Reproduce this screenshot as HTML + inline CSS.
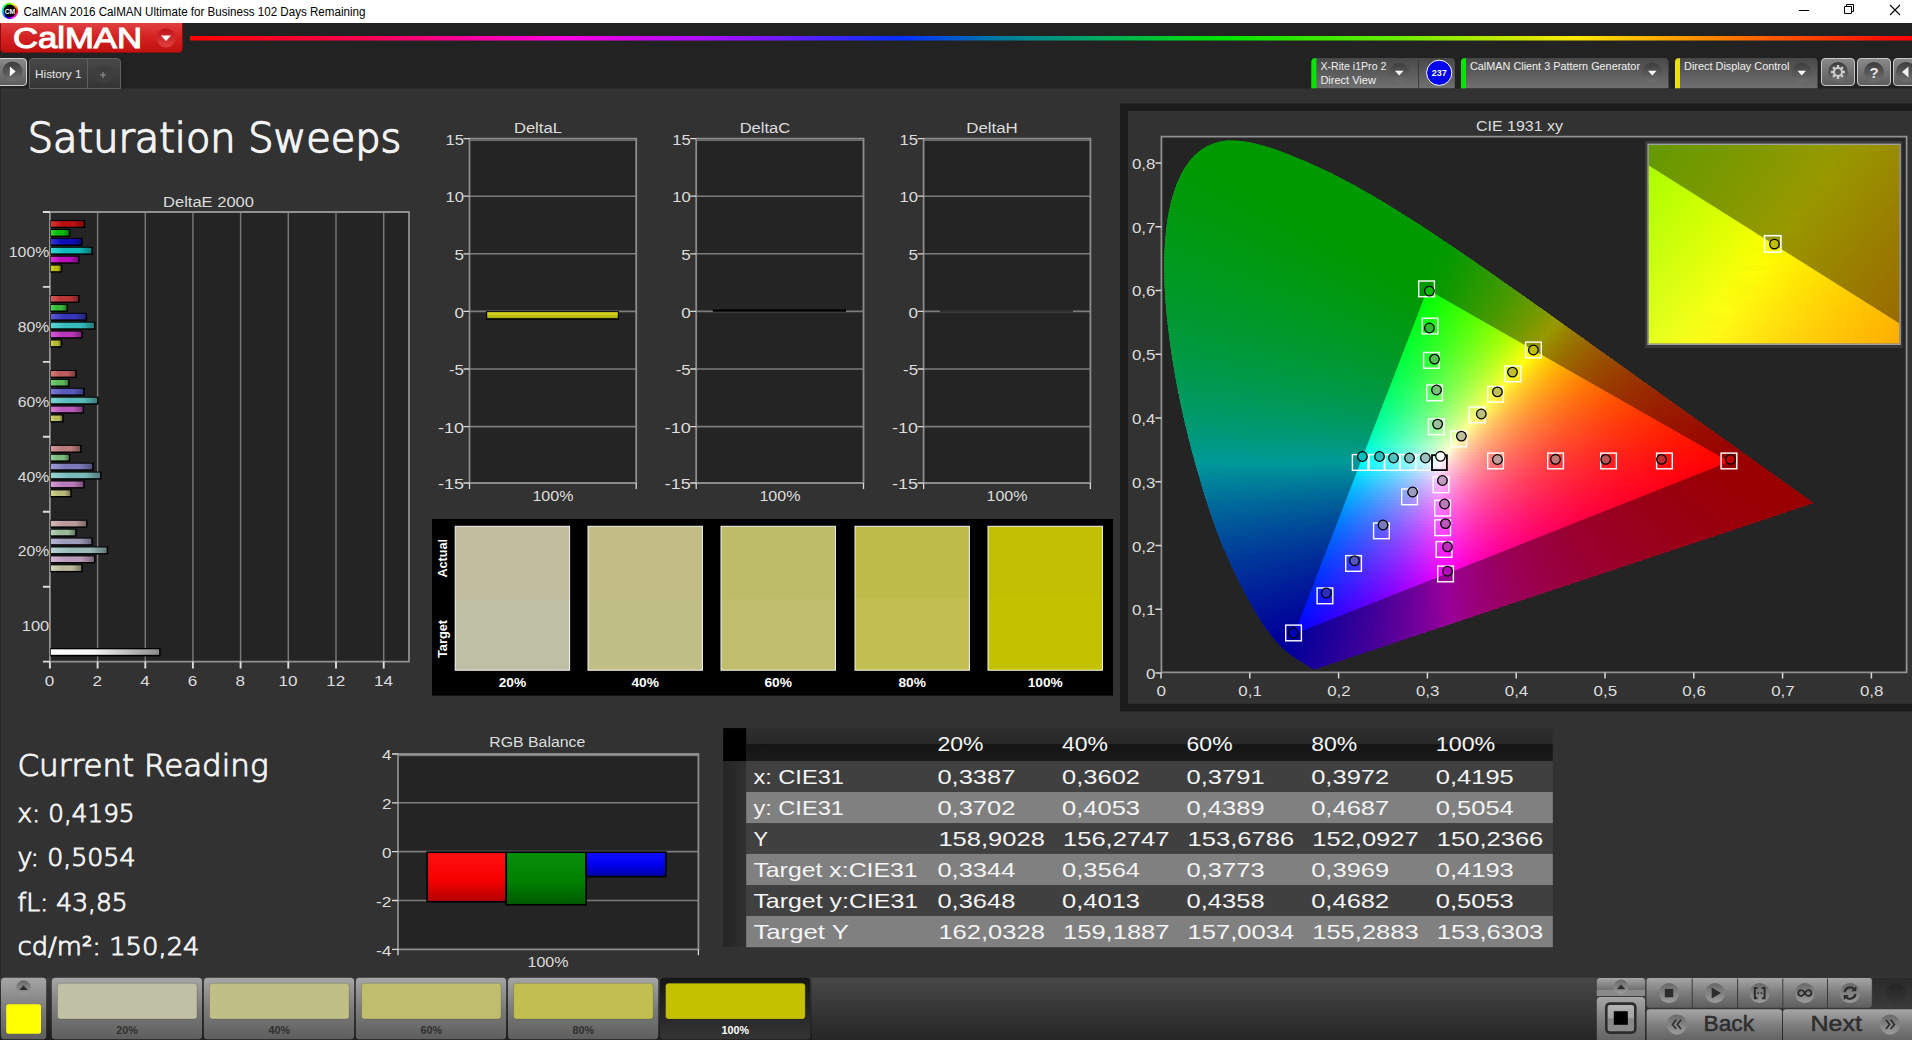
<!DOCTYPE html>
<html lang="en"><head><meta charset="utf-8"><title>CalMAN 2016 - Saturation Sweeps</title>
<style>
html,body{margin:0;padding:0;background:#323232;overflow:hidden}
body{width:1912px;height:1040px;position:relative;font-family:'Liberation Sans','DejaVu Sans',sans-serif}
svg{position:absolute;left:0;top:0;display:block}
svg text{font-family:'Liberation Sans','DejaVu Sans',sans-serif}
svg text.lt{font-family:'DejaVu Sans Light','DejaVu Sans',sans-serif;font-weight:200}
</style></head><body>
<svg width="1912" height="1040" viewBox="0 0 1912 1040">
<defs>
<linearGradient id="redbtn" x1="0" y1="0" x2="0" y2="1"><stop offset="0" stop-color="#e04040"/><stop offset=".5" stop-color="#d42020"/><stop offset="1" stop-color="#c01010"/></linearGradient>
<linearGradient id="redcirc" x1="0" y1="0" x2="0" y2="1"><stop offset="0" stop-color="#c01018"/><stop offset="1" stop-color="#e04040"/></linearGradient>
<linearGradient id="rainbow" gradientUnits="userSpaceOnUse" x1="190" x2="1912"><stop offset="0" stop-color="#ff0000"/><stop offset=".1" stop-color="#ff0050"/><stop offset=".215" stop-color="#ff00e0"/><stop offset=".31" stop-color="#a010ff"/><stop offset=".415" stop-color="#0030ff"/><stop offset=".47" stop-color="#007ca0"/><stop offset=".515" stop-color="#00a070"/><stop offset=".6" stop-color="#00e400"/><stop offset=".7" stop-color="#68ee00"/><stop offset=".805" stop-color="#ffe800"/><stop offset=".9" stop-color="#ff7000"/><stop offset="1" stop-color="#ff0000"/></linearGradient>
<linearGradient id="btngray" x1="0" y1="0" x2="0" y2="1"><stop offset="0" stop-color="#8a8a8a"/><stop offset="1" stop-color="#5c5c5c"/></linearGradient>
<linearGradient id="tabdark" x1="0" y1="0" x2="0" y2="1"><stop offset="0" stop-color="#484848"/><stop offset="1" stop-color="#343434"/></linearGradient>
<linearGradient id="circdark" x1="0" y1="0" x2="0" y2="1"><stop offset="0" stop-color="#3c3c3c"/><stop offset="1" stop-color="#707070"/></linearGradient>
<linearGradient id="tabgray" x1="0" y1="0" x2="0" y2="1"><stop offset="0" stop-color="#484848"/><stop offset="1" stop-color="#707070"/></linearGradient>
<linearGradient id="bg0" x1="0" x2="1"><stop offset="0" stop-color="#d43737"/><stop offset=".35" stop-color="#ba0f0f"/><stop offset=".7" stop-color="#ba0f0f"/><stop offset="1" stop-color="#7b0a0a"/></linearGradient>
<linearGradient id="bg1" x1="0" x2="1"><stop offset="0" stop-color="#37d437"/><stop offset=".35" stop-color="#0fba0f"/><stop offset=".7" stop-color="#0fba0f"/><stop offset="1" stop-color="#0a7b0a"/></linearGradient>
<linearGradient id="bg2" x1="0" x2="1"><stop offset="0" stop-color="#3737d4"/><stop offset=".35" stop-color="#0f0fba"/><stop offset=".7" stop-color="#0f0fba"/><stop offset="1" stop-color="#0a0a7b"/></linearGradient>
<linearGradient id="bg3" x1="0" x2="1"><stop offset="0" stop-color="#37d4d4"/><stop offset=".35" stop-color="#0fbaba"/><stop offset=".7" stop-color="#0fbaba"/><stop offset="1" stop-color="#0a7b7b"/></linearGradient>
<linearGradient id="bg4" x1="0" x2="1"><stop offset="0" stop-color="#d437d4"/><stop offset=".35" stop-color="#ba0fba"/><stop offset=".7" stop-color="#ba0fba"/><stop offset="1" stop-color="#7b0a7b"/></linearGradient>
<linearGradient id="bg5" x1="0" x2="1"><stop offset="0" stop-color="#d4d437"/><stop offset=".35" stop-color="#baba0f"/><stop offset=".7" stop-color="#baba0f"/><stop offset="1" stop-color="#7b7b0a"/></linearGradient>
<linearGradient id="bg6" x1="0" x2="1"><stop offset="0" stop-color="#d45c5c"/><stop offset=".35" stop-color="#ba3737"/><stop offset=".7" stop-color="#ba3737"/><stop offset="1" stop-color="#7b2424"/></linearGradient>
<linearGradient id="bg7" x1="0" x2="1"><stop offset="0" stop-color="#5cd45c"/><stop offset=".35" stop-color="#37ba37"/><stop offset=".7" stop-color="#37ba37"/><stop offset="1" stop-color="#247b24"/></linearGradient>
<linearGradient id="bg8" x1="0" x2="1"><stop offset="0" stop-color="#5c5cd4"/><stop offset=".35" stop-color="#3737ba"/><stop offset=".7" stop-color="#3737ba"/><stop offset="1" stop-color="#24247b"/></linearGradient>
<linearGradient id="bg9" x1="0" x2="1"><stop offset="0" stop-color="#5cd4d4"/><stop offset=".35" stop-color="#37baba"/><stop offset=".7" stop-color="#37baba"/><stop offset="1" stop-color="#247b7b"/></linearGradient>
<linearGradient id="bg10" x1="0" x2="1"><stop offset="0" stop-color="#d45cd4"/><stop offset=".35" stop-color="#ba37ba"/><stop offset=".7" stop-color="#ba37ba"/><stop offset="1" stop-color="#7b247b"/></linearGradient>
<linearGradient id="bg11" x1="0" x2="1"><stop offset="0" stop-color="#d4d45c"/><stop offset=".35" stop-color="#baba37"/><stop offset=".7" stop-color="#baba37"/><stop offset="1" stop-color="#7b7b24"/></linearGradient>
<linearGradient id="bg12" x1="0" x2="1"><stop offset="0" stop-color="#d47c7c"/><stop offset=".35" stop-color="#ba5a5a"/><stop offset=".7" stop-color="#ba5a5a"/><stop offset="1" stop-color="#7b3b3b"/></linearGradient>
<linearGradient id="bg13" x1="0" x2="1"><stop offset="0" stop-color="#7cd47c"/><stop offset=".35" stop-color="#5aba5a"/><stop offset=".7" stop-color="#5aba5a"/><stop offset="1" stop-color="#3b7b3b"/></linearGradient>
<linearGradient id="bg14" x1="0" x2="1"><stop offset="0" stop-color="#7c7cd4"/><stop offset=".35" stop-color="#5a5aba"/><stop offset=".7" stop-color="#5a5aba"/><stop offset="1" stop-color="#3b3b7b"/></linearGradient>
<linearGradient id="bg15" x1="0" x2="1"><stop offset="0" stop-color="#7cd4d4"/><stop offset=".35" stop-color="#5ababa"/><stop offset=".7" stop-color="#5ababa"/><stop offset="1" stop-color="#3b7b7b"/></linearGradient>
<linearGradient id="bg16" x1="0" x2="1"><stop offset="0" stop-color="#d47cd4"/><stop offset=".35" stop-color="#ba5aba"/><stop offset=".7" stop-color="#ba5aba"/><stop offset="1" stop-color="#7b3b7b"/></linearGradient>
<linearGradient id="bg17" x1="0" x2="1"><stop offset="0" stop-color="#d4d47c"/><stop offset=".35" stop-color="#baba5a"/><stop offset=".7" stop-color="#baba5a"/><stop offset="1" stop-color="#7b7b3b"/></linearGradient>
<linearGradient id="bg18" x1="0" x2="1"><stop offset="0" stop-color="#d49a9a"/><stop offset=".35" stop-color="#ba7b7b"/><stop offset=".7" stop-color="#ba7b7b"/><stop offset="1" stop-color="#7b5151"/></linearGradient>
<linearGradient id="bg19" x1="0" x2="1"><stop offset="0" stop-color="#9ad49a"/><stop offset=".35" stop-color="#7bba7b"/><stop offset=".7" stop-color="#7bba7b"/><stop offset="1" stop-color="#517b51"/></linearGradient>
<linearGradient id="bg20" x1="0" x2="1"><stop offset="0" stop-color="#9a9ad4"/><stop offset=".35" stop-color="#7b7bba"/><stop offset=".7" stop-color="#7b7bba"/><stop offset="1" stop-color="#51517b"/></linearGradient>
<linearGradient id="bg21" x1="0" x2="1"><stop offset="0" stop-color="#9ad4d4"/><stop offset=".35" stop-color="#7bbaba"/><stop offset=".7" stop-color="#7bbaba"/><stop offset="1" stop-color="#517b7b"/></linearGradient>
<linearGradient id="bg22" x1="0" x2="1"><stop offset="0" stop-color="#d49ad4"/><stop offset=".35" stop-color="#ba7bba"/><stop offset=".7" stop-color="#ba7bba"/><stop offset="1" stop-color="#7b517b"/></linearGradient>
<linearGradient id="bg23" x1="0" x2="1"><stop offset="0" stop-color="#d4d49a"/><stop offset=".35" stop-color="#baba7b"/><stop offset=".7" stop-color="#baba7b"/><stop offset="1" stop-color="#7b7b51"/></linearGradient>
<linearGradient id="bg24" x1="0" x2="1"><stop offset="0" stop-color="#d4b7b7"/><stop offset=".35" stop-color="#ba9b9b"/><stop offset=".7" stop-color="#ba9b9b"/><stop offset="1" stop-color="#7b6666"/></linearGradient>
<linearGradient id="bg25" x1="0" x2="1"><stop offset="0" stop-color="#b7d4b7"/><stop offset=".35" stop-color="#9bba9b"/><stop offset=".7" stop-color="#9bba9b"/><stop offset="1" stop-color="#667b66"/></linearGradient>
<linearGradient id="bg26" x1="0" x2="1"><stop offset="0" stop-color="#b7b7d4"/><stop offset=".35" stop-color="#9b9bba"/><stop offset=".7" stop-color="#9b9bba"/><stop offset="1" stop-color="#66667b"/></linearGradient>
<linearGradient id="bg27" x1="0" x2="1"><stop offset="0" stop-color="#b7d4d4"/><stop offset=".35" stop-color="#9bbaba"/><stop offset=".7" stop-color="#9bbaba"/><stop offset="1" stop-color="#667b7b"/></linearGradient>
<linearGradient id="bg28" x1="0" x2="1"><stop offset="0" stop-color="#d4b7d4"/><stop offset=".35" stop-color="#ba9bba"/><stop offset=".7" stop-color="#ba9bba"/><stop offset="1" stop-color="#7b667b"/></linearGradient>
<linearGradient id="bg29" x1="0" x2="1"><stop offset="0" stop-color="#d4d4b7"/><stop offset=".35" stop-color="#baba9b"/><stop offset=".7" stop-color="#baba9b"/><stop offset="1" stop-color="#7b7b66"/></linearGradient>
<linearGradient id="bgw" x1="0" x2="1"><stop offset="0" stop-color="#fff"/><stop offset=".4" stop-color="#f4f4f4"/><stop offset="1" stop-color="#8c8c8c"/></linearGradient>
<linearGradient id="ybar" x1="0" y1="0" x2="0" y2="1"><stop offset="0" stop-color="#e6e628"/><stop offset=".5" stop-color="#c4c410"/><stop offset="1" stop-color="#a8a808"/></linearGradient>
<clipPath id="locclip"><path d="M1315.6 669L1314.1 669.1L1312.6 668.7L1311.3 668L1309.6 667L1307.9 665.9L1306.5 664.9L1304.7 663.8L1303.4 663L1301.8 662L1300.1 660.9L1298.2 659.7L1296.2 658.4L1293.9 656.9L1291.5 655.2L1290.2 654.3L1288.8 653.3L1287.5 652.2L1286 651L1284.5 649.8L1283 648.4L1281.3 646.8L1279.6 645L1277.7 642.9L1275.6 640.7L1273.5 638.1L1271.2 635.3L1268.9 632.3L1266.4 629L1263.8 625.3L1261.1 621.3L1258.3 616.8L1255.4 612L1252.3 606.6L1249 600.8L1245.6 594.4L1242.1 587.6L1238.3 580.2L1234.4 572.2L1230.4 563.5L1226.2 554.2L1222 544.2L1217.8 533.5L1213.7 522.2L1209.5 510.2L1205.4 497.5L1201.3 484.1L1197.2 470.1L1193.1 455.5L1189.2 440.4L1185.4 424.9L1181.8 409.1L1178.5 393.1L1175.4 377L1172.7 360.9L1170.3 344.9L1168.3 328.9L1166.6 313.2L1165.3 297.9L1164.5 283L1164.2 268.6L1164.4 254.7L1165.1 241.2L1166.3 228.4L1168.1 216.1L1170.4 204.6L1173.3 193.9L1176.8 184L1180.8 175.1L1185.2 167.2L1190.1 160.3L1195.5 154.5L1201.3 149.8L1207.3 146.1L1213.7 143.4L1220.2 141.5L1227 140.6L1233.9 140.4L1240.9 140.9L1248 142L1255.1 143.5L1262.4 145.4L1269.6 147.6L1276.9 150.1L1284.2 152.7L1291.3 155.5L1298.4 158.4L1305.3 161.3L1312.2 164.3L1318.9 167.4L1325.6 170.6L1332.3 173.8L1338.9 177.2L1345.4 180.6L1351.9 184.1L1358.4 187.6L1364.9 191.2L1371.4 194.9L1377.8 198.7L1384.2 202.5L1390.6 206.4L1397 210.4L1403.4 214.4L1409.8 218.4L1416.1 222.5L1422.5 226.6L1428.8 230.8L1435.2 235L1441.5 239.2L1447.9 243.5L1454.2 247.8L1460.6 252.1L1466.9 256.5L1473.3 260.8L1479.6 265.2L1486 269.6L1492.3 274.1L1498.7 278.5L1505 282.9L1511.3 287.4L1517.6 291.8L1524 296.3L1530.3 300.7L1536.6 305.2L1542.8 309.6L1549.1 314.1L1555.3 318.5L1561.5 322.9L1567.7 327.4L1573.9 331.8L1580 336.2L1586.2 340.5L1592.2 344.9L1598.3 349.2L1604.2 353.5L1610.2 357.7L1616.1 361.9L1621.9 366.1L1627.7 370.3L1633.5 374.4L1639.2 378.4L1644.8 382.5L1650.3 386.4L1655.8 390.3L1661.2 394.2L1666.5 398L1671.7 401.7L1676.9 405.4L1681.9 409L1686.9 412.6L1691.7 416L1696.4 419.4L1700.9 422.6L1705.3 425.8L1709.6 428.8L1713.7 431.8L1717.8 434.7L1721.8 437.5L1725.7 440.3L1729.5 443L1733.1 445.6L1736.6 448.2L1740 450.6L1743.2 452.9L1746.3 455.1L1749.3 457.2L1752.2 459.2L1755 461.2L1757.6 463.1L1760.2 464.9L1762.6 466.7L1764.9 468.3L1767.1 469.9L1769.3 471.4L1771.3 472.9L1773.2 474.3L1775.1 475.6L1776.8 476.9L1778.5 478.1L1780.1 479.2L1781.7 480.3L1783.1 481.4L1784.5 482.4L1785.9 483.3L1787.2 484.3L1788.4 485.1L1790.8 486.8L1793 488.4L1795.1 489.9L1796.9 491.2L1798.7 492.5L1800.3 493.6L1801.7 494.7L1803.1 495.6L1804.7 496.8L1806.1 497.8L1807.7 498.9L1809 499.8L1810.2 500.7L1811.5 501.7L1812.8 502.6L1813.4 503Z"/></clipPath>
<linearGradient id="c0" gradientUnits="userSpaceOnUse" x1="1214" x2="1253.7"><stop offset="0" stop-color="#0f0"/><stop offset=".5" stop-color="#0f0"/><stop offset="1" stop-color="#0f0"/></linearGradient>
<linearGradient id="c1" gradientUnits="userSpaceOnUse" x1="1206.5" x2="1265.3"><stop offset="0" stop-color="#0f0"/><stop offset=".333" stop-color="#0f0"/><stop offset=".667" stop-color="#0f0"/><stop offset="1" stop-color="#0f0"/></linearGradient>
<linearGradient id="c2" gradientUnits="userSpaceOnUse" x1="1201.5" x2="1274.8"><stop offset="0" stop-color="#0f0"/><stop offset=".333" stop-color="#0f0"/><stop offset=".667" stop-color="#0f0"/><stop offset="1" stop-color="#0f0"/></linearGradient>
<linearGradient id="c3" gradientUnits="userSpaceOnUse" x1="1197.5" x2="1283.3"><stop offset="0" stop-color="#0f0"/><stop offset=".25" stop-color="#0f0"/><stop offset=".5" stop-color="#0f0"/><stop offset=".75" stop-color="#0f0"/><stop offset="1" stop-color="#0f0"/></linearGradient>
<linearGradient id="c4" gradientUnits="userSpaceOnUse" x1="1194" x2="1291.1"><stop offset="0" stop-color="#0f0"/><stop offset=".25" stop-color="#0f0"/><stop offset=".5" stop-color="#0f0"/><stop offset=".75" stop-color="#0f0"/><stop offset="1" stop-color="#0f0"/></linearGradient>
<linearGradient id="c5" gradientUnits="userSpaceOnUse" x1="1191.2" x2="1298.5"><stop offset="0" stop-color="#00ff01"/><stop offset=".2" stop-color="#0f0"/><stop offset=".4" stop-color="#0f0"/><stop offset=".6" stop-color="#0f0"/><stop offset=".8" stop-color="#0f0"/><stop offset="1" stop-color="#0f0"/></linearGradient>
<linearGradient id="c6" gradientUnits="userSpaceOnUse" x1="1188.6" x2="1305.6"><stop offset="0" stop-color="#00ff02"/><stop offset=".2" stop-color="#0f0"/><stop offset=".4" stop-color="#0f0"/><stop offset=".6" stop-color="#0f0"/><stop offset=".8" stop-color="#0f0"/><stop offset="1" stop-color="#0f0"/></linearGradient>
<linearGradient id="c7" gradientUnits="userSpaceOnUse" x1="1186.5" x2="1312.4"><stop offset="0" stop-color="#00ff03"/><stop offset=".2" stop-color="#0f0"/><stop offset=".4" stop-color="#0f0"/><stop offset=".6" stop-color="#0f0"/><stop offset=".8" stop-color="#0f0"/><stop offset="1" stop-color="#0f0"/></linearGradient>
<linearGradient id="c8" gradientUnits="userSpaceOnUse" x1="1184.3" x2="1319"><stop offset="0" stop-color="#00ff05"/><stop offset=".167" stop-color="#00ff01"/><stop offset=".333" stop-color="#0f0"/><stop offset=".5" stop-color="#0f0"/><stop offset=".667" stop-color="#0f0"/><stop offset=".833" stop-color="#0f0"/><stop offset="1" stop-color="#0f0"/></linearGradient>
<linearGradient id="c9" gradientUnits="userSpaceOnUse" x1="1182.6" x2="1325.4"><stop offset="0" stop-color="#00ff06"/><stop offset=".167" stop-color="#00ff02"/><stop offset=".333" stop-color="#0f0"/><stop offset=".5" stop-color="#0f0"/><stop offset=".667" stop-color="#0f0"/><stop offset=".833" stop-color="#0f0"/><stop offset="1" stop-color="#0f0"/></linearGradient>
<linearGradient id="c10" gradientUnits="userSpaceOnUse" x1="1180.9" x2="1331.6"><stop offset="0" stop-color="#00ff08"/><stop offset=".167" stop-color="#00ff03"/><stop offset=".333" stop-color="#0f0"/><stop offset=".5" stop-color="#0f0"/><stop offset=".667" stop-color="#0f0"/><stop offset=".833" stop-color="#0f0"/><stop offset="1" stop-color="#0f0"/></linearGradient>
<linearGradient id="c11" gradientUnits="userSpaceOnUse" x1="1179.4" x2="1337.6"><stop offset="0" stop-color="#00ff09"/><stop offset=".143" stop-color="#00ff05"/><stop offset=".286" stop-color="#0f0"/><stop offset=".429" stop-color="#0f0"/><stop offset=".571" stop-color="#0f0"/><stop offset=".714" stop-color="#0f0"/><stop offset=".857" stop-color="#0f0"/><stop offset="1" stop-color="#0f0"/></linearGradient>
<linearGradient id="c12" gradientUnits="userSpaceOnUse" x1="1178" x2="1343.4"><stop offset="0" stop-color="#00ff0a"/><stop offset=".143" stop-color="#00ff06"/><stop offset=".286" stop-color="#00ff01"/><stop offset=".429" stop-color="#0f0"/><stop offset=".571" stop-color="#0f0"/><stop offset=".714" stop-color="#0f0"/><stop offset=".857" stop-color="#0f0"/><stop offset="1" stop-color="#0f0"/></linearGradient>
<linearGradient id="c13" gradientUnits="userSpaceOnUse" x1="1176.7" x2="1349.1"><stop offset="0" stop-color="#00ff0c"/><stop offset=".143" stop-color="#00ff07"/><stop offset=".286" stop-color="#00ff02"/><stop offset=".429" stop-color="#0f0"/><stop offset=".571" stop-color="#0f0"/><stop offset=".714" stop-color="#0f0"/><stop offset=".857" stop-color="#0f0"/><stop offset="1" stop-color="#0f0"/></linearGradient>
<linearGradient id="c14" gradientUnits="userSpaceOnUse" x1="1175.4" x2="1354.7"><stop offset="0" stop-color="#00ff0d"/><stop offset=".143" stop-color="#00ff08"/><stop offset=".286" stop-color="#00ff03"/><stop offset=".429" stop-color="#0f0"/><stop offset=".571" stop-color="#0f0"/><stop offset=".714" stop-color="#0f0"/><stop offset=".857" stop-color="#0f0"/><stop offset="1" stop-color="#0f0"/></linearGradient>
<linearGradient id="c15" gradientUnits="userSpaceOnUse" x1="1174.4" x2="1360.1"><stop offset="0" stop-color="#00ff0f"/><stop offset=".125" stop-color="#00ff0a"/><stop offset=".25" stop-color="#00ff05"/><stop offset=".375" stop-color="#00ff01"/><stop offset=".5" stop-color="#0f0"/><stop offset=".625" stop-color="#0f0"/><stop offset=".75" stop-color="#0f0"/><stop offset=".875" stop-color="#0f0"/><stop offset="1" stop-color="#0f0"/></linearGradient>
<linearGradient id="c16" gradientUnits="userSpaceOnUse" x1="1173.3" x2="1365.5"><stop offset="0" stop-color="#00ff10"/><stop offset=".125" stop-color="#00ff0b"/><stop offset=".25" stop-color="#00ff06"/><stop offset=".375" stop-color="#00ff01"/><stop offset=".5" stop-color="#0f0"/><stop offset=".625" stop-color="#0f0"/><stop offset=".75" stop-color="#0f0"/><stop offset=".875" stop-color="#0f0"/><stop offset="1" stop-color="#0f0"/></linearGradient>
<linearGradient id="c17" gradientUnits="userSpaceOnUse" x1="1172.3" x2="1370.7"><stop offset="0" stop-color="#0f1"/><stop offset=".125" stop-color="#00ff0c"/><stop offset=".25" stop-color="#00ff07"/><stop offset=".375" stop-color="#00ff02"/><stop offset=".5" stop-color="#0f0"/><stop offset=".625" stop-color="#0f0"/><stop offset=".75" stop-color="#0f0"/><stop offset=".875" stop-color="#0f0"/><stop offset="1" stop-color="#0f0"/></linearGradient>
<linearGradient id="c18" gradientUnits="userSpaceOnUse" x1="1171.5" x2="1375.9"><stop offset="0" stop-color="#00ff13"/><stop offset=".125" stop-color="#00ff0e"/><stop offset=".25" stop-color="#00ff09"/><stop offset=".375" stop-color="#00ff03"/><stop offset=".5" stop-color="#0f0"/><stop offset=".625" stop-color="#0f0"/><stop offset=".75" stop-color="#0f0"/><stop offset=".875" stop-color="#0f0"/><stop offset="1" stop-color="#0f0"/></linearGradient>
<linearGradient id="c19" gradientUnits="userSpaceOnUse" x1="1170.7" x2="1381"><stop offset="0" stop-color="#00ff14"/><stop offset=".111" stop-color="#00ff0f"/><stop offset=".222" stop-color="#00ff0b"/><stop offset=".333" stop-color="#00ff06"/><stop offset=".444" stop-color="#00ff01"/><stop offset=".556" stop-color="#0f0"/><stop offset=".667" stop-color="#0f0"/><stop offset=".778" stop-color="#0f0"/><stop offset=".889" stop-color="#0f0"/><stop offset="1" stop-color="#0f0"/></linearGradient>
<linearGradient id="c20" gradientUnits="userSpaceOnUse" x1="1169.8" x2="1386"><stop offset="0" stop-color="#00ff15"/><stop offset=".111" stop-color="#0f1"/><stop offset=".222" stop-color="#00ff0c"/><stop offset=".333" stop-color="#00ff07"/><stop offset=".444" stop-color="#00ff02"/><stop offset=".556" stop-color="#0f0"/><stop offset=".667" stop-color="#0f0"/><stop offset=".778" stop-color="#0f0"/><stop offset=".889" stop-color="#0f0"/><stop offset="1" stop-color="#0f0"/></linearGradient>
<linearGradient id="c21" gradientUnits="userSpaceOnUse" x1="1169.1" x2="1390.9"><stop offset="0" stop-color="#00ff17"/><stop offset=".111" stop-color="#00ff12"/><stop offset=".222" stop-color="#00ff0d"/><stop offset=".333" stop-color="#00ff08"/><stop offset=".444" stop-color="#00ff02"/><stop offset=".556" stop-color="#0f0"/><stop offset=".667" stop-color="#0f0"/><stop offset=".778" stop-color="#0f0"/><stop offset=".889" stop-color="#0f0"/><stop offset="1" stop-color="#0f0"/></linearGradient>
<linearGradient id="c22" gradientUnits="userSpaceOnUse" x1="1168.5" x2="1395.8"><stop offset="0" stop-color="#00ff18"/><stop offset=".111" stop-color="#00ff13"/><stop offset=".222" stop-color="#00ff0e"/><stop offset=".333" stop-color="#00ff09"/><stop offset=".444" stop-color="#00ff03"/><stop offset=".556" stop-color="#0f0"/><stop offset=".667" stop-color="#0f0"/><stop offset=".778" stop-color="#0f0"/><stop offset=".889" stop-color="#0f0"/><stop offset="1" stop-color="#0f0"/></linearGradient>
<linearGradient id="c23" gradientUnits="userSpaceOnUse" x1="1167.9" x2="1400.6"><stop offset="0" stop-color="#00ff19"/><stop offset=".111" stop-color="#00ff14"/><stop offset=".222" stop-color="#00ff0f"/><stop offset=".333" stop-color="#00ff0a"/><stop offset=".444" stop-color="#00ff04"/><stop offset=".556" stop-color="#0f0"/><stop offset=".667" stop-color="#0f0"/><stop offset=".778" stop-color="#0f0"/><stop offset=".889" stop-color="#0f0"/><stop offset="1" stop-color="#0f0"/></linearGradient>
<linearGradient id="c24" gradientUnits="userSpaceOnUse" x1="1167.3" x2="1405.4"><stop offset="0" stop-color="#00ff1b"/><stop offset=".1" stop-color="#00ff16"/><stop offset=".2" stop-color="#0f1"/><stop offset=".3" stop-color="#00ff0c"/><stop offset=".4" stop-color="#00ff07"/><stop offset=".5" stop-color="#00ff02"/><stop offset=".6" stop-color="#0f0"/><stop offset=".7" stop-color="#0f0"/><stop offset=".8" stop-color="#0f0"/><stop offset=".9" stop-color="#0f0"/><stop offset="1" stop-color="#0f0"/></linearGradient>
<linearGradient id="c25" gradientUnits="userSpaceOnUse" x1="1166.8" x2="1410.1"><stop offset="0" stop-color="#00ff1c"/><stop offset=".1" stop-color="#00ff18"/><stop offset=".2" stop-color="#00ff13"/><stop offset=".3" stop-color="#00ff0e"/><stop offset=".4" stop-color="#00ff08"/><stop offset=".5" stop-color="#00ff03"/><stop offset=".6" stop-color="#0f0"/><stop offset=".7" stop-color="#0f0"/><stop offset=".8" stop-color="#0f0"/><stop offset=".9" stop-color="#0f0"/><stop offset="1" stop-color="#0f0"/></linearGradient>
<linearGradient id="c26" gradientUnits="userSpaceOnUse" x1="1166.4" x2="1414.8"><stop offset="0" stop-color="#00ff1e"/><stop offset=".1" stop-color="#00ff19"/><stop offset=".2" stop-color="#00ff14"/><stop offset=".3" stop-color="#00ff0f"/><stop offset=".4" stop-color="#00ff09"/><stop offset=".5" stop-color="#00ff03"/><stop offset=".6" stop-color="#0f0"/><stop offset=".7" stop-color="#0f0"/><stop offset=".8" stop-color="#0f0"/><stop offset=".9" stop-color="#0f0"/><stop offset="1" stop-color="#0f0"/></linearGradient>
<linearGradient id="c27" gradientUnits="userSpaceOnUse" x1="1166" x2="1419.4"><stop offset="0" stop-color="#00ff1f"/><stop offset=".1" stop-color="#00ff1a"/><stop offset=".2" stop-color="#00ff15"/><stop offset=".3" stop-color="#00ff10"/><stop offset=".4" stop-color="#00ff0a"/><stop offset=".5" stop-color="#00ff04"/><stop offset=".6" stop-color="#0f0"/><stop offset=".7" stop-color="#0f0"/><stop offset=".8" stop-color="#0f0"/><stop offset=".9" stop-color="#0f0"/><stop offset="1" stop-color="#0f0"/></linearGradient>
<linearGradient id="c28" gradientUnits="userSpaceOnUse" x1="1165.5" x2="1424.1"><stop offset="0" stop-color="#00ff21"/><stop offset=".1" stop-color="#00ff1b"/><stop offset=".2" stop-color="#00ff16"/><stop offset=".3" stop-color="#0f1"/><stop offset=".4" stop-color="#00ff0b"/><stop offset=".5" stop-color="#00ff05"/><stop offset=".6" stop-color="#0f0"/><stop offset=".7" stop-color="#0f0"/><stop offset=".8" stop-color="#0f0"/><stop offset=".9" stop-color="#0f0"/><stop offset="1" stop-color="#0f0"/></linearGradient>
<linearGradient id="c29" gradientUnits="userSpaceOnUse" x1="1165.2" x2="1428.6"><stop offset="0" stop-color="#0f2"/><stop offset=".098" stop-color="#00ff1d"/><stop offset=".196" stop-color="#00ff18"/><stop offset=".294" stop-color="#00ff12"/><stop offset=".392" stop-color="#00ff0c"/><stop offset=".49" stop-color="#00ff06"/><stop offset=".588" stop-color="#0f0"/><stop offset=".686" stop-color="#0f0"/><stop offset=".784" stop-color="#0f0"/><stop offset=".882" stop-color="#0f0"/><stop offset=".98" stop-color="#0f0"/><stop offset="1" stop-color="#0f0"/></linearGradient>
<linearGradient id="c30" gradientUnits="userSpaceOnUse" x1="1164.9" x2="1433.2"><stop offset="0" stop-color="#00ff23"/><stop offset=".096" stop-color="#00ff1e"/><stop offset=".193" stop-color="#00ff19"/><stop offset=".289" stop-color="#00ff14"/><stop offset=".386" stop-color="#00ff0e"/><stop offset=".482" stop-color="#00ff08"/><stop offset=".579" stop-color="#00ff01"/><stop offset=".675" stop-color="#0f0"/><stop offset=".771" stop-color="#0f0"/><stop offset=".868" stop-color="#0f0"/><stop offset=".964" stop-color="#0f0"/><stop offset="1" stop-color="#0f0"/></linearGradient>
<linearGradient id="c31" gradientUnits="userSpaceOnUse" x1="1164.6" x2="1437.7"><stop offset="0" stop-color="#00ff25"/><stop offset=".095" stop-color="#00ff20"/><stop offset=".19" stop-color="#00ff1b"/><stop offset=".285" stop-color="#00ff15"/><stop offset=".38" stop-color="#00ff0f"/><stop offset=".475" stop-color="#00ff09"/><stop offset=".569" stop-color="#00ff03"/><stop offset=".664" stop-color="#0f0"/><stop offset=".759" stop-color="#0f0"/><stop offset=".854" stop-color="#0f0"/><stop offset=".949" stop-color="#0f0"/><stop offset="1" stop-color="#0f0"/></linearGradient>
<linearGradient id="c32" gradientUnits="userSpaceOnUse" x1="1164.3" x2="1442.2"><stop offset="0" stop-color="#00ff26"/><stop offset=".093" stop-color="#00ff21"/><stop offset=".187" stop-color="#00ff1c"/><stop offset=".28" stop-color="#00ff16"/><stop offset=".374" stop-color="#0f1"/><stop offset=".467" stop-color="#00ff0b"/><stop offset=".561" stop-color="#00ff04"/><stop offset=".654" stop-color="#0f0"/><stop offset=".748" stop-color="#0f0"/><stop offset=".841" stop-color="#0f0"/><stop offset=".935" stop-color="#0f0"/><stop offset="1" stop-color="#0f0"/></linearGradient>
<linearGradient id="c33" gradientUnits="userSpaceOnUse" x1="1164.1" x2="1446.7"><stop offset="0" stop-color="#00ff28"/><stop offset=".084" stop-color="#00ff23"/><stop offset=".167" stop-color="#00ff1e"/><stop offset=".251" stop-color="#00ff19"/><stop offset=".335" stop-color="#00ff14"/><stop offset=".418" stop-color="#00ff0f"/><stop offset=".502" stop-color="#00ff09"/><stop offset=".586" stop-color="#00ff03"/><stop offset=".669" stop-color="#0f0"/><stop offset=".753" stop-color="#0f0"/><stop offset=".837" stop-color="#0f0"/><stop offset=".92" stop-color="#0f0"/><stop offset="1" stop-color="#0f0"/></linearGradient>
<linearGradient id="c34" gradientUnits="userSpaceOnUse" x1="1163.9" x2="1451.1"><stop offset="0" stop-color="#00ff29"/><stop offset=".082" stop-color="#00ff25"/><stop offset=".165" stop-color="#00ff20"/><stop offset=".247" stop-color="#00ff1b"/><stop offset=".33" stop-color="#00ff16"/><stop offset=".412" stop-color="#00ff10"/><stop offset=".495" stop-color="#00ff0a"/><stop offset=".577" stop-color="#00ff04"/><stop offset=".66" stop-color="#0f0"/><stop offset=".742" stop-color="#0f0"/><stop offset=".825" stop-color="#0f0"/><stop offset=".907" stop-color="#0f0"/><stop offset=".953" stop-color="#0f0"/><stop offset="1" stop-color="#07ff00"/></linearGradient>
<linearGradient id="c35" gradientUnits="userSpaceOnUse" x1="1163.8" x2="1455.5"><stop offset="0" stop-color="#00ff2b"/><stop offset=".081" stop-color="#00ff26"/><stop offset=".163" stop-color="#00ff21"/><stop offset=".244" stop-color="#00ff1c"/><stop offset=".325" stop-color="#00ff17"/><stop offset=".406" stop-color="#00ff12"/><stop offset=".488" stop-color="#00ff0c"/><stop offset=".569" stop-color="#00ff06"/><stop offset=".65" stop-color="#0f0"/><stop offset=".731" stop-color="#0f0"/><stop offset=".813" stop-color="#0f0"/><stop offset=".894" stop-color="#0f0"/><stop offset=".947" stop-color="#0f0"/><stop offset="1" stop-color="#0dff00"/></linearGradient>
<linearGradient id="c36" gradientUnits="userSpaceOnUse" x1="1163.6" x2="1459.9"><stop offset="0" stop-color="#00ff2c"/><stop offset=".08" stop-color="#00ff28"/><stop offset=".16" stop-color="#00ff23"/><stop offset=".24" stop-color="#00ff1e"/><stop offset=".32" stop-color="#00ff19"/><stop offset=".401" stop-color="#00ff13"/><stop offset=".481" stop-color="#00ff0d"/><stop offset=".561" stop-color="#00ff07"/><stop offset=".641" stop-color="#00ff01"/><stop offset=".721" stop-color="#0f0"/><stop offset=".801" stop-color="#0f0"/><stop offset=".881" stop-color="#0f0"/><stop offset=".941" stop-color="#0f0"/><stop offset="1" stop-color="#14ff00"/></linearGradient>
<linearGradient id="c37" gradientUnits="userSpaceOnUse" x1="1163.5" x2="1464.3"><stop offset="0" stop-color="#00ff2e"/><stop offset=".079" stop-color="#00ff29"/><stop offset=".158" stop-color="#00ff24"/><stop offset=".237" stop-color="#00ff1f"/><stop offset=".316" stop-color="#00ff1a"/><stop offset=".395" stop-color="#00ff15"/><stop offset=".474" stop-color="#00ff0f"/><stop offset=".553" stop-color="#00ff09"/><stop offset=".632" stop-color="#00ff02"/><stop offset=".711" stop-color="#0f0"/><stop offset=".79" stop-color="#0f0"/><stop offset=".869" stop-color="#0f0"/><stop offset=".935" stop-color="#03ff00"/><stop offset="1" stop-color="#1bff00"/></linearGradient>
<linearGradient id="c38" gradientUnits="userSpaceOnUse" x1="1163.4" x2="1468.7"><stop offset="0" stop-color="#00ff2f"/><stop offset=".078" stop-color="#00ff2b"/><stop offset=".156" stop-color="#00ff26"/><stop offset=".234" stop-color="#00ff21"/><stop offset=".312" stop-color="#00ff1c"/><stop offset=".39" stop-color="#00ff16"/><stop offset=".468" stop-color="#00ff10"/><stop offset=".546" stop-color="#00ff0a"/><stop offset=".624" stop-color="#00ff04"/><stop offset=".702" stop-color="#0f0"/><stop offset=".779" stop-color="#0f0"/><stop offset=".857" stop-color="#0f0"/><stop offset=".929" stop-color="#07ff00"/><stop offset="1" stop-color="#2f0"/></linearGradient>
<linearGradient id="c39" gradientUnits="userSpaceOnUse" x1="1163.4" x2="1473.1"><stop offset="0" stop-color="#00ff31"/><stop offset=".077" stop-color="#00ff2c"/><stop offset=".154" stop-color="#00ff28"/><stop offset=".231" stop-color="#00ff23"/><stop offset=".308" stop-color="#00ff1d"/><stop offset=".385" stop-color="#00ff18"/><stop offset=".461" stop-color="#00ff12"/><stop offset=".538" stop-color="#00ff0c"/><stop offset=".615" stop-color="#00ff05"/><stop offset=".692" stop-color="#0f0"/><stop offset=".769" stop-color="#0f0"/><stop offset=".846" stop-color="#0f0"/><stop offset=".923" stop-color="#0cff00"/><stop offset="1" stop-color="#29ff00"/></linearGradient>
<linearGradient id="c40" gradientUnits="userSpaceOnUse" x1="1163.3" x2="1477.4"><stop offset="0" stop-color="#0f3"/><stop offset=".076" stop-color="#00ff2e"/><stop offset=".152" stop-color="#00ff29"/><stop offset=".228" stop-color="#00ff24"/><stop offset=".304" stop-color="#00ff1f"/><stop offset=".38" stop-color="#00ff19"/><stop offset=".455" stop-color="#00ff13"/><stop offset=".531" stop-color="#00ff0d"/><stop offset=".607" stop-color="#00ff07"/><stop offset=".683" stop-color="#0f0"/><stop offset=".759" stop-color="#0f0"/><stop offset=".835" stop-color="#0f0"/><stop offset=".917" stop-color="#10ff00"/><stop offset="1" stop-color="#31ff00"/></linearGradient>
<linearGradient id="c41" gradientUnits="userSpaceOnUse" x1="1163.3" x2="1481.7"><stop offset="0" stop-color="#00ff34"/><stop offset=".075" stop-color="#00ff30"/><stop offset=".15" stop-color="#00ff2b"/><stop offset=".225" stop-color="#00ff26"/><stop offset=".3" stop-color="#00ff20"/><stop offset=".375" stop-color="#00ff1b"/><stop offset=".45" stop-color="#00ff15"/><stop offset=".524" stop-color="#00ff0f"/><stop offset=".599" stop-color="#00ff08"/><stop offset=".674" stop-color="#00ff02"/><stop offset=".749" stop-color="#0f0"/><stop offset=".824" stop-color="#0f0"/><stop offset=".883" stop-color="#09ff00"/><stop offset=".941" stop-color="#20ff00"/><stop offset="1" stop-color="#38ff00"/></linearGradient>
<linearGradient id="c42" gradientUnits="userSpaceOnUse" x1="1163.2" x2="1486.1"><stop offset="0" stop-color="#00ff36"/><stop offset=".074" stop-color="#00ff31"/><stop offset=".148" stop-color="#00ff2c"/><stop offset=".222" stop-color="#00ff27"/><stop offset=".296" stop-color="#0f2"/><stop offset=".37" stop-color="#00ff1d"/><stop offset=".444" stop-color="#00ff17"/><stop offset=".518" stop-color="#0f1"/><stop offset=".592" stop-color="#00ff0a"/><stop offset=".666" stop-color="#00ff03"/><stop offset=".74" stop-color="#0f0"/><stop offset=".814" stop-color="#0f0"/><stop offset=".876" stop-color="#0cff00"/><stop offset=".938" stop-color="#26ff00"/><stop offset="1" stop-color="#40ff00"/></linearGradient>
<linearGradient id="c43" gradientUnits="userSpaceOnUse" x1="1163.2" x2="1490.4"><stop offset="0" stop-color="#00ff38"/><stop offset=".073" stop-color="#0f3"/><stop offset=".146" stop-color="#00ff2e"/><stop offset=".219" stop-color="#00ff29"/><stop offset=".292" stop-color="#00ff24"/><stop offset=".365" stop-color="#00ff1e"/><stop offset=".438" stop-color="#00ff18"/><stop offset=".511" stop-color="#00ff12"/><stop offset=".584" stop-color="#00ff0c"/><stop offset=".658" stop-color="#00ff05"/><stop offset=".731" stop-color="#0f0"/><stop offset=".804" stop-color="#0f0"/><stop offset=".869" stop-color="#10ff00"/><stop offset=".935" stop-color="#2bff00"/><stop offset="1" stop-color="#49ff00"/></linearGradient>
<linearGradient id="c44" gradientUnits="userSpaceOnUse" x1="1163.3" x2="1494.7"><stop offset="0" stop-color="#00ff39"/><stop offset=".072" stop-color="#00ff35"/><stop offset=".144" stop-color="#00ff30"/><stop offset=".216" stop-color="#00ff2b"/><stop offset=".289" stop-color="#00ff25"/><stop offset=".361" stop-color="#00ff20"/><stop offset=".433" stop-color="#00ff1a"/><stop offset=".505" stop-color="#00ff14"/><stop offset=".577" stop-color="#00ff0d"/><stop offset=".649" stop-color="#00ff06"/><stop offset=".722" stop-color="#0f0"/><stop offset=".794" stop-color="#0f0"/><stop offset=".863" stop-color="#13ff00"/><stop offset=".931" stop-color="#31ff00"/><stop offset="1" stop-color="#51ff00"/></linearGradient>
<linearGradient id="c45" gradientUnits="userSpaceOnUse" x1="1163.4" x2="1499"><stop offset="0" stop-color="#00ff3b"/><stop offset=".071" stop-color="#00ff36"/><stop offset=".143" stop-color="#00ff31"/><stop offset=".214" stop-color="#00ff2c"/><stop offset=".285" stop-color="#00ff27"/><stop offset=".356" stop-color="#0f2"/><stop offset=".428" stop-color="#00ff1c"/><stop offset=".499" stop-color="#00ff15"/><stop offset=".57" stop-color="#00ff0f"/><stop offset=".642" stop-color="#00ff08"/><stop offset=".713" stop-color="#00ff01"/><stop offset=".784" stop-color="#0f0"/><stop offset=".856" stop-color="#17ff00"/><stop offset=".928" stop-color="#37ff00"/><stop offset="1" stop-color="#5aff00"/></linearGradient>
<linearGradient id="c46" gradientUnits="userSpaceOnUse" x1="1163.4" x2="1503.3"><stop offset="0" stop-color="#00ff3d"/><stop offset=".07" stop-color="#00ff38"/><stop offset=".141" stop-color="#0f3"/><stop offset=".211" stop-color="#00ff2e"/><stop offset=".282" stop-color="#00ff29"/><stop offset=".352" stop-color="#00ff23"/><stop offset=".423" stop-color="#00ff1d"/><stop offset=".493" stop-color="#00ff17"/><stop offset=".564" stop-color="#0f1"/><stop offset=".634" stop-color="#00ff0a"/><stop offset=".704" stop-color="#00ff02"/><stop offset=".775" stop-color="#0f0"/><stop offset=".85" stop-color="#1bff00"/><stop offset=".925" stop-color="#3dff00"/><stop offset="1" stop-color="#63ff00"/></linearGradient>
<linearGradient id="c47" gradientUnits="userSpaceOnUse" x1="1163.5" x2="1507.5"><stop offset="0" stop-color="#00ff3e"/><stop offset=".07" stop-color="#00ff3a"/><stop offset=".139" stop-color="#00ff35"/><stop offset=".209" stop-color="#00ff30"/><stop offset=".278" stop-color="#00ff2b"/><stop offset=".348" stop-color="#00ff25"/><stop offset=".418" stop-color="#00ff1f"/><stop offset=".487" stop-color="#00ff19"/><stop offset=".557" stop-color="#00ff12"/><stop offset=".627" stop-color="#00ff0b"/><stop offset=".696" stop-color="#00ff04"/><stop offset=".766" stop-color="#0f0"/><stop offset=".824" stop-color="#16ff00"/><stop offset=".883" stop-color="#31ff00"/><stop offset=".941" stop-color="#4eff00"/><stop offset="1" stop-color="#6cff00"/></linearGradient>
<linearGradient id="c48" gradientUnits="userSpaceOnUse" x1="1163.6" x2="1511.8"><stop offset="0" stop-color="#00ff40"/><stop offset=".069" stop-color="#00ff3c"/><stop offset=".138" stop-color="#00ff37"/><stop offset=".206" stop-color="#00ff32"/><stop offset=".275" stop-color="#00ff2c"/><stop offset=".344" stop-color="#00ff27"/><stop offset=".413" stop-color="#00ff21"/><stop offset=".482" stop-color="#00ff1b"/><stop offset=".55" stop-color="#00ff14"/><stop offset=".619" stop-color="#00ff0d"/><stop offset=".688" stop-color="#00ff06"/><stop offset=".757" stop-color="#0f0"/><stop offset=".818" stop-color="#19ff00"/><stop offset=".878" stop-color="#36ff00"/><stop offset=".939" stop-color="#5f0"/><stop offset="1" stop-color="#76ff00"/></linearGradient>
<linearGradient id="c49" gradientUnits="userSpaceOnUse" x1="1163.8" x2="1516.1"><stop offset="0" stop-color="#00ff42"/><stop offset=".068" stop-color="#00ff3d"/><stop offset=".136" stop-color="#00ff39"/><stop offset=".204" stop-color="#0f3"/><stop offset=".272" stop-color="#00ff2e"/><stop offset=".34" stop-color="#00ff29"/><stop offset=".408" stop-color="#00ff23"/><stop offset=".476" stop-color="#00ff1c"/><stop offset=".544" stop-color="#00ff16"/><stop offset=".612" stop-color="#00ff0f"/><stop offset=".68" stop-color="#00ff07"/><stop offset=".748" stop-color="#0f0"/><stop offset=".811" stop-color="#1cff00"/><stop offset=".874" stop-color="#3bff00"/><stop offset=".937" stop-color="#5cff00"/><stop offset="1" stop-color="#80ff00"/></linearGradient>
<linearGradient id="c50" gradientUnits="userSpaceOnUse" x1="1163.9" x2="1520.3"><stop offset="0" stop-color="#0f4"/><stop offset=".067" stop-color="#00ff3f"/><stop offset=".134" stop-color="#00ff3a"/><stop offset=".201" stop-color="#00ff35"/><stop offset=".268" stop-color="#00ff30"/><stop offset=".335" stop-color="#00ff2a"/><stop offset=".402" stop-color="#00ff25"/><stop offset=".469" stop-color="#00ff1e"/><stop offset=".536" stop-color="#00ff18"/><stop offset=".603" stop-color="#0f1"/><stop offset=".67" stop-color="#00ff09"/><stop offset=".737" stop-color="#00ff01"/><stop offset=".748" stop-color="#05ff00"/><stop offset=".811" stop-color="#23ff00"/><stop offset=".874" stop-color="#43ff00"/><stop offset=".937" stop-color="#6f0"/><stop offset="1" stop-color="#8aff00"/></linearGradient>
<linearGradient id="c51" gradientUnits="userSpaceOnUse" x1="1164.1" x2="1524.6"><stop offset="0" stop-color="#00ff46"/><stop offset=".066" stop-color="#00ff41"/><stop offset=".132" stop-color="#00ff3c"/><stop offset=".198" stop-color="#00ff37"/><stop offset=".264" stop-color="#00ff32"/><stop offset=".33" stop-color="#00ff2c"/><stop offset=".396" stop-color="#00ff27"/><stop offset=".462" stop-color="#00ff20"/><stop offset=".527" stop-color="#00ff1a"/><stop offset=".593" stop-color="#00ff13"/><stop offset=".659" stop-color="#00ff0c"/><stop offset=".725" stop-color="#00ff04"/><stop offset=".731" stop-color="#03ff03"/><stop offset=".754" stop-color="#0eff00"/><stop offset=".816" stop-color="#2cff00"/><stop offset=".877" stop-color="#4dff00"/><stop offset=".939" stop-color="#70ff00"/><stop offset="1" stop-color="#95ff00"/></linearGradient>
<linearGradient id="c52" gradientUnits="userSpaceOnUse" x1="1164.2" x2="1528.8"><stop offset="0" stop-color="#00ff47"/><stop offset=".065" stop-color="#00ff43"/><stop offset=".13" stop-color="#00ff3e"/><stop offset=".195" stop-color="#00ff39"/><stop offset=".259" stop-color="#00ff34"/><stop offset=".324" stop-color="#00ff2f"/><stop offset=".389" stop-color="#00ff29"/><stop offset=".454" stop-color="#00ff23"/><stop offset=".519" stop-color="#00ff1c"/><stop offset=".584" stop-color="#00ff15"/><stop offset=".649" stop-color="#00ff0e"/><stop offset=".713" stop-color="#00ff06"/><stop offset=".723" stop-color="#05ff05"/><stop offset=".741" stop-color="#0eff02"/><stop offset=".76" stop-color="#17ff00"/><stop offset=".82" stop-color="#36ff00"/><stop offset=".88" stop-color="#57ff00"/><stop offset=".94" stop-color="#7aff00"/><stop offset="1" stop-color="#a0ff00"/></linearGradient>
<linearGradient id="c53" gradientUnits="userSpaceOnUse" x1="1164.4" x2="1533.1"><stop offset="0" stop-color="#00ff49"/><stop offset=".07" stop-color="#0f4"/><stop offset=".14" stop-color="#00ff3f"/><stop offset=".211" stop-color="#00ff3a"/><stop offset=".281" stop-color="#00ff34"/><stop offset=".351" stop-color="#00ff2e"/><stop offset=".421" stop-color="#00ff27"/><stop offset=".491" stop-color="#00ff20"/><stop offset=".562" stop-color="#00ff19"/><stop offset=".632" stop-color="#0f1"/><stop offset=".702" stop-color="#00ff08"/><stop offset=".715" stop-color="#07ff07"/><stop offset=".74" stop-color="#13ff03"/><stop offset=".765" stop-color="#20ff00"/><stop offset=".824" stop-color="#3fff00"/><stop offset=".883" stop-color="#61ff00"/><stop offset=".941" stop-color="#85ff00"/><stop offset="1" stop-color="#acff00"/></linearGradient>
<linearGradient id="c54" gradientUnits="userSpaceOnUse" x1="1164.7" x2="1537.3"><stop offset="0" stop-color="#00ff4b"/><stop offset=".069" stop-color="#00ff46"/><stop offset=".138" stop-color="#00ff41"/><stop offset=".207" stop-color="#00ff3c"/><stop offset=".276" stop-color="#00ff36"/><stop offset=".345" stop-color="#00ff30"/><stop offset=".414" stop-color="#00ff29"/><stop offset=".483" stop-color="#0f2"/><stop offset=".553" stop-color="#00ff1b"/><stop offset=".622" stop-color="#00ff13"/><stop offset=".691" stop-color="#00ff0b"/><stop offset=".707" stop-color="#08ff08"/><stop offset=".728" stop-color="#13ff06"/><stop offset=".749" stop-color="#1eff03"/><stop offset=".77" stop-color="#29ff00"/><stop offset=".828" stop-color="#49ff00"/><stop offset=".885" stop-color="#6cff00"/><stop offset=".943" stop-color="#90ff00"/><stop offset="1" stop-color="#b8ff00"/></linearGradient>
<linearGradient id="c55" gradientUnits="userSpaceOnUse" x1="1164.9" x2="1541.5"><stop offset="0" stop-color="#00ff4d"/><stop offset=".068" stop-color="#00ff48"/><stop offset=".136" stop-color="#00ff43"/><stop offset=".204" stop-color="#00ff3e"/><stop offset=".272" stop-color="#00ff38"/><stop offset=".34" stop-color="#00ff32"/><stop offset=".408" stop-color="#00ff2c"/><stop offset=".476" stop-color="#00ff25"/><stop offset=".544" stop-color="#00ff1d"/><stop offset=".612" stop-color="#00ff15"/><stop offset=".68" stop-color="#00ff0d"/><stop offset=".7" stop-color="#0aff0a"/><stop offset=".725" stop-color="#18ff07"/><stop offset=".75" stop-color="#25ff04"/><stop offset=".775" stop-color="#3f0"/><stop offset=".832" stop-color="#54ff00"/><stop offset=".888" stop-color="#7f0"/><stop offset=".944" stop-color="#9cff00"/><stop offset="1" stop-color="#c4ff00"/></linearGradient>
<linearGradient id="c56" gradientUnits="userSpaceOnUse" x1="1165.2" x2="1545.8"><stop offset="0" stop-color="#00ff4f"/><stop offset=".067" stop-color="#00ff4a"/><stop offset=".134" stop-color="#00ff45"/><stop offset=".201" stop-color="#00ff40"/><stop offset=".268" stop-color="#00ff3a"/><stop offset=".334" stop-color="#00ff34"/><stop offset=".401" stop-color="#00ff2e"/><stop offset=".468" stop-color="#00ff27"/><stop offset=".535" stop-color="#00ff20"/><stop offset=".602" stop-color="#00ff18"/><stop offset=".669" stop-color="#00ff0f"/><stop offset=".692" stop-color="#0cff0c"/><stop offset=".714" stop-color="#18ff09"/><stop offset=".736" stop-color="#24ff06"/><stop offset=".759" stop-color="#31ff03"/><stop offset=".781" stop-color="#3eff00"/><stop offset=".835" stop-color="#5fff00"/><stop offset=".89" stop-color="#82ff00"/><stop offset=".945" stop-color="#a8ff00"/><stop offset="1" stop-color="#d1ff00"/></linearGradient>
<linearGradient id="c57" gradientUnits="userSpaceOnUse" x1="1165.4" x2="1550"><stop offset="0" stop-color="#00ff51"/><stop offset=".066" stop-color="#00ff4c"/><stop offset=".132" stop-color="#00ff47"/><stop offset=".197" stop-color="#00ff42"/><stop offset=".263" stop-color="#00ff3c"/><stop offset=".329" stop-color="#00ff36"/><stop offset=".395" stop-color="#00ff30"/><stop offset=".461" stop-color="#00ff29"/><stop offset=".527" stop-color="#0f2"/><stop offset=".592" stop-color="#00ff1a"/><stop offset=".658" stop-color="#00ff12"/><stop offset=".685" stop-color="#0eff0e"/><stop offset=".71" stop-color="#1cff0b"/><stop offset=".735" stop-color="#2aff07"/><stop offset=".76" stop-color="#39ff04"/><stop offset=".786" stop-color="#48ff00"/><stop offset=".839" stop-color="#6aff00"/><stop offset=".893" stop-color="#8eff00"/><stop offset=".946" stop-color="#b5ff00"/><stop offset="1" stop-color="#dfff00"/></linearGradient>
<linearGradient id="c58" gradientUnits="userSpaceOnUse" x1="1165.7" x2="1554.2"><stop offset="0" stop-color="#00ff53"/><stop offset=".065" stop-color="#00ff4e"/><stop offset=".13" stop-color="#00ff49"/><stop offset=".194" stop-color="#0f4"/><stop offset=".259" stop-color="#00ff3f"/><stop offset=".324" stop-color="#00ff39"/><stop offset=".389" stop-color="#00ff32"/><stop offset=".454" stop-color="#00ff2c"/><stop offset=".518" stop-color="#00ff24"/><stop offset=".583" stop-color="#00ff1d"/><stop offset=".648" stop-color="#00ff15"/><stop offset=".663" stop-color="#08ff13"/><stop offset=".678" stop-color="#10ff10"/><stop offset=".706" stop-color="#20ff0d"/><stop offset=".734" stop-color="#31ff09"/><stop offset=".762" stop-color="#42ff04"/><stop offset=".79" stop-color="#53ff00"/><stop offset=".843" stop-color="#76ff00"/><stop offset=".895" stop-color="#9bff00"/><stop offset=".948" stop-color="#c2ff00"/><stop offset="1" stop-color="#edff00"/></linearGradient>
<linearGradient id="c59" gradientUnits="userSpaceOnUse" x1="1166" x2="1558.4"><stop offset="0" stop-color="#0f5"/><stop offset=".064" stop-color="#00ff51"/><stop offset=".128" stop-color="#00ff4c"/><stop offset=".191" stop-color="#00ff46"/><stop offset=".255" stop-color="#00ff41"/><stop offset=".319" stop-color="#00ff3b"/><stop offset=".383" stop-color="#00ff35"/><stop offset=".446" stop-color="#00ff2e"/><stop offset=".51" stop-color="#00ff27"/><stop offset=".574" stop-color="#00ff1f"/><stop offset=".638" stop-color="#00ff17"/><stop offset=".654" stop-color="#09ff15"/><stop offset=".671" stop-color="#13ff13"/><stop offset=".696" stop-color="#21ff0f"/><stop offset=".721" stop-color="#30ff0b"/><stop offset=".745" stop-color="#3fff08"/><stop offset=".77" stop-color="#4fff04"/><stop offset=".795" stop-color="#5fff00"/><stop offset=".846" stop-color="#82ff00"/><stop offset=".898" stop-color="#a8ff00"/><stop offset=".949" stop-color="#d0ff00"/><stop offset="1" stop-color="#fcff00"/></linearGradient>
<linearGradient id="c60" gradientUnits="userSpaceOnUse" x1="1166.3" x2="1562.6"><stop offset="0" stop-color="#00ff57"/><stop offset=".063" stop-color="#00ff53"/><stop offset=".126" stop-color="#00ff4e"/><stop offset=".188" stop-color="#00ff49"/><stop offset=".251" stop-color="#00ff43"/><stop offset=".314" stop-color="#00ff3d"/><stop offset=".377" stop-color="#00ff37"/><stop offset=".439" stop-color="#00ff31"/><stop offset=".502" stop-color="#00ff29"/><stop offset=".565" stop-color="#0f2"/><stop offset=".628" stop-color="#00ff1a"/><stop offset=".646" stop-color="#0aff17"/><stop offset=".664" stop-color="#15ff15"/><stop offset=".691" stop-color="#25ff11"/><stop offset=".718" stop-color="#36ff0d"/><stop offset=".745" stop-color="#47ff09"/><stop offset=".773" stop-color="#59ff04"/><stop offset=".8" stop-color="#6bff00"/><stop offset=".862" stop-color="#98ff00"/><stop offset=".924" stop-color="#c9ff00"/><stop offset=".987" stop-color="#ff0"/><stop offset="1" stop-color="#fff400"/></linearGradient>
<linearGradient id="c61" gradientUnits="userSpaceOnUse" x1="1166.6" x2="1566.8"><stop offset="0" stop-color="#00ff59"/><stop offset=".062" stop-color="#0f5"/><stop offset=".124" stop-color="#00ff50"/><stop offset=".185" stop-color="#00ff4b"/><stop offset=".247" stop-color="#00ff45"/><stop offset=".309" stop-color="#00ff40"/><stop offset=".371" stop-color="#00ff3a"/><stop offset=".433" stop-color="#0f3"/><stop offset=".494" stop-color="#00ff2c"/><stop offset=".556" stop-color="#00ff25"/><stop offset=".618" stop-color="#00ff1c"/><stop offset=".638" stop-color="#0bff1a"/><stop offset=".657" stop-color="#17ff17"/><stop offset=".682" stop-color="#26ff13"/><stop offset=".706" stop-color="#35ff10"/><stop offset=".731" stop-color="#45ff0c"/><stop offset=".755" stop-color="#55ff08"/><stop offset=".78" stop-color="#66ff04"/><stop offset=".804" stop-color="#78ff00"/><stop offset=".86" stop-color="#a1ff00"/><stop offset=".915" stop-color="#ceff00"/><stop offset=".97" stop-color="#ff0"/><stop offset="1" stop-color="#ffe600"/></linearGradient>
<linearGradient id="c62" gradientUnits="userSpaceOnUse" x1="1166.9" x2="1571"><stop offset="0" stop-color="#00ff5c"/><stop offset=".061" stop-color="#00ff57"/><stop offset=".122" stop-color="#00ff52"/><stop offset=".182" stop-color="#00ff4d"/><stop offset=".243" stop-color="#00ff48"/><stop offset=".304" stop-color="#00ff42"/><stop offset=".365" stop-color="#00ff3c"/><stop offset=".426" stop-color="#00ff36"/><stop offset=".487" stop-color="#00ff2f"/><stop offset=".547" stop-color="#00ff27"/><stop offset=".608" stop-color="#00ff1f"/><stop offset=".629" stop-color="#0cff1c"/><stop offset=".651" stop-color="#19ff19"/><stop offset=".677" stop-color="#2aff15"/><stop offset=".703" stop-color="#3bff11"/><stop offset=".73" stop-color="#4cff0d"/><stop offset=".756" stop-color="#5fff09"/><stop offset=".783" stop-color="#71ff05"/><stop offset=".809" stop-color="#85ff00"/><stop offset=".857" stop-color="#abff00"/><stop offset=".905" stop-color="#d3ff00"/><stop offset=".954" stop-color="#ff0"/><stop offset="1" stop-color="#ffd900"/></linearGradient>
<linearGradient id="c63" gradientUnits="userSpaceOnUse" x1="1167.3" x2="1575.2"><stop offset="0" stop-color="#00ff5e"/><stop offset=".06" stop-color="#00ff59"/><stop offset=".12" stop-color="#0f5"/><stop offset=".18" stop-color="#00ff50"/><stop offset=".24" stop-color="#00ff4a"/><stop offset=".299" stop-color="#00ff45"/><stop offset=".359" stop-color="#00ff3f"/><stop offset=".419" stop-color="#00ff38"/><stop offset=".479" stop-color="#00ff31"/><stop offset=".539" stop-color="#00ff2a"/><stop offset=".599" stop-color="#0f2"/><stop offset=".622" stop-color="#0eff1f"/><stop offset=".644" stop-color="#1cff1c"/><stop offset=".668" stop-color="#2bff18"/><stop offset=".692" stop-color="#3bff14"/><stop offset=".717" stop-color="#4bff11"/><stop offset=".741" stop-color="#5cff0d"/><stop offset=".765" stop-color="#6eff09"/><stop offset=".789" stop-color="#80ff04"/><stop offset=".813" stop-color="#93ff00"/><stop offset=".876" stop-color="#c6ff00"/><stop offset=".938" stop-color="#ff0"/><stop offset="1" stop-color="#ffcd00"/></linearGradient>
<linearGradient id="c64" gradientUnits="userSpaceOnUse" x1="1167.7" x2="1579.4"><stop offset="0" stop-color="#00ff60"/><stop offset=".059" stop-color="#00ff5c"/><stop offset=".118" stop-color="#00ff57"/><stop offset=".177" stop-color="#00ff52"/><stop offset=".236" stop-color="#00ff4d"/><stop offset=".295" stop-color="#00ff47"/><stop offset=".354" stop-color="#00ff41"/><stop offset=".413" stop-color="#00ff3b"/><stop offset=".472" stop-color="#00ff34"/><stop offset=".531" stop-color="#00ff2d"/><stop offset=".59" stop-color="#00ff25"/><stop offset=".614" stop-color="#0fff22"/><stop offset=".638" stop-color="#1eff1e"/><stop offset=".663" stop-color="#2fff1a"/><stop offset=".689" stop-color="#40ff16"/><stop offset=".715" stop-color="#52ff12"/><stop offset=".741" stop-color="#65ff0e"/><stop offset=".766" stop-color="#78ff09"/><stop offset=".792" stop-color="#8cff05"/><stop offset=".818" stop-color="#a1ff00"/><stop offset=".87" stop-color="#ceff00"/><stop offset=".922" stop-color="#ff0"/><stop offset=".961" stop-color="#fd0"/><stop offset="1" stop-color="#ffc100"/></linearGradient>
<linearGradient id="c65" gradientUnits="userSpaceOnUse" x1="1168" x2="1583.6"><stop offset="0" stop-color="#00ff62"/><stop offset=".058" stop-color="#00ff5e"/><stop offset=".116" stop-color="#00ff59"/><stop offset=".174" stop-color="#00ff54"/><stop offset=".232" stop-color="#00ff4f"/><stop offset=".29" stop-color="#00ff4a"/><stop offset=".348" stop-color="#0f4"/><stop offset=".406" stop-color="#00ff3e"/><stop offset=".464" stop-color="#00ff37"/><stop offset=".522" stop-color="#00ff30"/><stop offset=".58" stop-color="#00ff28"/><stop offset=".606" stop-color="#10ff24"/><stop offset=".631" stop-color="#20ff20"/><stop offset=".655" stop-color="#30ff1d"/><stop offset=".679" stop-color="#41ff19"/><stop offset=".703" stop-color="#52ff15"/><stop offset=".727" stop-color="#63ff11"/><stop offset=".75" stop-color="#76ff0d"/><stop offset=".774" stop-color="#89ff09"/><stop offset=".798" stop-color="#9cff05"/><stop offset=".822" stop-color="#b0ff00"/><stop offset=".864" stop-color="#d6ff00"/><stop offset=".907" stop-color="#ff0"/><stop offset=".953" stop-color="#ffd600"/><stop offset="1" stop-color="#ffb700"/></linearGradient>
<linearGradient id="c66" gradientUnits="userSpaceOnUse" x1="1168.4" x2="1587.8"><stop offset="0" stop-color="#00ff65"/><stop offset=".057" stop-color="#00ff60"/><stop offset=".114" stop-color="#00ff5c"/><stop offset=".171" stop-color="#00ff57"/><stop offset=".229" stop-color="#00ff52"/><stop offset=".286" stop-color="#00ff4c"/><stop offset=".343" stop-color="#00ff46"/><stop offset=".4" stop-color="#00ff40"/><stop offset=".457" stop-color="#00ff3a"/><stop offset=".514" stop-color="#00ff32"/><stop offset=".572" stop-color="#00ff2b"/><stop offset=".589" stop-color="#0bff28"/><stop offset=".607" stop-color="#17ff26"/><stop offset=".625" stop-color="#23ff23"/><stop offset=".65" stop-color="#34ff1f"/><stop offset=".675" stop-color="#46ff1b"/><stop offset=".701" stop-color="#59ff17"/><stop offset=".726" stop-color="#6cff13"/><stop offset=".751" stop-color="#80ff0e"/><stop offset=".776" stop-color="#94ff0a"/><stop offset=".801" stop-color="#aaff05"/><stop offset=".826" stop-color="#c0ff00"/><stop offset=".859" stop-color="#dfff00"/><stop offset=".891" stop-color="#ff0"/><stop offset=".946" stop-color="#ffd000"/><stop offset="1" stop-color="#ffad00"/></linearGradient>
<linearGradient id="c67" gradientUnits="userSpaceOnUse" x1="1168.8" x2="1592"><stop offset="0" stop-color="#00ff67"/><stop offset=".056" stop-color="#00ff63"/><stop offset=".113" stop-color="#00ff5e"/><stop offset=".169" stop-color="#00ff59"/><stop offset=".225" stop-color="#00ff54"/><stop offset=".281" stop-color="#00ff4f"/><stop offset=".338" stop-color="#00ff49"/><stop offset=".394" stop-color="#00ff43"/><stop offset=".45" stop-color="#00ff3c"/><stop offset=".506" stop-color="#00ff35"/><stop offset=".563" stop-color="#00ff2e"/><stop offset=".582" stop-color="#0cff2b"/><stop offset=".6" stop-color="#19ff28"/><stop offset=".619" stop-color="#26ff26"/><stop offset=".643" stop-color="#36ff22"/><stop offset=".666" stop-color="#47ff1e"/><stop offset=".689" stop-color="#59ff1a"/><stop offset=".713" stop-color="#6bff16"/><stop offset=".736" stop-color="#7eff12"/><stop offset=".76" stop-color="#92ff0e"/><stop offset=".783" stop-color="#a6ff09"/><stop offset=".807" stop-color="#bbff05"/><stop offset=".83" stop-color="#d1ff00"/><stop offset=".876" stop-color="#ff0"/><stop offset=".918" stop-color="#ffd900"/><stop offset=".959" stop-color="#ffbc00"/><stop offset="1" stop-color="#ffa300"/></linearGradient>
<linearGradient id="c68" gradientUnits="userSpaceOnUse" x1="1169.2" x2="1596.2"><stop offset="0" stop-color="#00ff69"/><stop offset=".055" stop-color="#00ff65"/><stop offset=".111" stop-color="#00ff61"/><stop offset=".166" stop-color="#00ff5c"/><stop offset=".222" stop-color="#00ff57"/><stop offset=".277" stop-color="#00ff52"/><stop offset=".332" stop-color="#00ff4c"/><stop offset=".388" stop-color="#00ff46"/><stop offset=".443" stop-color="#00ff3f"/><stop offset=".499" stop-color="#00ff38"/><stop offset=".554" stop-color="#00ff31"/><stop offset=".574" stop-color="#0dff2e"/><stop offset=".594" stop-color="#1aff2b"/><stop offset=".613" stop-color="#28ff28"/><stop offset=".638" stop-color="#3aff24"/><stop offset=".662" stop-color="#4cff20"/><stop offset=".687" stop-color="#5fff1c"/><stop offset=".711" stop-color="#73ff18"/><stop offset=".736" stop-color="#88ff14"/><stop offset=".76" stop-color="#9dff0f"/><stop offset=".785" stop-color="#b3ff0a"/><stop offset=".81" stop-color="#caff05"/><stop offset=".834" stop-color="#e3ff00"/><stop offset=".862" stop-color="#ff0"/><stop offset=".908" stop-color="#ffd500"/><stop offset=".954" stop-color="#ffb400"/><stop offset="1" stop-color="#ff9b00"/></linearGradient>
<linearGradient id="c69" gradientUnits="userSpaceOnUse" x1="1169.6" x2="1600.4"><stop offset="0" stop-color="#00ff6c"/><stop offset=".055" stop-color="#00ff68"/><stop offset=".109" stop-color="#00ff63"/><stop offset=".164" stop-color="#00ff5f"/><stop offset=".218" stop-color="#00ff5a"/><stop offset=".273" stop-color="#00ff54"/><stop offset=".327" stop-color="#00ff4f"/><stop offset=".382" stop-color="#00ff49"/><stop offset=".436" stop-color="#00ff42"/><stop offset=".491" stop-color="#00ff3c"/><stop offset=".546" stop-color="#00ff34"/><stop offset=".566" stop-color="#0eff31"/><stop offset=".587" stop-color="#1cff2e"/><stop offset=".607" stop-color="#2bff2b"/><stop offset=".63" stop-color="#3cff27"/><stop offset=".653" stop-color="#4eff24"/><stop offset=".677" stop-color="#60ff20"/><stop offset=".7" stop-color="#73ff1c"/><stop offset=".723" stop-color="#87ff17"/><stop offset=".746" stop-color="#9bff13"/><stop offset=".769" stop-color="#b0ff0f"/><stop offset=".792" stop-color="#c6ff0a"/><stop offset=".815" stop-color="#ddff05"/><stop offset=".838" stop-color="#f5ff00"/><stop offset=".847" stop-color="#ff0"/><stop offset=".898" stop-color="#ffd000"/><stop offset=".949" stop-color="#ffad00"/><stop offset="1" stop-color="#ff9200"/></linearGradient>
<linearGradient id="c70" gradientUnits="userSpaceOnUse" x1="1170.1" x2="1604.6"><stop offset="0" stop-color="#00ff6e"/><stop offset=".06" stop-color="#00ff6a"/><stop offset=".119" stop-color="#00ff65"/><stop offset=".179" stop-color="#00ff60"/><stop offset=".239" stop-color="#00ff5a"/><stop offset=".298" stop-color="#00ff54"/><stop offset=".358" stop-color="#00ff4e"/><stop offset=".418" stop-color="#00ff47"/><stop offset=".477" stop-color="#00ff3f"/><stop offset=".537" stop-color="#00ff37"/><stop offset=".559" stop-color="#0fff34"/><stop offset=".58" stop-color="#1eff31"/><stop offset=".602" stop-color="#2eff2e"/><stop offset=".625" stop-color="#3fff2a"/><stop offset=".648" stop-color="#52ff26"/><stop offset=".671" stop-color="#64ff22"/><stop offset=".694" stop-color="#78ff1e"/><stop offset=".717" stop-color="#8cff1a"/><stop offset=".741" stop-color="#a2ff16"/><stop offset=".764" stop-color="#b7ff11"/><stop offset=".787" stop-color="#ceff0c"/><stop offset=".81" stop-color="#e6ff07"/><stop offset=".833" stop-color="#ffff02"/><stop offset=".842" stop-color="#fff600"/><stop offset=".895" stop-color="#ffc700"/><stop offset=".947" stop-color="#ffa500"/><stop offset="1" stop-color="#ff8a00"/></linearGradient>
<linearGradient id="c71" gradientUnits="userSpaceOnUse" x1="1170.5" x2="1608.8"><stop offset="0" stop-color="#00ff71"/><stop offset=".059" stop-color="#00ff6c"/><stop offset=".118" stop-color="#00ff68"/><stop offset=".176" stop-color="#00ff62"/><stop offset=".235" stop-color="#00ff5d"/><stop offset=".294" stop-color="#00ff57"/><stop offset=".353" stop-color="#00ff51"/><stop offset=".411" stop-color="#00ff4a"/><stop offset=".47" stop-color="#00ff43"/><stop offset=".529" stop-color="#00ff3b"/><stop offset=".551" stop-color="#10ff37"/><stop offset=".574" stop-color="#20ff34"/><stop offset=".596" stop-color="#31ff31"/><stop offset=".621" stop-color="#44ff2d"/><stop offset=".645" stop-color="#58ff29"/><stop offset=".67" stop-color="#6dff24"/><stop offset=".695" stop-color="#83ff20"/><stop offset=".72" stop-color="#9aff1b"/><stop offset=".745" stop-color="#b1ff16"/><stop offset=".77" stop-color="#caff11"/><stop offset=".795" stop-color="#e4ff0c"/><stop offset=".819" stop-color="#ffff06"/><stop offset=".833" stop-color="#fff103"/><stop offset=".846" stop-color="#ffe400"/><stop offset=".897" stop-color="#fb0"/><stop offset=".949" stop-color="#ff9b00"/><stop offset="1" stop-color="#ff8300"/></linearGradient>
<linearGradient id="c72" gradientUnits="userSpaceOnUse" x1="1171" x2="1613"><stop offset="0" stop-color="#00ff73"/><stop offset=".058" stop-color="#00ff6f"/><stop offset=".116" stop-color="#00ff6a"/><stop offset=".174" stop-color="#00ff65"/><stop offset=".231" stop-color="#00ff60"/><stop offset=".289" stop-color="#00ff5a"/><stop offset=".347" stop-color="#00ff54"/><stop offset=".405" stop-color="#00ff4d"/><stop offset=".463" stop-color="#00ff46"/><stop offset=".521" stop-color="#00ff3e"/><stop offset=".544" stop-color="#11ff3b"/><stop offset=".567" stop-color="#22ff37"/><stop offset=".59" stop-color="#34ff34"/><stop offset=".614" stop-color="#47ff30"/><stop offset=".638" stop-color="#5bff2c"/><stop offset=".662" stop-color="#6fff28"/><stop offset=".686" stop-color="#85ff23"/><stop offset=".71" stop-color="#9bff1f"/><stop offset=".734" stop-color="#b3ff1a"/><stop offset=".758" stop-color="#cbff15"/><stop offset=".782" stop-color="#e4ff10"/><stop offset=".806" stop-color="#ffff0a"/><stop offset=".828" stop-color="#ffe805"/><stop offset=".849" stop-color="#ffd400"/><stop offset=".9" stop-color="#ffaf00"/><stop offset=".95" stop-color="#ff9200"/><stop offset="1" stop-color="#ff7c00"/></linearGradient>
<linearGradient id="c73" gradientUnits="userSpaceOnUse" x1="1171.4" x2="1617.2"><stop offset="0" stop-color="#00ff76"/><stop offset=".057" stop-color="#00ff72"/><stop offset=".114" stop-color="#00ff6d"/><stop offset=".171" stop-color="#00ff68"/><stop offset=".228" stop-color="#00ff63"/><stop offset=".285" stop-color="#00ff5d"/><stop offset=".342" stop-color="#00ff57"/><stop offset=".399" stop-color="#00ff50"/><stop offset=".456" stop-color="#00ff49"/><stop offset=".513" stop-color="#00ff41"/><stop offset=".537" stop-color="#12ff3e"/><stop offset=".561" stop-color="#24ff3a"/><stop offset=".585" stop-color="#37ff37"/><stop offset=".608" stop-color="#4aff33"/><stop offset=".631" stop-color="#5dff2f"/><stop offset=".654" stop-color="#72ff2b"/><stop offset=".677" stop-color="#87ff27"/><stop offset=".7" stop-color="#9dff22"/><stop offset=".723" stop-color="#b4ff1e"/><stop offset=".746" stop-color="#ccff19"/><stop offset=".769" stop-color="#e5ff14"/><stop offset=".792" stop-color="#ffff0f"/><stop offset=".813" stop-color="#ffe909"/><stop offset=".833" stop-color="#ffd604"/><stop offset=".853" stop-color="#ffc500"/><stop offset=".902" stop-color="#ffa400"/><stop offset=".951" stop-color="#ff8a00"/><stop offset="1" stop-color="#ff7500"/></linearGradient>
<linearGradient id="c74" gradientUnits="userSpaceOnUse" x1="1171.9" x2="1621.4"><stop offset="0" stop-color="#00ff79"/><stop offset=".056" stop-color="#00ff74"/><stop offset=".112" stop-color="#00ff70"/><stop offset=".168" stop-color="#00ff6b"/><stop offset=".224" stop-color="#0f6"/><stop offset=".281" stop-color="#00ff60"/><stop offset=".337" stop-color="#00ff5a"/><stop offset=".393" stop-color="#00ff54"/><stop offset=".449" stop-color="#00ff4d"/><stop offset=".505" stop-color="#00ff45"/><stop offset=".523" stop-color="#0eff42"/><stop offset=".542" stop-color="#1cff40"/><stop offset=".561" stop-color="#2bff3d"/><stop offset=".579" stop-color="#3aff3a"/><stop offset=".601" stop-color="#4cff36"/><stop offset=".624" stop-color="#60ff32"/><stop offset=".646" stop-color="#74ff2e"/><stop offset=".668" stop-color="#89ff2a"/><stop offset=".69" stop-color="#9fff26"/><stop offset=".712" stop-color="#b5ff22"/><stop offset=".735" stop-color="#cdff1d"/><stop offset=".757" stop-color="#e5ff18"/><stop offset=".779" stop-color="#ffff13"/><stop offset=".798" stop-color="#ffea0e"/><stop offset=".818" stop-color="#ffd708"/><stop offset=".837" stop-color="#ffc604"/><stop offset=".857" stop-color="#ffb700"/><stop offset=".904" stop-color="#f90"/><stop offset=".952" stop-color="#ff8200"/><stop offset="1" stop-color="#ff6e00"/></linearGradient>
<linearGradient id="c75" gradientUnits="userSpaceOnUse" x1="1172.4" x2="1625.5"><stop offset="0" stop-color="#00ff7b"/><stop offset=".055" stop-color="#0f7"/><stop offset=".11" stop-color="#00ff73"/><stop offset=".166" stop-color="#00ff6e"/><stop offset=".221" stop-color="#00ff69"/><stop offset=".276" stop-color="#00ff63"/><stop offset=".331" stop-color="#00ff5d"/><stop offset=".387" stop-color="#00ff57"/><stop offset=".442" stop-color="#00ff50"/><stop offset=".497" stop-color="#00ff49"/><stop offset=".516" stop-color="#0fff46"/><stop offset=".535" stop-color="#1eff43"/><stop offset=".555" stop-color="#2dff40"/><stop offset=".574" stop-color="#3dff3d"/><stop offset=".598" stop-color="#52ff39"/><stop offset=".622" stop-color="#67ff35"/><stop offset=".646" stop-color="#7eff31"/><stop offset=".67" stop-color="#95ff2c"/><stop offset=".694" stop-color="#aeff27"/><stop offset=".718" stop-color="#c8ff22"/><stop offset=".742" stop-color="#e3ff1d"/><stop offset=".766" stop-color="#ffff18"/><stop offset=".79" stop-color="#ffe511"/><stop offset=".813" stop-color="#ffcf0a"/><stop offset=".837" stop-color="#ffbc05"/><stop offset=".86" stop-color="#ffab00"/><stop offset=".907" stop-color="#ff9000"/><stop offset=".953" stop-color="#ff7a00"/><stop offset="1" stop-color="#ff6800"/></linearGradient>
<linearGradient id="c76" gradientUnits="userSpaceOnUse" x1="1172.9" x2="1629.7"><stop offset="0" stop-color="#00ff7e"/><stop offset=".054" stop-color="#00ff7a"/><stop offset=".109" stop-color="#00ff76"/><stop offset=".163" stop-color="#00ff71"/><stop offset=".218" stop-color="#00ff6c"/><stop offset=".272" stop-color="#00ff67"/><stop offset=".326" stop-color="#00ff61"/><stop offset=".381" stop-color="#00ff5b"/><stop offset=".435" stop-color="#00ff54"/><stop offset=".489" stop-color="#00ff4c"/><stop offset=".509" stop-color="#0fff49"/><stop offset=".529" stop-color="#1fff46"/><stop offset=".549" stop-color="#2fff43"/><stop offset=".569" stop-color="#40ff40"/><stop offset=".592" stop-color="#55ff3c"/><stop offset=".615" stop-color="#6aff38"/><stop offset=".638" stop-color="#80ff34"/><stop offset=".661" stop-color="#97ff30"/><stop offset=".684" stop-color="#b0ff2b"/><stop offset=".707" stop-color="#c9ff27"/><stop offset=".73" stop-color="#e3ff22"/><stop offset=".753" stop-color="#ffff1d"/><stop offset=".775" stop-color="#ffe615"/><stop offset=".797" stop-color="#ffd00f"/><stop offset=".819" stop-color="#ffbe09"/><stop offset=".842" stop-color="#ffae04"/><stop offset=".864" stop-color="#ff9f00"/><stop offset=".909" stop-color="#ff8700"/><stop offset=".955" stop-color="#ff7300"/><stop offset="1" stop-color="#ff6200"/></linearGradient>
<linearGradient id="c77" gradientUnits="userSpaceOnUse" x1="1173.4" x2="1633.9"><stop offset="0" stop-color="#00ff81"/><stop offset=".054" stop-color="#00ff7d"/><stop offset=".107" stop-color="#00ff79"/><stop offset=".161" stop-color="#00ff74"/><stop offset=".214" stop-color="#00ff6f"/><stop offset=".268" stop-color="#00ff6a"/><stop offset=".321" stop-color="#00ff64"/><stop offset=".375" stop-color="#00ff5e"/><stop offset=".428" stop-color="#00ff57"/><stop offset=".482" stop-color="#00ff50"/><stop offset=".502" stop-color="#10ff4d"/><stop offset=".523" stop-color="#21ff4a"/><stop offset=".543" stop-color="#32ff47"/><stop offset=".563" stop-color="#4f4"/><stop offset=".585" stop-color="#58ff40"/><stop offset=".608" stop-color="#6dff3c"/><stop offset=".63" stop-color="#83ff38"/><stop offset=".652" stop-color="#99ff34"/><stop offset=".674" stop-color="#b1ff30"/><stop offset=".696" stop-color="#caff2b"/><stop offset=".718" stop-color="#e4ff26"/><stop offset=".741" stop-color="#ffff21"/><stop offset=".762" stop-color="#ffe71a"/><stop offset=".783" stop-color="#ffd213"/><stop offset=".804" stop-color="#ffbf0d"/><stop offset=".825" stop-color="#ffaf08"/><stop offset=".846" stop-color="#ffa104"/><stop offset=".867" stop-color="#ff9500"/><stop offset=".911" stop-color="#ff7e00"/><stop offset=".956" stop-color="#ff6c00"/><stop offset="1" stop-color="#ff5d00"/></linearGradient>
<linearGradient id="c78" gradientUnits="userSpaceOnUse" x1="1173.9" x2="1638.1"><stop offset="0" stop-color="#00ff84"/><stop offset=".053" stop-color="#00ff80"/><stop offset=".105" stop-color="#00ff7c"/><stop offset=".158" stop-color="#0f7"/><stop offset=".211" stop-color="#00ff73"/><stop offset=".264" stop-color="#00ff6d"/><stop offset=".316" stop-color="#00ff68"/><stop offset=".369" stop-color="#00ff62"/><stop offset=".422" stop-color="#00ff5b"/><stop offset=".474" stop-color="#00ff54"/><stop offset=".495" stop-color="#11ff51"/><stop offset=".516" stop-color="#22ff4e"/><stop offset=".537" stop-color="#34ff4b"/><stop offset=".558" stop-color="#47ff47"/><stop offset=".579" stop-color="#5bff44"/><stop offset=".601" stop-color="#70ff40"/><stop offset=".622" stop-color="#85ff3c"/><stop offset=".643" stop-color="#9bff38"/><stop offset=".664" stop-color="#b3ff34"/><stop offset=".686" stop-color="#cbff30"/><stop offset=".707" stop-color="#e4ff2b"/><stop offset=".728" stop-color="#ffff26"/><stop offset=".748" stop-color="#ffe71e"/><stop offset=".769" stop-color="#ffd218"/><stop offset=".789" stop-color="#ffc012"/><stop offset=".809" stop-color="#ffb00c"/><stop offset=".83" stop-color="#ffa208"/><stop offset=".85" stop-color="#ff9604"/><stop offset=".87" stop-color="#ff8b00"/><stop offset=".914" stop-color="#ff7600"/><stop offset=".957" stop-color="#ff6500"/><stop offset="1" stop-color="#ff5700"/></linearGradient>
<linearGradient id="c79" gradientUnits="userSpaceOnUse" x1="1174.4" x2="1642.3"><stop offset="0" stop-color="#00ff87"/><stop offset=".052" stop-color="#00ff83"/><stop offset=".104" stop-color="#00ff7f"/><stop offset=".156" stop-color="#00ff7b"/><stop offset=".208" stop-color="#00ff76"/><stop offset=".26" stop-color="#00ff71"/><stop offset=".311" stop-color="#00ff6b"/><stop offset=".363" stop-color="#00ff65"/><stop offset=".415" stop-color="#00ff5f"/><stop offset=".467" stop-color="#00ff58"/><stop offset=".489" stop-color="#12ff55"/><stop offset=".51" stop-color="#24ff52"/><stop offset=".532" stop-color="#37ff4e"/><stop offset=".553" stop-color="#4bff4b"/><stop offset=".576" stop-color="#61ff47"/><stop offset=".6" stop-color="#79ff43"/><stop offset=".623" stop-color="#91ff3f"/><stop offset=".646" stop-color="#abff3a"/><stop offset=".669" stop-color="#c5ff35"/><stop offset=".693" stop-color="#e1ff31"/><stop offset=".716" stop-color="#ffff2b"/><stop offset=".738" stop-color="#ffe422"/><stop offset=".761" stop-color="#ffcd1a"/><stop offset=".784" stop-color="#ffba13"/><stop offset=".806" stop-color="#ffa90e"/><stop offset=".829" stop-color="#ff9a09"/><stop offset=".851" stop-color="#ff8d04"/><stop offset=".874" stop-color="#ff8100"/><stop offset=".916" stop-color="#ff6f00"/><stop offset=".958" stop-color="#ff5f00"/><stop offset="1" stop-color="#ff5200"/></linearGradient>
<linearGradient id="c80" gradientUnits="userSpaceOnUse" x1="1175" x2="1646.5"><stop offset="0" stop-color="#00ff8a"/><stop offset=".051" stop-color="#00ff86"/><stop offset=".102" stop-color="#00ff82"/><stop offset=".153" stop-color="#00ff7e"/><stop offset=".204" stop-color="#00ff79"/><stop offset=".255" stop-color="#00ff74"/><stop offset=".307" stop-color="#00ff6f"/><stop offset=".358" stop-color="#00ff69"/><stop offset=".409" stop-color="#00ff63"/><stop offset=".46" stop-color="#00ff5c"/><stop offset=".482" stop-color="#12ff59"/><stop offset=".504" stop-color="#26ff56"/><stop offset=".526" stop-color="#3aff52"/><stop offset=".548" stop-color="#4fff4f"/><stop offset=".57" stop-color="#65ff4b"/><stop offset=".593" stop-color="#7bff47"/><stop offset=".615" stop-color="#93ff43"/><stop offset=".637" stop-color="#acff3f"/><stop offset=".659" stop-color="#c7ff3a"/><stop offset=".682" stop-color="#e2ff35"/><stop offset=".704" stop-color="#ffff30"/><stop offset=".725" stop-color="#ffe527"/><stop offset=".747" stop-color="#ffce1f"/><stop offset=".769" stop-color="#ffbb18"/><stop offset=".79" stop-color="#ffaa12"/><stop offset=".812" stop-color="#ff9b0d"/><stop offset=".834" stop-color="#ff8e08"/><stop offset=".855" stop-color="#ff8304"/><stop offset=".877" stop-color="#ff7900"/><stop offset=".918" stop-color="#ff6800"/><stop offset=".959" stop-color="#ff5900"/><stop offset="1" stop-color="#ff4d00"/></linearGradient>
<linearGradient id="c81" gradientUnits="userSpaceOnUse" x1="1175.6" x2="1650.7"><stop offset="0" stop-color="#00ff8d"/><stop offset=".05" stop-color="#00ff89"/><stop offset=".101" stop-color="#00ff85"/><stop offset=".151" stop-color="#00ff81"/><stop offset=".201" stop-color="#00ff7d"/><stop offset=".252" stop-color="#00ff78"/><stop offset=".302" stop-color="#00ff73"/><stop offset=".352" stop-color="#00ff6d"/><stop offset=".402" stop-color="#00ff67"/><stop offset=".453" stop-color="#00ff60"/><stop offset=".475" stop-color="#13ff5d"/><stop offset=".498" stop-color="#27ff5a"/><stop offset=".52" stop-color="#3cff56"/><stop offset=".543" stop-color="#52ff52"/><stop offset=".564" stop-color="#68ff4f"/><stop offset=".586" stop-color="#7eff4b"/><stop offset=".607" stop-color="#96ff47"/><stop offset=".628" stop-color="#aeff43"/><stop offset=".649" stop-color="#c8ff3f"/><stop offset=".671" stop-color="#e3ff3a"/><stop offset=".692" stop-color="#ffff36"/><stop offset=".713" stop-color="#ffe52c"/><stop offset=".734" stop-color="#ffcf24"/><stop offset=".755" stop-color="#ffbc1c"/><stop offset=".776" stop-color="#ffab16"/><stop offset=".796" stop-color="#ff9c11"/><stop offset=".817" stop-color="#ff900c"/><stop offset=".838" stop-color="#ff8407"/><stop offset=".859" stop-color="#ff7a04"/><stop offset=".88" stop-color="#ff7000"/><stop offset=".92" stop-color="#ff6100"/><stop offset=".96" stop-color="#ff5400"/><stop offset="1" stop-color="#ff4900"/></linearGradient>
<linearGradient id="c82" gradientUnits="userSpaceOnUse" x1="1176.2" x2="1654.9"><stop offset="0" stop-color="#00ff90"/><stop offset=".05" stop-color="#00ff8d"/><stop offset=".099" stop-color="#00ff89"/><stop offset=".149" stop-color="#00ff85"/><stop offset=".198" stop-color="#00ff80"/><stop offset=".248" stop-color="#00ff7c"/><stop offset=".297" stop-color="#00ff76"/><stop offset=".347" stop-color="#00ff71"/><stop offset=".396" stop-color="#00ff6b"/><stop offset=".446" stop-color="#00ff64"/><stop offset=".464" stop-color="#10ff62"/><stop offset=".483" stop-color="#21ff5f"/><stop offset=".501" stop-color="#32ff5c"/><stop offset=".52" stop-color="#44ff59"/><stop offset=".538" stop-color="#56ff56"/><stop offset=".558" stop-color="#6cff53"/><stop offset=".579" stop-color="#82ff4f"/><stop offset=".599" stop-color="#98ff4c"/><stop offset=".619" stop-color="#b0ff48"/><stop offset=".64" stop-color="#c9ff44"/><stop offset=".66" stop-color="#e4ff40"/><stop offset=".68" stop-color="#ffff3b"/><stop offset=".703" stop-color="#ffe330"/><stop offset=".725" stop-color="#ffcb27"/><stop offset=".748" stop-color="#ffb61f"/><stop offset=".77" stop-color="#ffa518"/><stop offset=".793" stop-color="#ff9612"/><stop offset=".816" stop-color="#ff880d"/><stop offset=".838" stop-color="#ff7d08"/><stop offset=".861" stop-color="#ff7204"/><stop offset=".883" stop-color="#ff6900"/><stop offset=".922" stop-color="#ff5a00"/><stop offset=".961" stop-color="#ff4e00"/><stop offset="1" stop-color="#f40"/></linearGradient>
<linearGradient id="c83" gradientUnits="userSpaceOnUse" x1="1176.7" x2="1659.1"><stop offset="0" stop-color="#00ff93"/><stop offset=".049" stop-color="#00ff90"/><stop offset=".097" stop-color="#00ff8c"/><stop offset=".146" stop-color="#0f8"/><stop offset=".195" stop-color="#00ff84"/><stop offset=".244" stop-color="#00ff7f"/><stop offset=".292" stop-color="#00ff7a"/><stop offset=".341" stop-color="#00ff75"/><stop offset=".39" stop-color="#00ff6f"/><stop offset=".439" stop-color="#00ff69"/><stop offset=".458" stop-color="#1f6"/><stop offset=".477" stop-color="#22ff63"/><stop offset=".495" stop-color="#34ff60"/><stop offset=".514" stop-color="#47ff5e"/><stop offset=".533" stop-color="#5aff5a"/><stop offset=".556" stop-color="#73ff57"/><stop offset=".578" stop-color="#8cff53"/><stop offset=".601" stop-color="#a7ff4f"/><stop offset=".624" stop-color="#c3ff4a"/><stop offset=".646" stop-color="#e0ff46"/><stop offset=".669" stop-color="#ffff41"/><stop offset=".69" stop-color="#ffe335"/><stop offset=".712" stop-color="#ffcb2c"/><stop offset=".734" stop-color="#ffb723"/><stop offset=".756" stop-color="#ffa61c"/><stop offset=".777" stop-color="#ff9716"/><stop offset=".799" stop-color="#ff8a10"/><stop offset=".821" stop-color="#ff7e0c"/><stop offset=".843" stop-color="#ff7307"/><stop offset=".865" stop-color="#ff6a03"/><stop offset=".886" stop-color="#ff6100"/><stop offset=".924" stop-color="#ff5400"/><stop offset=".962" stop-color="#ff4900"/><stop offset="1" stop-color="#ff4000"/></linearGradient>
<linearGradient id="c84" gradientUnits="userSpaceOnUse" x1="1177.3" x2="1663.3"><stop offset="0" stop-color="#00ff97"/><stop offset=".048" stop-color="#00ff93"/><stop offset=".096" stop-color="#00ff90"/><stop offset=".144" stop-color="#00ff8c"/><stop offset=".192" stop-color="#0f8"/><stop offset=".24" stop-color="#00ff83"/><stop offset=".288" stop-color="#00ff7e"/><stop offset=".336" stop-color="#00ff79"/><stop offset=".384" stop-color="#00ff73"/><stop offset=".432" stop-color="#00ff6d"/><stop offset=".451" stop-color="#12ff6a"/><stop offset=".471" stop-color="#24ff68"/><stop offset=".49" stop-color="#37ff65"/><stop offset=".509" stop-color="#4aff62"/><stop offset=".529" stop-color="#5fff5f"/><stop offset=".55" stop-color="#76ff5b"/><stop offset=".571" stop-color="#8fff57"/><stop offset=".593" stop-color="#a9ff53"/><stop offset=".614" stop-color="#c4ff4f"/><stop offset=".636" stop-color="#e1ff4b"/><stop offset=".657" stop-color="#ffff46"/><stop offset=".678" stop-color="#ffe33a"/><stop offset=".699" stop-color="#ffcc30"/><stop offset=".721" stop-color="#ffb828"/><stop offset=".742" stop-color="#ffa721"/><stop offset=".763" stop-color="#ff981a"/><stop offset=".784" stop-color="#ff8a14"/><stop offset=".805" stop-color="#ff7f0f"/><stop offset=".826" stop-color="#ff740b"/><stop offset=".847" stop-color="#ff6b07"/><stop offset=".868" stop-color="#ff6203"/><stop offset=".889" stop-color="#ff5b00"/><stop offset=".926" stop-color="#ff4f00"/><stop offset=".963" stop-color="#f40"/><stop offset="1" stop-color="#ff3c00"/></linearGradient>
<linearGradient id="c85" gradientUnits="userSpaceOnUse" x1="1177.9" x2="1667.5"><stop offset="0" stop-color="#00ff9a"/><stop offset=".047" stop-color="#00ff97"/><stop offset=".094" stop-color="#00ff93"/><stop offset=".142" stop-color="#00ff90"/><stop offset=".189" stop-color="#00ff8b"/><stop offset=".236" stop-color="#00ff87"/><stop offset=".283" stop-color="#00ff82"/><stop offset=".331" stop-color="#00ff7d"/><stop offset=".378" stop-color="#00ff78"/><stop offset=".425" stop-color="#00ff72"/><stop offset=".445" stop-color="#12ff6f"/><stop offset=".465" stop-color="#25ff6c"/><stop offset=".484" stop-color="#39ff69"/><stop offset=".504" stop-color="#4eff66"/><stop offset=".524" stop-color="#63ff63"/><stop offset=".544" stop-color="#7aff60"/><stop offset=".565" stop-color="#92ff5c"/><stop offset=".585" stop-color="#acff58"/><stop offset=".605" stop-color="#c6ff55"/><stop offset=".626" stop-color="#e2ff50"/><stop offset=".646" stop-color="#ffff4c"/><stop offset=".668" stop-color="#ffe13f"/><stop offset=".691" stop-color="#ffc834"/><stop offset=".713" stop-color="#ffb32a"/><stop offset=".736" stop-color="#ffa222"/><stop offset=".758" stop-color="#ff921c"/><stop offset=".78" stop-color="#ff8516"/><stop offset=".803" stop-color="#ff7910"/><stop offset=".825" stop-color="#ff6e0b"/><stop offset=".848" stop-color="#ff6407"/><stop offset=".87" stop-color="#ff5c03"/><stop offset=".892" stop-color="#ff5400"/><stop offset=".928" stop-color="#ff4900"/><stop offset=".964" stop-color="#ff4000"/><stop offset="1" stop-color="#ff3800"/></linearGradient>
<linearGradient id="c86" gradientUnits="userSpaceOnUse" x1="1178.5" x2="1671.7"><stop offset="0" stop-color="#00ff9e"/><stop offset=".052" stop-color="#00ff9a"/><stop offset=".105" stop-color="#00ff96"/><stop offset=".157" stop-color="#00ff92"/><stop offset=".209" stop-color="#00ff8d"/><stop offset=".262" stop-color="#0f8"/><stop offset=".314" stop-color="#00ff83"/><stop offset=".366" stop-color="#00ff7d"/><stop offset=".418" stop-color="#00ff76"/><stop offset=".439" stop-color="#13ff74"/><stop offset=".459" stop-color="#27ff71"/><stop offset=".479" stop-color="#3cff6e"/><stop offset=".499" stop-color="#51ff6b"/><stop offset=".519" stop-color="#68ff68"/><stop offset=".538" stop-color="#7eff64"/><stop offset=".558" stop-color="#96ff61"/><stop offset=".577" stop-color="#aeff5e"/><stop offset=".596" stop-color="#c8ff5a"/><stop offset=".616" stop-color="#e3ff56"/><stop offset=".635" stop-color="#ffff52"/><stop offset=".657" stop-color="#ffe244"/><stop offset=".678" stop-color="#ffc939"/><stop offset=".7" stop-color="#ffb42f"/><stop offset=".722" stop-color="#ffa227"/><stop offset=".743" stop-color="#ff9320"/><stop offset=".765" stop-color="#ff851a"/><stop offset=".787" stop-color="#ff7914"/><stop offset=".808" stop-color="#ff6f0f"/><stop offset=".83" stop-color="#ff650b"/><stop offset=".852" stop-color="#ff5d07"/><stop offset=".874" stop-color="#ff5503"/><stop offset=".895" stop-color="#ff4e00"/><stop offset=".948" stop-color="#ff4000"/><stop offset="1" stop-color="#ff3400"/></linearGradient>
<linearGradient id="c87" gradientUnits="userSpaceOnUse" x1="1179.1" x2="1675.9"><stop offset="0" stop-color="#00ffa1"/><stop offset=".051" stop-color="#00ff9e"/><stop offset=".103" stop-color="#00ff9a"/><stop offset=".154" stop-color="#00ff96"/><stop offset=".206" stop-color="#00ff91"/><stop offset=".257" stop-color="#00ff8d"/><stop offset=".309" stop-color="#00ff87"/><stop offset=".36" stop-color="#00ff82"/><stop offset=".412" stop-color="#00ff7b"/><stop offset=".432" stop-color="#14ff78"/><stop offset=".453" stop-color="#29ff76"/><stop offset=".473" stop-color="#3eff73"/><stop offset=".494" stop-color="#55ff70"/><stop offset=".515" stop-color="#6cff6c"/><stop offset=".536" stop-color="#87ff69"/><stop offset=".558" stop-color="#a2ff65"/><stop offset=".58" stop-color="#c0ff61"/><stop offset=".602" stop-color="#deff5d"/><stop offset=".624" stop-color="#ffff58"/><stop offset=".645" stop-color="#ffe24a"/><stop offset=".666" stop-color="#ffc93e"/><stop offset=".687" stop-color="#ffb534"/><stop offset=".708" stop-color="#ffa32c"/><stop offset=".729" stop-color="#ff9324"/><stop offset=".751" stop-color="#ff861e"/><stop offset=".772" stop-color="#ff7a18"/><stop offset=".793" stop-color="#ff7013"/><stop offset=".814" stop-color="#ff660e"/><stop offset=".835" stop-color="#ff5e0a"/><stop offset=".856" stop-color="#ff5606"/><stop offset=".877" stop-color="#ff4f03"/><stop offset=".898" stop-color="#ff4800"/><stop offset=".949" stop-color="#ff3b00"/><stop offset="1" stop-color="#ff3000"/></linearGradient>
<linearGradient id="c88" gradientUnits="userSpaceOnUse" x1="1179.8" x2="1680.1"><stop offset="0" stop-color="#00ffa5"/><stop offset=".051" stop-color="#00ffa1"/><stop offset=".101" stop-color="#00ff9e"/><stop offset=".152" stop-color="#00ff9a"/><stop offset=".203" stop-color="#00ff96"/><stop offset=".253" stop-color="#00ff91"/><stop offset=".304" stop-color="#00ff8c"/><stop offset=".355" stop-color="#00ff86"/><stop offset=".405" stop-color="#00ff80"/><stop offset=".426" stop-color="#15ff7d"/><stop offset=".447" stop-color="#2aff7b"/><stop offset=".468" stop-color="#41ff78"/><stop offset=".489" stop-color="#58ff74"/><stop offset=".51" stop-color="#71ff71"/><stop offset=".531" stop-color="#8bff6e"/><stop offset=".551" stop-color="#a6ff6a"/><stop offset=".572" stop-color="#c2ff67"/><stop offset=".593" stop-color="#e0ff63"/><stop offset=".613" stop-color="#ffff5e"/><stop offset=".634" stop-color="#ffe250"/><stop offset=".654" stop-color="#ffca44"/><stop offset=".675" stop-color="#ffb539"/><stop offset=".696" stop-color="#ffa330"/><stop offset=".716" stop-color="#ff9429"/><stop offset=".737" stop-color="#ff8622"/><stop offset=".757" stop-color="#ff7b1c"/><stop offset=".778" stop-color="#ff7017"/><stop offset=".798" stop-color="#ff6712"/><stop offset=".819" stop-color="#ff5e0e"/><stop offset=".839" stop-color="#ff560a"/><stop offset=".86" stop-color="#ff4f06"/><stop offset=".88" stop-color="#ff4903"/><stop offset=".901" stop-color="#ff4300"/><stop offset=".951" stop-color="#ff3700"/><stop offset="1" stop-color="#ff2c00"/></linearGradient>
<linearGradient id="c89" gradientUnits="userSpaceOnUse" x1="1180.4" x2="1684.3"><stop offset="0" stop-color="#00ffa8"/><stop offset=".05" stop-color="#00ffa5"/><stop offset=".1" stop-color="#00ffa2"/><stop offset=".15" stop-color="#00ff9e"/><stop offset=".199" stop-color="#00ff9a"/><stop offset=".249" stop-color="#00ff95"/><stop offset=".299" stop-color="#00ff90"/><stop offset=".349" stop-color="#00ff8b"/><stop offset=".399" stop-color="#00ff85"/><stop offset=".42" stop-color="#15ff82"/><stop offset=".442" stop-color="#2cff80"/><stop offset=".463" stop-color="#44ff7d"/><stop offset=".484" stop-color="#5cff7a"/><stop offset=".506" stop-color="#76ff76"/><stop offset=".525" stop-color="#8fff73"/><stop offset=".544" stop-color="#a9ff70"/><stop offset=".564" stop-color="#c4ff6c"/><stop offset=".583" stop-color="#e1ff69"/><stop offset=".603" stop-color="#ffff65"/><stop offset=".624" stop-color="#ffe055"/><stop offset=".646" stop-color="#ffc747"/><stop offset=".667" stop-color="#ffb13c"/><stop offset=".689" stop-color="#ff9f33"/><stop offset=".71" stop-color="#ff8f2a"/><stop offset=".732" stop-color="#ff8123"/><stop offset=".753" stop-color="#ff751d"/><stop offset=".775" stop-color="#ff6b17"/><stop offset=".796" stop-color="#ff6112"/><stop offset=".818" stop-color="#ff590e"/><stop offset=".839" stop-color="#ff510a"/><stop offset=".861" stop-color="#ff4a06"/><stop offset=".882" stop-color="#ff4403"/><stop offset=".904" stop-color="#ff3e00"/><stop offset=".952" stop-color="#ff3200"/><stop offset="1" stop-color="#ff2900"/></linearGradient>
<linearGradient id="c90" gradientUnits="userSpaceOnUse" x1="1181" x2="1688.5"><stop offset="0" stop-color="#00ffac"/><stop offset=".049" stop-color="#00ffa9"/><stop offset=".098" stop-color="#00ffa6"/><stop offset=".147" stop-color="#00ffa2"/><stop offset=".196" stop-color="#00ff9e"/><stop offset=".245" stop-color="#00ff9a"/><stop offset=".294" stop-color="#00ff95"/><stop offset=".344" stop-color="#00ff90"/><stop offset=".393" stop-color="#00ff8a"/><stop offset=".411" stop-color="#13ff88"/><stop offset=".429" stop-color="#26ff86"/><stop offset=".447" stop-color="#3aff83"/><stop offset=".465" stop-color="#4fff81"/><stop offset=".483" stop-color="#65ff7e"/><stop offset=".501" stop-color="#7bff7b"/><stop offset=".519" stop-color="#93ff79"/><stop offset=".538" stop-color="#acff76"/><stop offset=".556" stop-color="#c7ff72"/><stop offset=".574" stop-color="#e2ff6f"/><stop offset=".592" stop-color="#ffff6c"/><stop offset=".613" stop-color="#ffe05b"/><stop offset=".634" stop-color="#ffc74d"/><stop offset=".655" stop-color="#ffb141"/><stop offset=".676" stop-color="#ff9f38"/><stop offset=".697" stop-color="#ff902f"/><stop offset=".718" stop-color="#ff8228"/><stop offset=".739" stop-color="#ff7621"/><stop offset=".76" stop-color="#ff6b1b"/><stop offset=".781" stop-color="#ff6216"/><stop offset=".802" stop-color="#ff5911"/><stop offset=".823" stop-color="#ff510d"/><stop offset=".844" stop-color="#ff4a0a"/><stop offset=".865" stop-color="#ff4406"/><stop offset=".886" stop-color="#ff3e03"/><stop offset=".907" stop-color="#ff3900"/><stop offset=".953" stop-color="#ff2e00"/><stop offset="1" stop-color="#ff2600"/></linearGradient>
<linearGradient id="c91" gradientUnits="userSpaceOnUse" x1="1181.7" x2="1692.7"><stop offset="0" stop-color="#00ffb0"/><stop offset=".048" stop-color="#00ffad"/><stop offset=".097" stop-color="#0fa"/><stop offset=".145" stop-color="#00ffa6"/><stop offset=".193" stop-color="#00ffa3"/><stop offset=".241" stop-color="#00ff9f"/><stop offset=".29" stop-color="#00ff9a"/><stop offset=".338" stop-color="#00ff95"/><stop offset=".386" stop-color="#00ff90"/><stop offset=".405" stop-color="#13ff8e"/><stop offset=".423" stop-color="#27ff8b"/><stop offset=".442" stop-color="#3cff89"/><stop offset=".46" stop-color="#52ff86"/><stop offset=".478" stop-color="#69ff84"/><stop offset=".497" stop-color="#81ff81"/><stop offset=".518" stop-color="#9eff7e"/><stop offset=".539" stop-color="#bcff7a"/><stop offset=".561" stop-color="#ddff76"/><stop offset=".582" stop-color="#ffff72"/><stop offset=".602" stop-color="#ffe061"/><stop offset=".623" stop-color="#ffc753"/><stop offset=".643" stop-color="#ffb247"/><stop offset=".664" stop-color="#ff9f3c"/><stop offset=".684" stop-color="#ff9034"/><stop offset=".705" stop-color="#ff822c"/><stop offset=".725" stop-color="#ff7625"/><stop offset=".746" stop-color="#ff6b1f"/><stop offset=".766" stop-color="#ff621a"/><stop offset=".787" stop-color="#ff5915"/><stop offset=".807" stop-color="#ff5211"/><stop offset=".828" stop-color="#ff4b0d"/><stop offset=".848" stop-color="#ff4409"/><stop offset=".868" stop-color="#ff3f06"/><stop offset=".889" stop-color="#ff3903"/><stop offset=".909" stop-color="#ff3400"/><stop offset=".955" stop-color="#ff2b00"/><stop offset="1" stop-color="#f20"/></linearGradient>
<linearGradient id="c92" gradientUnits="userSpaceOnUse" x1="1182.4" x2="1696.9"><stop offset="0" stop-color="#00ffb4"/><stop offset=".048" stop-color="#00ffb1"/><stop offset=".095" stop-color="#00ffae"/><stop offset=".143" stop-color="#00ffab"/><stop offset=".19" stop-color="#00ffa7"/><stop offset=".238" stop-color="#00ffa3"/><stop offset=".285" stop-color="#00ff9f"/><stop offset=".333" stop-color="#00ff9a"/><stop offset=".38" stop-color="#00ff95"/><stop offset=".399" stop-color="#14ff93"/><stop offset=".418" stop-color="#29ff91"/><stop offset=".436" stop-color="#3fff8e"/><stop offset=".455" stop-color="#56ff8c"/><stop offset=".474" stop-color="#6dff89"/><stop offset=".492" stop-color="#87ff87"/><stop offset=".512" stop-color="#a2ff83"/><stop offset=".532" stop-color="#c0ff80"/><stop offset=".552" stop-color="#deff7d"/><stop offset=".572" stop-color="#ffff79"/><stop offset=".593" stop-color="#ffdf66"/><stop offset=".614" stop-color="#ffc457"/><stop offset=".636" stop-color="#ffae4a"/><stop offset=".657" stop-color="#ff9b3f"/><stop offset=".678" stop-color="#ff8b36"/><stop offset=".699" stop-color="#ff7e2e"/><stop offset=".721" stop-color="#ff7126"/><stop offset=".742" stop-color="#ff6720"/><stop offset=".763" stop-color="#ff5d1b"/><stop offset=".784" stop-color="#ff5516"/><stop offset=".806" stop-color="#ff4d11"/><stop offset=".827" stop-color="#ff460d"/><stop offset=".848" stop-color="#ff4009"/><stop offset=".87" stop-color="#ff3a06"/><stop offset=".891" stop-color="#ff3503"/><stop offset=".912" stop-color="#ff3000"/><stop offset=".956" stop-color="#ff2700"/><stop offset="1" stop-color="#ff1f00"/></linearGradient>
<linearGradient id="c93" gradientUnits="userSpaceOnUse" x1="1183.1" x2="1701"><stop offset="0" stop-color="#00ffb8"/><stop offset=".047" stop-color="#00ffb5"/><stop offset=".093" stop-color="#00ffb2"/><stop offset=".14" stop-color="#00ffaf"/><stop offset=".187" stop-color="#00ffac"/><stop offset=".234" stop-color="#00ffa8"/><stop offset=".28" stop-color="#00ffa4"/><stop offset=".327" stop-color="#00ffa0"/><stop offset=".374" stop-color="#00ff9b"/><stop offset=".393" stop-color="#15ff99"/><stop offset=".412" stop-color="#2bff96"/><stop offset=".431" stop-color="#41ff94"/><stop offset=".45" stop-color="#59ff92"/><stop offset=".469" stop-color="#72ff8f"/><stop offset=".488" stop-color="#8cff8c"/><stop offset=".507" stop-color="#a7ff8a"/><stop offset=".525" stop-color="#c3ff87"/><stop offset=".543" stop-color="#e0ff84"/><stop offset=".562" stop-color="#ffff80"/><stop offset=".582" stop-color="#ffdf6d"/><stop offset=".603" stop-color="#ffc45d"/><stop offset=".624" stop-color="#ffae4f"/><stop offset=".645" stop-color="#ff9c44"/><stop offset=".666" stop-color="#ff8c3a"/><stop offset=".686" stop-color="#ff7e32"/><stop offset=".707" stop-color="#ff722b"/><stop offset=".728" stop-color="#ff6724"/><stop offset=".749" stop-color="#ff5d1e"/><stop offset=".769" stop-color="#ff5519"/><stop offset=".79" stop-color="#ff4d14"/><stop offset=".811" stop-color="#ff4610"/><stop offset=".832" stop-color="#ff400c"/><stop offset=".852" stop-color="#ff3a09"/><stop offset=".873" stop-color="#ff3506"/><stop offset=".894" stop-color="#ff3003"/><stop offset=".915" stop-color="#ff2c00"/><stop offset=".957" stop-color="#ff2300"/><stop offset="1" stop-color="#ff1c00"/></linearGradient>
<linearGradient id="c94" gradientUnits="userSpaceOnUse" x1="1183.8" x2="1705.2"><stop offset="0" stop-color="#00ffbc"/><stop offset=".046" stop-color="#00ffba"/><stop offset=".092" stop-color="#00ffb7"/><stop offset=".138" stop-color="#00ffb4"/><stop offset=".184" stop-color="#00ffb1"/><stop offset=".23" stop-color="#00ffad"/><stop offset=".276" stop-color="#0fa"/><stop offset=".322" stop-color="#00ffa5"/><stop offset=".368" stop-color="#00ffa1"/><stop offset=".387" stop-color="#16ff9f"/><stop offset=".407" stop-color="#2cff9c"/><stop offset=".426" stop-color="#44ff9a"/><stop offset=".445" stop-color="#5dff98"/><stop offset=".465" stop-color="#77ff95"/><stop offset=".484" stop-color="#92ff92"/><stop offset=".501" stop-color="#acff90"/><stop offset=".518" stop-color="#c6ff8d"/><stop offset=".535" stop-color="#e2ff8b"/><stop offset=".552" stop-color="#ff8"/><stop offset=".572" stop-color="#ffdf74"/><stop offset=".592" stop-color="#ffc463"/><stop offset=".613" stop-color="#ffae55"/><stop offset=".633" stop-color="#ff9c49"/><stop offset=".653" stop-color="#ff8c3f"/><stop offset=".674" stop-color="#ff7e36"/><stop offset=".694" stop-color="#ff722f"/><stop offset=".714" stop-color="#ff6728"/><stop offset=".735" stop-color="#ff5d22"/><stop offset=".755" stop-color="#ff551d"/><stop offset=".775" stop-color="#ff4d18"/><stop offset=".796" stop-color="#ff4613"/><stop offset=".816" stop-color="#ff400f"/><stop offset=".836" stop-color="#ff3a0c"/><stop offset=".856" stop-color="#ff3509"/><stop offset=".877" stop-color="#ff3005"/><stop offset=".897" stop-color="#ff2c03"/><stop offset=".917" stop-color="#ff2700"/><stop offset=".959" stop-color="#ff2000"/><stop offset="1" stop-color="#ff1900"/></linearGradient>
<linearGradient id="c95" gradientUnits="userSpaceOnUse" x1="1184.4" x2="1709.4"><stop offset="0" stop-color="#00ffc0"/><stop offset=".045" stop-color="#00ffbe"/><stop offset=".09" stop-color="#00ffbc"/><stop offset=".136" stop-color="#00ffb9"/><stop offset=".181" stop-color="#00ffb6"/><stop offset=".226" stop-color="#00ffb3"/><stop offset=".271" stop-color="#00ffaf"/><stop offset=".317" stop-color="#00ffab"/><stop offset=".362" stop-color="#00ffa7"/><stop offset=".382" stop-color="#16ffa5"/><stop offset=".401" stop-color="#2effa3"/><stop offset=".421" stop-color="#47ffa0"/><stop offset=".441" stop-color="#61ff9e"/><stop offset=".46" stop-color="#7cff9b"/><stop offset=".48" stop-color="#9f9"/><stop offset=".501" stop-color="#b9ff96"/><stop offset=".521" stop-color="#dbff93"/><stop offset=".542" stop-color="#ffff8f"/><stop offset=".562" stop-color="#ffdf7a"/><stop offset=".582" stop-color="#ffc469"/><stop offset=".602" stop-color="#ffae5b"/><stop offset=".622" stop-color="#ff9c4f"/><stop offset=".641" stop-color="#ff8c44"/><stop offset=".661" stop-color="#ff7e3b"/><stop offset=".681" stop-color="#ff7233"/><stop offset=".701" stop-color="#ff672c"/><stop offset=".721" stop-color="#ff5d26"/><stop offset=".741" stop-color="#ff5520"/><stop offset=".761" stop-color="#ff4d1b"/><stop offset=".781" stop-color="#ff4617"/><stop offset=".801" stop-color="#ff4013"/><stop offset=".82" stop-color="#ff3a0f"/><stop offset=".84" stop-color="#ff350b"/><stop offset=".86" stop-color="#ff3008"/><stop offset=".88" stop-color="#ff2c05"/><stop offset=".9" stop-color="#ff2703"/><stop offset=".92" stop-color="#ff2400"/><stop offset=".96" stop-color="#ff1d00"/><stop offset="1" stop-color="#ff1600"/></linearGradient>
<linearGradient id="c96" gradientUnits="userSpaceOnUse" x1="1185.2" x2="1713.6"><stop offset="0" stop-color="#00ffc5"/><stop offset=".044" stop-color="#00ffc3"/><stop offset=".089" stop-color="#00ffc0"/><stop offset=".133" stop-color="#00ffbe"/><stop offset=".178" stop-color="#0fb"/><stop offset=".222" stop-color="#00ffb8"/><stop offset=".267" stop-color="#00ffb5"/><stop offset=".311" stop-color="#00ffb1"/><stop offset=".356" stop-color="#00ffad"/><stop offset=".376" stop-color="#17ffab"/><stop offset=".396" stop-color="#30ffa9"/><stop offset=".416" stop-color="#49ffa7"/><stop offset=".436" stop-color="#65ffa4"/><stop offset=".456" stop-color="#81ffa2"/><stop offset=".476" stop-color="#9fff9f"/><stop offset=".495" stop-color="#beff9d"/><stop offset=".513" stop-color="#ddff9a"/><stop offset=".532" stop-color="#ffff97"/><stop offset=".553" stop-color="#ffdd80"/><stop offset=".573" stop-color="#ffc26e"/><stop offset=".594" stop-color="#ffab5e"/><stop offset=".614" stop-color="#ff9851"/><stop offset=".635" stop-color="#ff8846"/><stop offset=".655" stop-color="#ff7a3d"/><stop offset=".676" stop-color="#ff6d35"/><stop offset=".697" stop-color="#ff632d"/><stop offset=".717" stop-color="#ff5927"/><stop offset=".738" stop-color="#ff5121"/><stop offset=".758" stop-color="#ff491c"/><stop offset=".779" stop-color="#ff4217"/><stop offset=".799" stop-color="#ff3c13"/><stop offset=".82" stop-color="#ff360f"/><stop offset=".84" stop-color="#ff310c"/><stop offset=".861" stop-color="#ff2c08"/><stop offset=".881" stop-color="#ff2805"/><stop offset=".902" stop-color="#ff2403"/><stop offset=".923" stop-color="#ff2000"/><stop offset=".961" stop-color="#ff1900"/><stop offset="1" stop-color="#ff1400"/></linearGradient>
<linearGradient id="c97" gradientUnits="userSpaceOnUse" x1="1185.9" x2="1717.8"><stop offset="0" stop-color="#00ffc9"/><stop offset=".044" stop-color="#00ffc7"/><stop offset=".088" stop-color="#00ffc5"/><stop offset=".131" stop-color="#00ffc3"/><stop offset=".175" stop-color="#00ffc0"/><stop offset=".219" stop-color="#00ffbd"/><stop offset=".263" stop-color="#00ffba"/><stop offset=".306" stop-color="#00ffb7"/><stop offset=".35" stop-color="#00ffb3"/><stop offset=".37" stop-color="#18ffb1"/><stop offset=".391" stop-color="#32ffaf"/><stop offset=".411" stop-color="#4cffad"/><stop offset=".431" stop-color="#69ffab"/><stop offset=".451" stop-color="#87ffa9"/><stop offset=".472" stop-color="#a6ffa6"/><stop offset=".489" stop-color="#c2ffa4"/><stop offset=".506" stop-color="#e0ffa2"/><stop offset=".523" stop-color="#ffff9f"/><stop offset=".543" stop-color="#fd8"/><stop offset=".563" stop-color="#ffc274"/><stop offset=".583" stop-color="#ffab64"/><stop offset=".603" stop-color="#ff9857"/><stop offset=".623" stop-color="#ff884b"/><stop offset=".643" stop-color="#ff7a42"/><stop offset=".663" stop-color="#ff6d39"/><stop offset=".684" stop-color="#ff6331"/><stop offset=".704" stop-color="#ff592b"/><stop offset=".724" stop-color="#ff5125"/><stop offset=".744" stop-color="#ff491f"/><stop offset=".764" stop-color="#ff421b"/><stop offset=".784" stop-color="#ff3c16"/><stop offset=".804" stop-color="#ff3612"/><stop offset=".824" stop-color="#ff310e"/><stop offset=".845" stop-color="#ff2c0b"/><stop offset=".865" stop-color="#ff2808"/><stop offset=".885" stop-color="#ff2405"/><stop offset=".905" stop-color="#ff2002"/><stop offset=".925" stop-color="#ff1c00"/><stop offset=".963" stop-color="#ff1600"/><stop offset="1" stop-color="#f10"/></linearGradient>
<linearGradient id="c98" gradientUnits="userSpaceOnUse" x1="1186.6" x2="1722"><stop offset="0" stop-color="#00ffce"/><stop offset=".043" stop-color="#0fc"/><stop offset=".086" stop-color="#00ffca"/><stop offset=".129" stop-color="#00ffc8"/><stop offset=".172" stop-color="#00ffc6"/><stop offset=".215" stop-color="#00ffc3"/><stop offset=".258" stop-color="#00ffc0"/><stop offset=".301" stop-color="#00ffbd"/><stop offset=".344" stop-color="#00ffba"/><stop offset=".365" stop-color="#19ffb8"/><stop offset=".385" stop-color="#33ffb6"/><stop offset=".406" stop-color="#4fffb4"/><stop offset=".426" stop-color="#6dffb2"/><stop offset=".447" stop-color="#8cffb0"/><stop offset=".468" stop-color="#adffad"/><stop offset=".483" stop-color="#c7ffac"/><stop offset=".498" stop-color="#e3ffaa"/><stop offset=".513" stop-color="#ffffa8"/><stop offset=".533" stop-color="#ffdd8f"/><stop offset=".553" stop-color="#ffc27b"/><stop offset=".572" stop-color="#ffab6a"/><stop offset=".592" stop-color="#ff985c"/><stop offset=".612" stop-color="#ff8851"/><stop offset=".632" stop-color="#ff7946"/><stop offset=".651" stop-color="#ff6d3d"/><stop offset=".671" stop-color="#ff6236"/><stop offset=".691" stop-color="#ff592f"/><stop offset=".71" stop-color="#ff5028"/><stop offset=".73" stop-color="#ff4923"/><stop offset=".75" stop-color="#ff421e"/><stop offset=".77" stop-color="#ff3c19"/><stop offset=".789" stop-color="#ff3615"/><stop offset=".809" stop-color="#ff3111"/><stop offset=".829" stop-color="#ff2c0e"/><stop offset=".849" stop-color="#ff280b"/><stop offset=".868" stop-color="#ff2308"/><stop offset=".888" stop-color="#ff2005"/><stop offset=".908" stop-color="#ff1c02"/><stop offset=".927" stop-color="#ff1900"/><stop offset=".964" stop-color="#ff1300"/><stop offset="1" stop-color="#ff0e00"/></linearGradient>
<linearGradient id="c99" gradientUnits="userSpaceOnUse" x1="1187.4" x2="1726.2"><stop offset="0" stop-color="#00ffd3"/><stop offset=".042" stop-color="#00ffd1"/><stop offset=".085" stop-color="#00ffcf"/><stop offset=".127" stop-color="#00ffcd"/><stop offset=".169" stop-color="#00ffcb"/><stop offset=".212" stop-color="#00ffc9"/><stop offset=".254" stop-color="#00ffc6"/><stop offset=".296" stop-color="#00ffc4"/><stop offset=".339" stop-color="#00ffc0"/><stop offset=".356" stop-color="#16ffbf"/><stop offset=".374" stop-color="#2dffbe"/><stop offset=".392" stop-color="#46ffbc"/><stop offset=".41" stop-color="#60ffba"/><stop offset=".428" stop-color="#7affb9"/><stop offset=".446" stop-color="#97ffb7"/><stop offset=".464" stop-color="#b5ffb5"/><stop offset=".484" stop-color="#d9ffb3"/><stop offset=".504" stop-color="#ffffb0"/><stop offset=".524" stop-color="#ffdc95"/><stop offset=".544" stop-color="#ffbf80"/><stop offset=".565" stop-color="#ffa86e"/><stop offset=".585" stop-color="#ff9460"/><stop offset=".605" stop-color="#ff8453"/><stop offset=".626" stop-color="#ff7648"/><stop offset=".646" stop-color="#ff693f"/><stop offset=".666" stop-color="#ff5e37"/><stop offset=".686" stop-color="#ff5530"/><stop offset=".707" stop-color="#ff4c29"/><stop offset=".727" stop-color="#ff4524"/><stop offset=".747" stop-color="#ff3e1f"/><stop offset=".768" stop-color="#ff381a"/><stop offset=".788" stop-color="#ff3216"/><stop offset=".808" stop-color="#ff2d12"/><stop offset=".828" stop-color="#ff280e"/><stop offset=".849" stop-color="#ff240b"/><stop offset=".869" stop-color="#ff2008"/><stop offset=".889" stop-color="#ff1c05"/><stop offset=".91" stop-color="#ff1902"/><stop offset=".93" stop-color="#ff1600"/><stop offset=".965" stop-color="#f10"/><stop offset="1" stop-color="#ff0c00"/></linearGradient>
<linearGradient id="c100" gradientUnits="userSpaceOnUse" x1="1188.1" x2="1730.4"><stop offset="0" stop-color="#00ffd8"/><stop offset=".048" stop-color="#00ffd6"/><stop offset=".095" stop-color="#00ffd4"/><stop offset=".143" stop-color="#00ffd2"/><stop offset=".19" stop-color="#00ffd0"/><stop offset=".238" stop-color="#00ffcd"/><stop offset=".285" stop-color="#00ffcb"/><stop offset=".333" stop-color="#00ffc7"/><stop offset=".351" stop-color="#17ffc6"/><stop offset=".369" stop-color="#2fffc5"/><stop offset=".387" stop-color="#49ffc3"/><stop offset=".405" stop-color="#63ffc2"/><stop offset=".423" stop-color="#80ffc0"/><stop offset=".441" stop-color="#9dffbf"/><stop offset=".46" stop-color="#bdffbd"/><stop offset=".477" stop-color="#dfb"/><stop offset=".495" stop-color="#ffffb9"/><stop offset=".514" stop-color="#ffdb9d"/><stop offset=".534" stop-color="#ffbf87"/><stop offset=".554" stop-color="#ffa875"/><stop offset=".574" stop-color="#ff9465"/><stop offset=".594" stop-color="#ff8458"/><stop offset=".614" stop-color="#ff754d"/><stop offset=".634" stop-color="#ff6944"/><stop offset=".654" stop-color="#ff5e3b"/><stop offset=".674" stop-color="#ff5534"/><stop offset=".694" stop-color="#ff4c2d"/><stop offset=".713" stop-color="#ff4527"/><stop offset=".733" stop-color="#ff3e22"/><stop offset=".753" stop-color="#ff381d"/><stop offset=".773" stop-color="#ff3219"/><stop offset=".793" stop-color="#ff2d15"/><stop offset=".813" stop-color="#ff2811"/><stop offset=".833" stop-color="#ff240e"/><stop offset=".853" stop-color="#ff200a"/><stop offset=".873" stop-color="#ff1c08"/><stop offset=".893" stop-color="#ff1905"/><stop offset=".912" stop-color="#ff1502"/><stop offset=".932" stop-color="#ff1200"/><stop offset=".966" stop-color="#ff0e00"/><stop offset="1" stop-color="#ff0a00"/></linearGradient>
<linearGradient id="c101" gradientUnits="userSpaceOnUse" x1="1188.9" x2="1734.6"><stop offset="0" stop-color="#0fd"/><stop offset=".047" stop-color="#00ffdb"/><stop offset=".094" stop-color="#00ffda"/><stop offset=".14" stop-color="#00ffd8"/><stop offset=".187" stop-color="#00ffd6"/><stop offset=".234" stop-color="#00ffd4"/><stop offset=".281" stop-color="#00ffd1"/><stop offset=".327" stop-color="#00ffcf"/><stop offset=".346" stop-color="#18ffcd"/><stop offset=".364" stop-color="#31ffcc"/><stop offset=".382" stop-color="#4bffcb"/><stop offset=".401" stop-color="#67ffc9"/><stop offset=".419" stop-color="#85ffc8"/><stop offset=".437" stop-color="#a4ffc7"/><stop offset=".456" stop-color="#c5ffc5"/><stop offset=".471" stop-color="#e1ffc4"/><stop offset=".485" stop-color="#ffffc2"/><stop offset=".505" stop-color="#ffdba5"/><stop offset=".524" stop-color="#ffbf8e"/><stop offset=".544" stop-color="#ffa77b"/><stop offset=".564" stop-color="#ff946b"/><stop offset=".583" stop-color="#ff835e"/><stop offset=".603" stop-color="#ff7552"/><stop offset=".622" stop-color="#ff6948"/><stop offset=".642" stop-color="#ff5e40"/><stop offset=".661" stop-color="#ff5438"/><stop offset=".681" stop-color="#ff4c31"/><stop offset=".7" stop-color="#ff442b"/><stop offset=".72" stop-color="#ff3e25"/><stop offset=".739" stop-color="#ff3720"/><stop offset=".759" stop-color="#ff321c"/><stop offset=".778" stop-color="#ff2d18"/><stop offset=".798" stop-color="#ff2814"/><stop offset=".818" stop-color="#ff2410"/><stop offset=".837" stop-color="#ff200d"/><stop offset=".857" stop-color="#ff1c0a"/><stop offset=".876" stop-color="#ff1807"/><stop offset=".896" stop-color="#ff1505"/><stop offset=".915" stop-color="#ff1202"/><stop offset=".935" stop-color="#ff0f00"/><stop offset=".967" stop-color="#ff0b00"/><stop offset="1" stop-color="#ff0700"/></linearGradient>
<linearGradient id="c102" gradientUnits="userSpaceOnUse" x1="1189.7" x2="1738.8"><stop offset="0" stop-color="#00ffe2"/><stop offset=".046" stop-color="#00ffe1"/><stop offset=".092" stop-color="#00ffdf"/><stop offset=".138" stop-color="#00ffde"/><stop offset=".184" stop-color="#00ffdc"/><stop offset=".23" stop-color="#00ffda"/><stop offset=".276" stop-color="#00ffd8"/><stop offset=".322" stop-color="#00ffd6"/><stop offset=".34" stop-color="#19ffd5"/><stop offset=".359" stop-color="#33ffd4"/><stop offset=".377" stop-color="#4effd3"/><stop offset=".396" stop-color="#6bffd2"/><stop offset=".415" stop-color="#8affd0"/><stop offset=".433" stop-color="#abffcf"/><stop offset=".452" stop-color="#cdffcd"/><stop offset=".464" stop-color="#e6ffcc"/><stop offset=".476" stop-color="#ffffcb"/><stop offset=".496" stop-color="#ffdaac"/><stop offset=".516" stop-color="#ffbc94"/><stop offset=".536" stop-color="#ffa47f"/><stop offset=".556" stop-color="#ff906f"/><stop offset=".577" stop-color="#ff8061"/><stop offset=".597" stop-color="#ff7155"/><stop offset=".617" stop-color="#ff654a"/><stop offset=".637" stop-color="#ff5a41"/><stop offset=".657" stop-color="#ff5139"/><stop offset=".677" stop-color="#ff4832"/><stop offset=".697" stop-color="#ff412c"/><stop offset=".717" stop-color="#ff3a26"/><stop offset=".737" stop-color="#ff3421"/><stop offset=".757" stop-color="#ff2e1c"/><stop offset=".777" stop-color="#ff2918"/><stop offset=".797" stop-color="#ff2514"/><stop offset=".817" stop-color="#ff2011"/><stop offset=".837" stop-color="#ff1c0d"/><stop offset=".857" stop-color="#ff190a"/><stop offset=".877" stop-color="#ff1507"/><stop offset=".897" stop-color="#ff1205"/><stop offset=".917" stop-color="#ff0f02"/><stop offset=".937" stop-color="#ff0c00"/><stop offset=".969" stop-color="#ff0900"/><stop offset="1" stop-color="#ff0500"/></linearGradient>
<linearGradient id="c103" gradientUnits="userSpaceOnUse" x1="1190.5" x2="1743"><stop offset="0" stop-color="#00ffe7"/><stop offset=".045" stop-color="#00ffe6"/><stop offset=".09" stop-color="#00ffe5"/><stop offset=".136" stop-color="#00ffe4"/><stop offset=".181" stop-color="#00ffe3"/><stop offset=".226" stop-color="#00ffe1"/><stop offset=".271" stop-color="#00ffdf"/><stop offset=".316" stop-color="#00ffde"/><stop offset=".335" stop-color="#1affdd"/><stop offset=".354" stop-color="#35ffdc"/><stop offset=".373" stop-color="#51ffdb"/><stop offset=".391" stop-color="#70ffda"/><stop offset=".41" stop-color="#90ffd9"/><stop offset=".429" stop-color="#b2ffd8"/><stop offset=".448" stop-color="#d6ffd6"/><stop offset=".467" stop-color="#ffffd5"/><stop offset=".487" stop-color="#ffdab5"/><stop offset=".507" stop-color="#ffbc9b"/><stop offset=".526" stop-color="#ffa486"/><stop offset=".546" stop-color="#ff9075"/><stop offset=".566" stop-color="#ff7f66"/><stop offset=".585" stop-color="#ff715a"/><stop offset=".605" stop-color="#ff654f"/><stop offset=".625" stop-color="#ff5a46"/><stop offset=".644" stop-color="#ff503d"/><stop offset=".664" stop-color="#ff4836"/><stop offset=".684" stop-color="#ff4030"/><stop offset=".703" stop-color="#ff3a2a"/><stop offset=".723" stop-color="#ff3324"/><stop offset=".743" stop-color="#ff2e1f"/><stop offset=".762" stop-color="#ff291b"/><stop offset=".782" stop-color="#ff2417"/><stop offset=".802" stop-color="#ff2013"/><stop offset=".821" stop-color="#ff1c10"/><stop offset=".841" stop-color="#ff180d"/><stop offset=".861" stop-color="#ff150a"/><stop offset=".88" stop-color="#ff1207"/><stop offset=".9" stop-color="#ff0f05"/><stop offset=".92" stop-color="#ff0c02"/><stop offset=".939" stop-color="#ff0a00"/><stop offset=".97" stop-color="#ff0600"/><stop offset="1" stop-color="#ff0300"/></linearGradient>
<linearGradient id="c104" gradientUnits="userSpaceOnUse" x1="1191.2" x2="1747.3"><stop offset="0" stop-color="#00ffed"/><stop offset=".044" stop-color="#00ffec"/><stop offset=".089" stop-color="#00ffeb"/><stop offset=".133" stop-color="#00ffea"/><stop offset=".178" stop-color="#00ffe9"/><stop offset=".222" stop-color="#00ffe8"/><stop offset=".266" stop-color="#00ffe7"/><stop offset=".311" stop-color="#00ffe5"/><stop offset=".33" stop-color="#1bffe5"/><stop offset=".349" stop-color="#37ffe4"/><stop offset=".368" stop-color="#55ffe3"/><stop offset=".387" stop-color="#74ffe3"/><stop offset=".406" stop-color="#96ffe2"/><stop offset=".425" stop-color="#baffe1"/><stop offset=".444" stop-color="#e0ffe0"/><stop offset=".459" stop-color="#ffffdf"/><stop offset=".478" stop-color="#ffdabd"/><stop offset=".497" stop-color="#ffbca3"/><stop offset=".517" stop-color="#ffa48d"/><stop offset=".536" stop-color="#ff907b"/><stop offset=".555" stop-color="#ff7f6c"/><stop offset=".575" stop-color="#ff715f"/><stop offset=".594" stop-color="#ff6454"/><stop offset=".613" stop-color="#ff594a"/><stop offset=".632" stop-color="#ff5042"/><stop offset=".652" stop-color="#ff473a"/><stop offset=".671" stop-color="#ff4033"/><stop offset=".69" stop-color="#ff392d"/><stop offset=".71" stop-color="#ff3328"/><stop offset=".729" stop-color="#ff2e23"/><stop offset=".748" stop-color="#ff281e"/><stop offset=".768" stop-color="#ff241a"/><stop offset=".787" stop-color="#ff2016"/><stop offset=".806" stop-color="#ff1c13"/><stop offset=".826" stop-color="#ff180f"/><stop offset=".845" stop-color="#ff150c"/><stop offset=".864" stop-color="#ff120a"/><stop offset=".884" stop-color="#ff0f07"/><stop offset=".903" stop-color="#ff0c04"/><stop offset=".922" stop-color="#ff0902"/><stop offset=".942" stop-color="#ff0700"/><stop offset=".971" stop-color="#ff0400"/><stop offset="1" stop-color="#ff0100"/></linearGradient>
<linearGradient id="c105" gradientUnits="userSpaceOnUse" x1="1192" x2="1751.5"><stop offset="0" stop-color="#00fff2"/><stop offset=".044" stop-color="#00fff2"/><stop offset=".087" stop-color="#00fff1"/><stop offset=".131" stop-color="#00fff1"/><stop offset=".174" stop-color="#00fff0"/><stop offset=".218" stop-color="#00ffef"/><stop offset=".262" stop-color="#00ffef"/><stop offset=".305" stop-color="#0fe"/><stop offset=".325" stop-color="#1cffed"/><stop offset=".344" stop-color="#39ffed"/><stop offset=".363" stop-color="#58ffec"/><stop offset=".382" stop-color="#79ffec"/><stop offset=".402" stop-color="#9cffeb"/><stop offset=".421" stop-color="#c2ffeb"/><stop offset=".44" stop-color="#eaffea"/><stop offset=".45" stop-color="#ffffea"/><stop offset=".469" stop-color="#ffd9c6"/><stop offset=".488" stop-color="#ffbcab"/><stop offset=".507" stop-color="#ffa394"/><stop offset=".526" stop-color="#ff8f81"/><stop offset=".545" stop-color="#ff7f72"/><stop offset=".564" stop-color="#ff7064"/><stop offset=".583" stop-color="#ff6459"/><stop offset=".602" stop-color="#ff594f"/><stop offset=".621" stop-color="#ff4f46"/><stop offset=".64" stop-color="#ff473e"/><stop offset=".659" stop-color="#ff3f37"/><stop offset=".678" stop-color="#ff3931"/><stop offset=".697" stop-color="#ff332b"/><stop offset=".716" stop-color="#ff2d26"/><stop offset=".735" stop-color="#ff2821"/><stop offset=".754" stop-color="#ff231d"/><stop offset=".773" stop-color="#ff1f19"/><stop offset=".792" stop-color="#ff1b15"/><stop offset=".811" stop-color="#ff1812"/><stop offset=".83" stop-color="#ff140f"/><stop offset=".849" stop-color="#ff110c"/><stop offset=".868" stop-color="#ff0e09"/><stop offset=".887" stop-color="#ff0c07"/><stop offset=".906" stop-color="#ff0904"/><stop offset=".925" stop-color="#ff0702"/><stop offset=".944" stop-color="#ff0400"/><stop offset=".972" stop-color="#ff0100"/><stop offset="1" stop-color="#f00"/></linearGradient>
<linearGradient id="c106" gradientUnits="userSpaceOnUse" x1="1192.8" x2="1755.7"><stop offset="0" stop-color="#00fff8"/><stop offset=".043" stop-color="#00fff8"/><stop offset=".086" stop-color="#00fff8"/><stop offset=".129" stop-color="#00fff7"/><stop offset=".171" stop-color="#00fff7"/><stop offset=".214" stop-color="#00fff7"/><stop offset=".257" stop-color="#00fff6"/><stop offset=".3" stop-color="#00fff6"/><stop offset=".319" stop-color="#1dfff6"/><stop offset=".339" stop-color="#3bfff6"/><stop offset=".358" stop-color="#5bfff5"/><stop offset=".378" stop-color="#7efff5"/><stop offset=".397" stop-color="#a2fff5"/><stop offset=".417" stop-color="#cafff5"/><stop offset=".436" stop-color="#f4fff4"/><stop offset=".441" stop-color="#fffff4"/><stop offset=".461" stop-color="#ffd8ce"/><stop offset=".48" stop-color="#ffb9b1"/><stop offset=".499" stop-color="#ffa099"/><stop offset=".519" stop-color="#ff8c85"/><stop offset=".538" stop-color="#ff7b75"/><stop offset=".558" stop-color="#ff6d67"/><stop offset=".577" stop-color="#ff605b"/><stop offset=".597" stop-color="#ff5551"/><stop offset=".616" stop-color="#ff4c47"/><stop offset=".635" stop-color="#ff433f"/><stop offset=".655" stop-color="#ff3c38"/><stop offset=".674" stop-color="#ff3532"/><stop offset=".694" stop-color="#ff2f2c"/><stop offset=".713" stop-color="#ff2a27"/><stop offset=".732" stop-color="#ff2522"/><stop offset=".752" stop-color="#ff201d"/><stop offset=".771" stop-color="#ff1c19"/><stop offset=".791" stop-color="#ff1816"/><stop offset=".81" stop-color="#ff1512"/><stop offset=".83" stop-color="#ff110f"/><stop offset=".849" stop-color="#ff0e0c"/><stop offset=".868" stop-color="#ff0c09"/><stop offset=".888" stop-color="#ff0907"/><stop offset=".907" stop-color="#ff0604"/><stop offset=".927" stop-color="#ff0402"/><stop offset=".946" stop-color="#ff0200"/><stop offset=".973" stop-color="#f00"/><stop offset="1" stop-color="#f00"/></linearGradient>
<linearGradient id="c107" gradientUnits="userSpaceOnUse" x1="1193.7" x2="1759.9"><stop offset="0" stop-color="#00fffe"/><stop offset=".042" stop-color="#00fffe"/><stop offset=".084" stop-color="#00fffe"/><stop offset=".126" stop-color="#00fffe"/><stop offset=".168" stop-color="#00fffe"/><stop offset=".21" stop-color="#0ff"/><stop offset=".253" stop-color="#0ff"/><stop offset=".295" stop-color="#0ff"/><stop offset=".312" stop-color="#19ffff"/><stop offset=".329" stop-color="#34ffff"/><stop offset=".346" stop-color="#50ffff"/><stop offset=".363" stop-color="#6effff"/><stop offset=".38" stop-color="#8fffff"/><stop offset=".398" stop-color="#b2ffff"/><stop offset=".415" stop-color="#d7ffff"/><stop offset=".433" stop-color="#fff"/><stop offset=".452" stop-color="#ffd8d8"/><stop offset=".47" stop-color="#ffb9ba"/><stop offset=".489" stop-color="#ffa1a1"/><stop offset=".508" stop-color="#ff8c8d"/><stop offset=".527" stop-color="#ff7b7c"/><stop offset=".546" stop-color="#ff6d6d"/><stop offset=".565" stop-color="#ff6061"/><stop offset=".584" stop-color="#ff5656"/><stop offset=".603" stop-color="#ff4c4d"/><stop offset=".622" stop-color="#f44"/><stop offset=".641" stop-color="#ff3c3d"/><stop offset=".659" stop-color="#ff3636"/><stop offset=".678" stop-color="#ff3030"/><stop offset=".697" stop-color="#ff2a2b"/><stop offset=".716" stop-color="#ff2526"/><stop offset=".735" stop-color="#ff2121"/><stop offset=".754" stop-color="#ff1c1d"/><stop offset=".773" stop-color="#ff1919"/><stop offset=".792" stop-color="#ff1516"/><stop offset=".811" stop-color="#ff1212"/><stop offset=".829" stop-color="#ff0f0f"/><stop offset=".848" stop-color="#ff0c0c"/><stop offset=".867" stop-color="#ff090a"/><stop offset=".886" stop-color="#ff0707"/><stop offset=".905" stop-color="#ff0405"/><stop offset=".924" stop-color="#ff0203"/><stop offset=".943" stop-color="#ff0001"/><stop offset=".971" stop-color="#f00"/><stop offset="1" stop-color="#f00"/></linearGradient>
<linearGradient id="c108" gradientUnits="userSpaceOnUse" x1="1194.5" x2="1764.1"><stop offset="0" stop-color="#00faff"/><stop offset=".041" stop-color="#00f9ff"/><stop offset=".083" stop-color="#00f9ff"/><stop offset=".124" stop-color="#00f9ff"/><stop offset=".165" stop-color="#00f8ff"/><stop offset=".207" stop-color="#00f8ff"/><stop offset=".248" stop-color="#00f7ff"/><stop offset=".289" stop-color="#00f7ff"/><stop offset=".309" stop-color="#1df6ff"/><stop offset=".328" stop-color="#3bf6ff"/><stop offset=".347" stop-color="#5bf5ff"/><stop offset=".366" stop-color="#7df5ff"/><stop offset=".386" stop-color="#a2f5ff"/><stop offset=".405" stop-color="#caf4ff"/><stop offset=".424" stop-color="#f4f4ff"/><stop offset=".429" stop-color="#fff4ff"/><stop offset=".448" stop-color="#ffced8"/><stop offset=".467" stop-color="#ffb1ba"/><stop offset=".486" stop-color="#ff99a1"/><stop offset=".505" stop-color="#ff868d"/><stop offset=".524" stop-color="#ff757c"/><stop offset=".543" stop-color="#ff676e"/><stop offset=".562" stop-color="#ff5b61"/><stop offset=".581" stop-color="#ff5157"/><stop offset=".6" stop-color="#ff484d"/><stop offset=".619" stop-color="#ff4045"/><stop offset=".638" stop-color="#ff383d"/><stop offset=".657" stop-color="#ff3237"/><stop offset=".676" stop-color="#ff2c31"/><stop offset=".695" stop-color="#ff272b"/><stop offset=".714" stop-color="#ff2226"/><stop offset=".733" stop-color="#ff1e22"/><stop offset=".752" stop-color="#ff191d"/><stop offset=".771" stop-color="#ff161a"/><stop offset=".79" stop-color="#ff1216"/><stop offset=".809" stop-color="#ff0f13"/><stop offset=".828" stop-color="#ff0c10"/><stop offset=".847" stop-color="#ff090d"/><stop offset=".866" stop-color="#ff070a"/><stop offset=".885" stop-color="#ff0408"/><stop offset=".904" stop-color="#ff0205"/><stop offset=".923" stop-color="#ff0003"/><stop offset=".961" stop-color="#f00"/><stop offset="1" stop-color="#f00"/></linearGradient>
<linearGradient id="c109" gradientUnits="userSpaceOnUse" x1="1195.3" x2="1768.2"><stop offset="0" stop-color="#00f4ff"/><stop offset=".041" stop-color="#00f3ff"/><stop offset=".081" stop-color="#00f3ff"/><stop offset=".122" stop-color="#00f2ff"/><stop offset=".162" stop-color="#00f1ff"/><stop offset=".203" stop-color="#00f0ff"/><stop offset=".244" stop-color="#00efff"/><stop offset=".284" stop-color="#0ef"/><stop offset=".303" stop-color="#1cedff"/><stop offset=".322" stop-color="#39edff"/><stop offset=".341" stop-color="#58ecff"/><stop offset=".359" stop-color="#79ecff"/><stop offset=".378" stop-color="#9cebff"/><stop offset=".397" stop-color="#c1eaff"/><stop offset=".416" stop-color="#e9e9ff"/><stop offset=".425" stop-color="#ffe9ff"/><stop offset=".445" stop-color="#ffc5d9"/><stop offset=".464" stop-color="#ffa9ba"/><stop offset=".483" stop-color="#ff92a2"/><stop offset=".502" stop-color="#ff7f8e"/><stop offset=".521" stop-color="#ff6f7d"/><stop offset=".54" stop-color="#ff626e"/><stop offset=".559" stop-color="#ff5662"/><stop offset=".578" stop-color="#ff4c57"/><stop offset=".597" stop-color="#ff434e"/><stop offset=".616" stop-color="#ff3b45"/><stop offset=".635" stop-color="#ff343e"/><stop offset=".654" stop-color="#ff2e37"/><stop offset=".674" stop-color="#ff2931"/><stop offset=".693" stop-color="#ff232b"/><stop offset=".712" stop-color="#ff1f27"/><stop offset=".731" stop-color="#ff1b22"/><stop offset=".75" stop-color="#ff171e"/><stop offset=".769" stop-color="#ff131a"/><stop offset=".788" stop-color="#ff1016"/><stop offset=".807" stop-color="#ff0d13"/><stop offset=".826" stop-color="#ff0a10"/><stop offset=".845" stop-color="#ff070d"/><stop offset=".864" stop-color="#ff050a"/><stop offset=".883" stop-color="#ff0208"/><stop offset=".902" stop-color="#ff0006"/><stop offset=".935" stop-color="#ff0002"/><stop offset=".967" stop-color="#f00"/><stop offset="1" stop-color="#f00"/></linearGradient>
<linearGradient id="c110" gradientUnits="userSpaceOnUse" x1="1196.2" x2="1772.4"><stop offset="0" stop-color="#0ef"/><stop offset=".04" stop-color="#00edff"/><stop offset=".08" stop-color="#00ecff"/><stop offset=".12" stop-color="#00ebff"/><stop offset=".16" stop-color="#00eaff"/><stop offset=".199" stop-color="#00e9ff"/><stop offset=".239" stop-color="#00e7ff"/><stop offset=".279" stop-color="#00e6ff"/><stop offset=".298" stop-color="#1be5ff"/><stop offset=".316" stop-color="#37e4ff"/><stop offset=".334" stop-color="#54e3ff"/><stop offset=".353" stop-color="#74e3ff"/><stop offset=".371" stop-color="#96e2ff"/><stop offset=".389" stop-color="#b9e1ff"/><stop offset=".408" stop-color="#dfdfff"/><stop offset=".422" stop-color="#ffdfff"/><stop offset=".44" stop-color="#ffbdda"/><stop offset=".459" stop-color="#ffa3bd"/><stop offset=".477" stop-color="#ff8da5"/><stop offset=".496" stop-color="#ff7b91"/><stop offset=".514" stop-color="#ff6c80"/><stop offset=".532" stop-color="#ff5f72"/><stop offset=".551" stop-color="#ff5466"/><stop offset=".569" stop-color="#ff4a5b"/><stop offset=".588" stop-color="#ff4251"/><stop offset=".606" stop-color="#ff3a49"/><stop offset=".625" stop-color="#ff3341"/><stop offset=".643" stop-color="#ff2d3b"/><stop offset=".661" stop-color="#ff2834"/><stop offset=".68" stop-color="#ff232f"/><stop offset=".698" stop-color="#ff1e2a"/><stop offset=".717" stop-color="#ff1a25"/><stop offset=".735" stop-color="#ff1621"/><stop offset=".754" stop-color="#ff131d"/><stop offset=".772" stop-color="#ff0f19"/><stop offset=".79" stop-color="#ff0c16"/><stop offset=".809" stop-color="#ff0a13"/><stop offset=".827" stop-color="#ff0710"/><stop offset=".846" stop-color="#ff040d"/><stop offset=".864" stop-color="#ff020b"/><stop offset=".883" stop-color="#ff0008"/><stop offset=".922" stop-color="#ff0004"/><stop offset=".961" stop-color="#f00"/><stop offset="1" stop-color="#f00"/></linearGradient>
<linearGradient id="c111" gradientUnits="userSpaceOnUse" x1="1197" x2="1776.6"><stop offset="0" stop-color="#00e8ff"/><stop offset=".039" stop-color="#00e7ff"/><stop offset=".078" stop-color="#00e6ff"/><stop offset=".117" stop-color="#00e5ff"/><stop offset=".157" stop-color="#00e3ff"/><stop offset=".196" stop-color="#00e2ff"/><stop offset=".235" stop-color="#00e0ff"/><stop offset=".274" stop-color="#00deff"/><stop offset=".292" stop-color="#1addff"/><stop offset=".31" stop-color="#35dcff"/><stop offset=".328" stop-color="#51dbff"/><stop offset=".346" stop-color="#70daff"/><stop offset=".364" stop-color="#90d9ff"/><stop offset=".381" stop-color="#b2d7ff"/><stop offset=".399" stop-color="#d6d6ff"/><stop offset=".418" stop-color="#ffd4ff"/><stop offset=".437" stop-color="#ffb4da"/><stop offset=".455" stop-color="#ff9bbd"/><stop offset=".474" stop-color="#ff86a5"/><stop offset=".492" stop-color="#ff7591"/><stop offset=".511" stop-color="#ff6681"/><stop offset=".529" stop-color="#ff5a72"/><stop offset=".548" stop-color="#ff4f66"/><stop offset=".567" stop-color="#ff465b"/><stop offset=".585" stop-color="#ff3e52"/><stop offset=".604" stop-color="#ff3649"/><stop offset=".622" stop-color="#ff3042"/><stop offset=".641" stop-color="#ff2a3b"/><stop offset=".659" stop-color="#ff2435"/><stop offset=".678" stop-color="#ff202f"/><stop offset=".696" stop-color="#ff1b2a"/><stop offset=".715" stop-color="#ff1726"/><stop offset=".733" stop-color="#ff1321"/><stop offset=".752" stop-color="#ff101d"/><stop offset=".77" stop-color="#ff0d1a"/><stop offset=".789" stop-color="#ff0a16"/><stop offset=".807" stop-color="#ff0713"/><stop offset=".826" stop-color="#ff0510"/><stop offset=".844" stop-color="#ff020d"/><stop offset=".863" stop-color="#ff000b"/><stop offset=".897" stop-color="#ff0007"/><stop offset=".931" stop-color="#ff0003"/><stop offset=".966" stop-color="#f00"/><stop offset="1" stop-color="#f00"/></linearGradient>
<linearGradient id="c112" gradientUnits="userSpaceOnUse" x1="1197.9" x2="1780.8"><stop offset="0" stop-color="#00e2ff"/><stop offset=".038" stop-color="#00e1ff"/><stop offset=".077" stop-color="#00e0ff"/><stop offset=".115" stop-color="#00deff"/><stop offset=".154" stop-color="#00dcff"/><stop offset=".192" stop-color="#00dbff"/><stop offset=".231" stop-color="#00d9ff"/><stop offset=".269" stop-color="#00d6ff"/><stop offset=".286" stop-color="#19d5ff"/><stop offset=".304" stop-color="#33d4ff"/><stop offset=".321" stop-color="#4ed3ff"/><stop offset=".339" stop-color="#6bd1ff"/><stop offset=".356" stop-color="#8ad0ff"/><stop offset=".374" stop-color="#abcfff"/><stop offset=".391" stop-color="#cdcdff"/><stop offset=".403" stop-color="#e5ccff"/><stop offset=".415" stop-color="#ffcbff"/><stop offset=".433" stop-color="#ffacda"/><stop offset=".452" stop-color="#ff93bd"/><stop offset=".471" stop-color="#ff7fa5"/><stop offset=".489" stop-color="#ff6f92"/><stop offset=".508" stop-color="#ff6181"/><stop offset=".527" stop-color="#ff5573"/><stop offset=".545" stop-color="#ff4a66"/><stop offset=".564" stop-color="#ff415b"/><stop offset=".583" stop-color="#ff3952"/><stop offset=".601" stop-color="#ff324a"/><stop offset=".62" stop-color="#ff2c42"/><stop offset=".638" stop-color="#ff263b"/><stop offset=".657" stop-color="#ff2135"/><stop offset=".676" stop-color="#ff1c30"/><stop offset=".694" stop-color="#ff182a"/><stop offset=".713" stop-color="#ff1426"/><stop offset=".732" stop-color="#f12"/><stop offset=".75" stop-color="#ff0d1e"/><stop offset=".769" stop-color="#ff0a1a"/><stop offset=".788" stop-color="#ff0717"/><stop offset=".806" stop-color="#ff0513"/><stop offset=".825" stop-color="#ff0210"/><stop offset=".844" stop-color="#ff000e"/><stop offset=".883" stop-color="#ff0008"/><stop offset=".922" stop-color="#ff0004"/><stop offset=".961" stop-color="#f00"/><stop offset="1" stop-color="#f00"/></linearGradient>
<linearGradient id="c113" gradientUnits="userSpaceOnUse" x1="1198.8" x2="1785"><stop offset="0" stop-color="#0df"/><stop offset=".044" stop-color="#00dbff"/><stop offset=".088" stop-color="#00d9ff"/><stop offset=".132" stop-color="#00d7ff"/><stop offset=".176" stop-color="#00d5ff"/><stop offset=".22" stop-color="#00d2ff"/><stop offset=".264" stop-color="#00cfff"/><stop offset=".281" stop-color="#18ceff"/><stop offset=".298" stop-color="#31ccff"/><stop offset=".315" stop-color="#4bcbff"/><stop offset=".332" stop-color="#67c9ff"/><stop offset=".349" stop-color="#85c8ff"/><stop offset=".366" stop-color="#a4c6ff"/><stop offset=".383" stop-color="#c4c4ff"/><stop offset=".397" stop-color="#e1c3ff"/><stop offset=".411" stop-color="#ffc1ff"/><stop offset=".429" stop-color="#ffa5dc"/><stop offset=".447" stop-color="#ff8ec0"/><stop offset=".465" stop-color="#ff7ba8"/><stop offset=".483" stop-color="#ff6b95"/><stop offset=".501" stop-color="#ff5e85"/><stop offset=".519" stop-color="#ff5376"/><stop offset=".537" stop-color="#ff496a"/><stop offset=".555" stop-color="#ff405f"/><stop offset=".573" stop-color="#ff3856"/><stop offset=".591" stop-color="#ff314d"/><stop offset=".609" stop-color="#ff2b46"/><stop offset=".627" stop-color="#ff263f"/><stop offset=".645" stop-color="#ff2139"/><stop offset=".663" stop-color="#ff1c33"/><stop offset=".681" stop-color="#ff182e"/><stop offset=".699" stop-color="#ff1429"/><stop offset=".717" stop-color="#ff1025"/><stop offset=".735" stop-color="#ff0d21"/><stop offset=".752" stop-color="#ff0a1d"/><stop offset=".77" stop-color="#ff071a"/><stop offset=".788" stop-color="#ff0516"/><stop offset=".806" stop-color="#ff0213"/><stop offset=".824" stop-color="#f01"/><stop offset=".868" stop-color="#ff000a"/><stop offset=".912" stop-color="#ff0005"/><stop offset=".956" stop-color="#f00"/><stop offset="1" stop-color="#f00"/></linearGradient>
<linearGradient id="c114" gradientUnits="userSpaceOnUse" x1="1199.7" x2="1789.2"><stop offset="0" stop-color="#00d7ff"/><stop offset=".043" stop-color="#00d5ff"/><stop offset=".086" stop-color="#00d3ff"/><stop offset=".13" stop-color="#00d1ff"/><stop offset=".173" stop-color="#00ceff"/><stop offset=".216" stop-color="#00cbff"/><stop offset=".259" stop-color="#00c8ff"/><stop offset=".276" stop-color="#17c6ff"/><stop offset=".292" stop-color="#2fc5ff"/><stop offset=".309" stop-color="#49c3ff"/><stop offset=".325" stop-color="#63c2ff"/><stop offset=".342" stop-color="#7fc0ff"/><stop offset=".359" stop-color="#9dbeff"/><stop offset=".375" stop-color="#bcbcff"/><stop offset=".392" stop-color="#ddbaff"/><stop offset=".408" stop-color="#ffb8ff"/><stop offset=".426" stop-color="#ff9ddc"/><stop offset=".444" stop-color="#ff87c0"/><stop offset=".462" stop-color="#ff75a9"/><stop offset=".48" stop-color="#ff6595"/><stop offset=".498" stop-color="#ff5985"/><stop offset=".516" stop-color="#ff4e77"/><stop offset=".534" stop-color="#ff446a"/><stop offset=".552" stop-color="#ff3b60"/><stop offset=".57" stop-color="#ff3456"/><stop offset=".588" stop-color="#ff2d4e"/><stop offset=".607" stop-color="#ff2746"/><stop offset=".625" stop-color="#ff223f"/><stop offset=".643" stop-color="#ff1d39"/><stop offset=".661" stop-color="#ff1933"/><stop offset=".679" stop-color="#ff152e"/><stop offset=".697" stop-color="#ff112a"/><stop offset=".715" stop-color="#ff0e25"/><stop offset=".733" stop-color="#ff0b21"/><stop offset=".751" stop-color="#ff081d"/><stop offset=".769" stop-color="#ff051a"/><stop offset=".787" stop-color="#ff0217"/><stop offset=".805" stop-color="#ff0014"/><stop offset=".844" stop-color="#ff000e"/><stop offset=".883" stop-color="#ff0009"/><stop offset=".922" stop-color="#ff0004"/><stop offset=".961" stop-color="#f00"/><stop offset="1" stop-color="#f00"/></linearGradient>
<linearGradient id="c115" gradientUnits="userSpaceOnUse" x1="1200.6" x2="1793.4"><stop offset="0" stop-color="#00d2ff"/><stop offset=".042" stop-color="#00d0ff"/><stop offset=".085" stop-color="#00cdff"/><stop offset=".127" stop-color="#00cbff"/><stop offset=".169" stop-color="#00c8ff"/><stop offset=".212" stop-color="#00c4ff"/><stop offset=".254" stop-color="#00c1ff"/><stop offset=".27" stop-color="#16bfff"/><stop offset=".287" stop-color="#2dbeff"/><stop offset=".303" stop-color="#46bcff"/><stop offset=".319" stop-color="#5fbaff"/><stop offset=".335" stop-color="#7ab8ff"/><stop offset=".351" stop-color="#97b7ff"/><stop offset=".367" stop-color="#b5b5ff"/><stop offset=".386" stop-color="#d9b2ff"/><stop offset=".404" stop-color="#ffafff"/><stop offset=".423" stop-color="#ff95dc"/><stop offset=".441" stop-color="#ff80c0"/><stop offset=".459" stop-color="#ff6ea9"/><stop offset=".477" stop-color="#ff6095"/><stop offset=".495" stop-color="#ff5385"/><stop offset=".514" stop-color="#ff4977"/><stop offset=".532" stop-color="#ff3f6b"/><stop offset=".55" stop-color="#ff3760"/><stop offset=".568" stop-color="#ff3056"/><stop offset=".586" stop-color="#ff2a4e"/><stop offset=".605" stop-color="#ff2446"/><stop offset=".623" stop-color="#ff1f3f"/><stop offset=".641" stop-color="#ff1a39"/><stop offset=".659" stop-color="#ff1634"/><stop offset=".677" stop-color="#ff122e"/><stop offset=".696" stop-color="#ff0e2a"/><stop offset=".714" stop-color="#ff0b25"/><stop offset=".732" stop-color="#ff0821"/><stop offset=".75" stop-color="#ff051e"/><stop offset=".768" stop-color="#ff021a"/><stop offset=".787" stop-color="#ff0017"/><stop offset=".829" stop-color="#ff0010"/><stop offset=".872" stop-color="#ff000a"/><stop offset=".915" stop-color="#ff0005"/><stop offset=".957" stop-color="#ff0001"/><stop offset="1" stop-color="#f00"/></linearGradient>
<linearGradient id="c116" gradientUnits="userSpaceOnUse" x1="1201.5" x2="1797.6"><stop offset="0" stop-color="#0cf"/><stop offset=".042" stop-color="#00caff"/><stop offset=".083" stop-color="#00c7ff"/><stop offset=".125" stop-color="#00c5ff"/><stop offset=".166" stop-color="#00c1ff"/><stop offset=".208" stop-color="#00beff"/><stop offset=".249" stop-color="#00baff"/><stop offset=".268" stop-color="#19b8ff"/><stop offset=".286" stop-color="#33b6ff"/><stop offset=".304" stop-color="#4fb4ff"/><stop offset=".323" stop-color="#6db2ff"/><stop offset=".341" stop-color="#8cb0ff"/><stop offset=".36" stop-color="#adadff"/><stop offset=".373" stop-color="#c7abff"/><stop offset=".387" stop-color="#e2a9ff"/><stop offset=".401" stop-color="#ffa7ff"/><stop offset=".419" stop-color="#ff8ddc"/><stop offset=".438" stop-color="#ff79c0"/><stop offset=".456" stop-color="#ff68a9"/><stop offset=".474" stop-color="#ff5a96"/><stop offset=".493" stop-color="#ff4e85"/><stop offset=".511" stop-color="#f47"/><stop offset=".529" stop-color="#ff3b6b"/><stop offset=".548" stop-color="#ff3360"/><stop offset=".566" stop-color="#ff2c56"/><stop offset=".584" stop-color="#ff264e"/><stop offset=".603" stop-color="#ff2046"/><stop offset=".621" stop-color="#ff1b40"/><stop offset=".639" stop-color="#ff1739"/><stop offset=".658" stop-color="#ff1334"/><stop offset=".676" stop-color="#ff0f2f"/><stop offset=".695" stop-color="#ff0b2a"/><stop offset=".713" stop-color="#ff0825"/><stop offset=".731" stop-color="#ff0521"/><stop offset=".75" stop-color="#ff031e"/><stop offset=".768" stop-color="#ff001a"/><stop offset=".807" stop-color="#ff0014"/><stop offset=".845" stop-color="#ff000e"/><stop offset=".884" stop-color="#ff0009"/><stop offset=".923" stop-color="#ff0004"/><stop offset=".961" stop-color="#ff0001"/><stop offset="1" stop-color="#f00"/></linearGradient>
<linearGradient id="c117" gradientUnits="userSpaceOnUse" x1="1202.4" x2="1801.8"><stop offset="0" stop-color="#00c7ff"/><stop offset=".041" stop-color="#00c5ff"/><stop offset=".081" stop-color="#00c2ff"/><stop offset=".122" stop-color="#00bfff"/><stop offset=".163" stop-color="#0bf"/><stop offset=".204" stop-color="#00b8ff"/><stop offset=".244" stop-color="#00b3ff"/><stop offset=".262" stop-color="#18b1ff"/><stop offset=".28" stop-color="#32afff"/><stop offset=".298" stop-color="#4cadff"/><stop offset=".316" stop-color="#69abff"/><stop offset=".334" stop-color="#86a8ff"/><stop offset=".352" stop-color="#a6a6ff"/><stop offset=".367" stop-color="#c2a4ff"/><stop offset=".382" stop-color="#e0a1ff"/><stop offset=".397" stop-color="#ff9fff"/><stop offset=".415" stop-color="#ff87de"/><stop offset=".433" stop-color="#ff74c3"/><stop offset=".45" stop-color="#ff64ac"/><stop offset=".468" stop-color="#ff5799"/><stop offset=".486" stop-color="#ff4c89"/><stop offset=".503" stop-color="#ff427b"/><stop offset=".521" stop-color="#ff396f"/><stop offset=".538" stop-color="#ff3264"/><stop offset=".556" stop-color="#ff2b5b"/><stop offset=".574" stop-color="#ff2552"/><stop offset=".591" stop-color="#ff204a"/><stop offset=".609" stop-color="#ff1b44"/><stop offset=".626" stop-color="#ff163d"/><stop offset=".644" stop-color="#ff1238"/><stop offset=".662" stop-color="#ff0f32"/><stop offset=".679" stop-color="#ff0b2e"/><stop offset=".697" stop-color="#ff0829"/><stop offset=".714" stop-color="#ff0525"/><stop offset=".732" stop-color="#ff0221"/><stop offset=".75" stop-color="#ff001e"/><stop offset=".791" stop-color="#ff0016"/><stop offset=".833" stop-color="#ff0010"/><stop offset=".875" stop-color="#ff000a"/><stop offset=".917" stop-color="#ff0005"/><stop offset=".958" stop-color="#ff0001"/><stop offset="1" stop-color="#f00"/></linearGradient>
<linearGradient id="c118" gradientUnits="userSpaceOnUse" x1="1203.4" x2="1806"><stop offset="0" stop-color="#00c2ff"/><stop offset=".04" stop-color="#00bfff"/><stop offset=".08" stop-color="#00bcff"/><stop offset=".12" stop-color="#00b9ff"/><stop offset=".16" stop-color="#00b5ff"/><stop offset=".2" stop-color="#00b1ff"/><stop offset=".24" stop-color="#00adff"/><stop offset=".257" stop-color="#17abff"/><stop offset=".275" stop-color="#30a9ff"/><stop offset=".292" stop-color="#49a7ff"/><stop offset=".309" stop-color="#64a4ff"/><stop offset=".327" stop-color="#81a2ff"/><stop offset=".344" stop-color="#9f9fff"/><stop offset=".361" stop-color="#bd9cff"/><stop offset=".378" stop-color="#d9f"/><stop offset=".394" stop-color="#ff96ff"/><stop offset=".412" stop-color="#ff80de"/><stop offset=".43" stop-color="#ff6dc3"/><stop offset=".447" stop-color="#ff5eac"/><stop offset=".465" stop-color="#ff5199"/><stop offset=".483" stop-color="#ff4689"/><stop offset=".501" stop-color="#ff3d7b"/><stop offset=".518" stop-color="#ff356f"/><stop offset=".536" stop-color="#ff2d64"/><stop offset=".554" stop-color="#ff275b"/><stop offset=".572" stop-color="#ff2152"/><stop offset=".589" stop-color="#ff1c4b"/><stop offset=".607" stop-color="#ff1744"/><stop offset=".625" stop-color="#ff133d"/><stop offset=".643" stop-color="#ff0f38"/><stop offset=".66" stop-color="#ff0c32"/><stop offset=".678" stop-color="#ff082e"/><stop offset=".696" stop-color="#ff0529"/><stop offset=".714" stop-color="#ff0325"/><stop offset=".731" stop-color="#ff0021"/><stop offset=".77" stop-color="#ff001a"/><stop offset=".808" stop-color="#ff0014"/><stop offset=".847" stop-color="#ff000e"/><stop offset=".885" stop-color="#ff0009"/><stop offset=".923" stop-color="#ff0005"/><stop offset=".962" stop-color="#ff0001"/><stop offset="1" stop-color="#f00"/></linearGradient>
<linearGradient id="c119" gradientUnits="userSpaceOnUse" x1="1204.3" x2="1810.2"><stop offset="0" stop-color="#00bdff"/><stop offset=".039" stop-color="#00baff"/><stop offset=".078" stop-color="#00b7ff"/><stop offset=".117" stop-color="#00b3ff"/><stop offset=".157" stop-color="#00b0ff"/><stop offset=".196" stop-color="#00abff"/><stop offset=".235" stop-color="#00a7ff"/><stop offset=".252" stop-color="#16a5ff"/><stop offset=".269" stop-color="#2ea3ff"/><stop offset=".286" stop-color="#47a0ff"/><stop offset=".303" stop-color="#609eff"/><stop offset=".32" stop-color="#7c9bff"/><stop offset=".337" stop-color="#9898ff"/><stop offset=".355" stop-color="#b995ff"/><stop offset=".373" stop-color="#db92ff"/><stop offset=".391" stop-color="#ff8fff"/><stop offset=".409" stop-color="#ff79de"/><stop offset=".427" stop-color="#ff67c3"/><stop offset=".445" stop-color="#ff58ac"/><stop offset=".462" stop-color="#ff4c99"/><stop offset=".48" stop-color="#ff4189"/><stop offset=".498" stop-color="#ff387b"/><stop offset=".516" stop-color="#ff306f"/><stop offset=".534" stop-color="#ff2964"/><stop offset=".552" stop-color="#ff235b"/><stop offset=".57" stop-color="#ff1d52"/><stop offset=".588" stop-color="#ff184a"/><stop offset=".606" stop-color="#ff1444"/><stop offset=".624" stop-color="#ff103d"/><stop offset=".642" stop-color="#ff0c38"/><stop offset=".66" stop-color="#ff0932"/><stop offset=".678" stop-color="#ff062e"/><stop offset=".696" stop-color="#ff0329"/><stop offset=".713" stop-color="#ff0025"/><stop offset=".754" stop-color="#ff001d"/><stop offset=".795" stop-color="#ff0016"/><stop offset=".836" stop-color="#ff0010"/><stop offset=".877" stop-color="#ff000a"/><stop offset=".918" stop-color="#ff0005"/><stop offset=".959" stop-color="#ff0001"/><stop offset="1" stop-color="#f00"/></linearGradient>
<linearGradient id="c120" gradientUnits="userSpaceOnUse" x1="1205.2" x2="1814.4"><stop offset="0" stop-color="#00b8ff"/><stop offset=".038" stop-color="#00b5ff"/><stop offset=".077" stop-color="#00b1ff"/><stop offset=".115" stop-color="#00aeff"/><stop offset=".153" stop-color="#0af"/><stop offset=".192" stop-color="#00a6ff"/><stop offset=".23" stop-color="#00a1ff"/><stop offset=".247" stop-color="#169fff"/><stop offset=".263" stop-color="#2c9cff"/><stop offset=".28" stop-color="#449aff"/><stop offset=".296" stop-color="#5d97ff"/><stop offset=".313" stop-color="#7795ff"/><stop offset=".329" stop-color="#9292ff"/><stop offset=".344" stop-color="#ab90ff"/><stop offset=".358" stop-color="#c68dff"/><stop offset=".373" stop-color="#e28aff"/><stop offset=".387" stop-color="#ff87ff"/><stop offset=".405" stop-color="#ff73df"/><stop offset=".422" stop-color="#ff63c5"/><stop offset=".439" stop-color="#ff55af"/><stop offset=".456" stop-color="#ff499d"/><stop offset=".473" stop-color="#ff3f8d"/><stop offset=".49" stop-color="#ff367f"/><stop offset=".507" stop-color="#ff2f73"/><stop offset=".524" stop-color="#ff2869"/><stop offset=".542" stop-color="#ff225f"/><stop offset=".559" stop-color="#ff1d57"/><stop offset=".576" stop-color="#ff184f"/><stop offset=".593" stop-color="#ff1448"/><stop offset=".61" stop-color="#ff1042"/><stop offset=".627" stop-color="#ff0c3c"/><stop offset=".644" stop-color="#ff0937"/><stop offset=".661" stop-color="#ff0532"/><stop offset=".679" stop-color="#ff032d"/><stop offset=".696" stop-color="#ff0029"/><stop offset=".734" stop-color="#ff0021"/><stop offset=".772" stop-color="#ff001a"/><stop offset=".81" stop-color="#ff0013"/><stop offset=".848" stop-color="#ff000e"/><stop offset=".886" stop-color="#ff0009"/><stop offset=".924" stop-color="#ff0005"/><stop offset=".962" stop-color="#ff0001"/><stop offset="1" stop-color="#f00"/></linearGradient>
<linearGradient id="c121" gradientUnits="userSpaceOnUse" x1="1206.2" x2="1814.4"><stop offset="0" stop-color="#00b3ff"/><stop offset=".038" stop-color="#00b0ff"/><stop offset=".076" stop-color="#00acff"/><stop offset=".114" stop-color="#00a8ff"/><stop offset=".151" stop-color="#00a4ff"/><stop offset=".189" stop-color="#00a0ff"/><stop offset=".227" stop-color="#009bff"/><stop offset=".243" stop-color="#1599ff"/><stop offset=".259" stop-color="#2a96ff"/><stop offset=".275" stop-color="#4194ff"/><stop offset=".292" stop-color="#5991ff"/><stop offset=".308" stop-color="#728fff"/><stop offset=".324" stop-color="#8c8cff"/><stop offset=".34" stop-color="#a789ff"/><stop offset=".355" stop-color="#c386ff"/><stop offset=".371" stop-color="#e083ff"/><stop offset=".387" stop-color="#ff80ff"/><stop offset=".404" stop-color="#ff6cdf"/><stop offset=".422" stop-color="#ff5cc5"/><stop offset=".439" stop-color="#ff4faf"/><stop offset=".456" stop-color="#ff449d"/><stop offset=".474" stop-color="#ff3a8d"/><stop offset=".491" stop-color="#ff327f"/><stop offset=".509" stop-color="#ff2b73"/><stop offset=".526" stop-color="#ff2468"/><stop offset=".543" stop-color="#ff1e5f"/><stop offset=".561" stop-color="#ff1956"/><stop offset=".578" stop-color="#ff144f"/><stop offset=".596" stop-color="#ff1048"/><stop offset=".613" stop-color="#ff0c42"/><stop offset=".63" stop-color="#ff093c"/><stop offset=".648" stop-color="#ff0636"/><stop offset=".665" stop-color="#ff0332"/><stop offset=".683" stop-color="#ff002d"/><stop offset=".722" stop-color="#ff0024"/><stop offset=".762" stop-color="#ff001c"/><stop offset=".802" stop-color="#ff0016"/><stop offset=".841" stop-color="#ff0010"/><stop offset=".881" stop-color="#ff000b"/><stop offset=".921" stop-color="#ff0006"/><stop offset=".96" stop-color="#ff0002"/><stop offset="1" stop-color="#f00"/></linearGradient>
<linearGradient id="c122" gradientUnits="userSpaceOnUse" x1="1207.2" x2="1805.5"><stop offset="0" stop-color="#00aeff"/><stop offset=".038" stop-color="#0af"/><stop offset=".076" stop-color="#00a7ff"/><stop offset=".114" stop-color="#00a3ff"/><stop offset=".151" stop-color="#009fff"/><stop offset=".189" stop-color="#009aff"/><stop offset=".227" stop-color="#0095ff"/><stop offset=".243" stop-color="#1493ff"/><stop offset=".259" stop-color="#2991ff"/><stop offset=".275" stop-color="#3f8eff"/><stop offset=".291" stop-color="#558cff"/><stop offset=".307" stop-color="#6d89ff"/><stop offset=".323" stop-color="#8686ff"/><stop offset=".341" stop-color="#a283ff"/><stop offset=".358" stop-color="#bf80ff"/><stop offset=".375" stop-color="#de7cff"/><stop offset=".392" stop-color="#ff78ff"/><stop offset=".41" stop-color="#ff66df"/><stop offset=".428" stop-color="#ff56c5"/><stop offset=".446" stop-color="#ff4aaf"/><stop offset=".464" stop-color="#ff3f9d"/><stop offset=".482" stop-color="#ff368d"/><stop offset=".5" stop-color="#ff2d7f"/><stop offset=".518" stop-color="#ff2673"/><stop offset=".536" stop-color="#ff2068"/><stop offset=".554" stop-color="#ff1b5f"/><stop offset=".572" stop-color="#ff1656"/><stop offset=".59" stop-color="#ff114f"/><stop offset=".608" stop-color="#ff0d48"/><stop offset=".626" stop-color="#ff0941"/><stop offset=".644" stop-color="#ff063c"/><stop offset=".662" stop-color="#ff0336"/><stop offset=".68" stop-color="#ff0031"/><stop offset=".72" stop-color="#ff0028"/><stop offset=".76" stop-color="#ff0020"/><stop offset=".8" stop-color="#ff0019"/><stop offset=".84" stop-color="#ff0013"/><stop offset=".88" stop-color="#ff000d"/><stop offset=".92" stop-color="#ff0009"/><stop offset=".96" stop-color="#ff0004"/><stop offset="1" stop-color="#ff0001"/></linearGradient>
<linearGradient id="c123" gradientUnits="userSpaceOnUse" x1="1208.2" x2="1796.5"><stop offset="0" stop-color="#00a9ff"/><stop offset=".038" stop-color="#00a6ff"/><stop offset=".076" stop-color="#00a2ff"/><stop offset=".114" stop-color="#009eff"/><stop offset=".152" stop-color="#009aff"/><stop offset=".19" stop-color="#0095ff"/><stop offset=".227" stop-color="#0090ff"/><stop offset=".243" stop-color="#138eff"/><stop offset=".259" stop-color="#278bff"/><stop offset=".275" stop-color="#3c89ff"/><stop offset=".291" stop-color="#5286ff"/><stop offset=".307" stop-color="#6983ff"/><stop offset=".323" stop-color="#8181ff"/><stop offset=".342" stop-color="#9e7dff"/><stop offset=".36" stop-color="#bc79ff"/><stop offset=".379" stop-color="#dd76ff"/><stop offset=".397" stop-color="#ff71ff"/><stop offset=".416" stop-color="#ff5fdf"/><stop offset=".434" stop-color="#ff51c5"/><stop offset=".453" stop-color="#ff44af"/><stop offset=".472" stop-color="#ff3a9c"/><stop offset=".49" stop-color="#ff318c"/><stop offset=".509" stop-color="#ff297f"/><stop offset=".528" stop-color="#ff2273"/><stop offset=".546" stop-color="#ff1c68"/><stop offset=".565" stop-color="#ff175e"/><stop offset=".583" stop-color="#ff1256"/><stop offset=".602" stop-color="#ff0e4e"/><stop offset=".621" stop-color="#ff0a47"/><stop offset=".639" stop-color="#ff0641"/><stop offset=".658" stop-color="#ff033b"/><stop offset=".677" stop-color="#ff0036"/><stop offset=".717" stop-color="#ff002c"/><stop offset=".757" stop-color="#ff0023"/><stop offset=".798" stop-color="#ff001c"/><stop offset=".838" stop-color="#ff0016"/><stop offset=".879" stop-color="#ff0010"/><stop offset=".919" stop-color="#ff000b"/><stop offset=".96" stop-color="#ff0007"/><stop offset="1" stop-color="#ff0003"/></linearGradient>
<linearGradient id="c124" gradientUnits="userSpaceOnUse" x1="1209.2" x2="1787.5"><stop offset="0" stop-color="#00a4ff"/><stop offset=".038" stop-color="#00a1ff"/><stop offset=".076" stop-color="#009dff"/><stop offset=".114" stop-color="#09f"/><stop offset=".152" stop-color="#0094ff"/><stop offset=".19" stop-color="#0090ff"/><stop offset=".228" stop-color="#008aff"/><stop offset=".247" stop-color="#1688ff"/><stop offset=".266" stop-color="#2e85ff"/><stop offset=".285" stop-color="#4682ff"/><stop offset=".303" stop-color="#607eff"/><stop offset=".322" stop-color="#7b7bff"/><stop offset=".338" stop-color="#9378ff"/><stop offset=".355" stop-color="#ac75ff"/><stop offset=".371" stop-color="#c772ff"/><stop offset=".387" stop-color="#e26eff"/><stop offset=".403" stop-color="#ff6bff"/><stop offset=".421" stop-color="#ff5ae1"/><stop offset=".439" stop-color="#ff4dc8"/><stop offset=".457" stop-color="#ff41b3"/><stop offset=".475" stop-color="#ff37a1"/><stop offset=".493" stop-color="#ff2f91"/><stop offset=".511" stop-color="#ff2883"/><stop offset=".529" stop-color="#ff2177"/><stop offset=".547" stop-color="#ff1b6d"/><stop offset=".565" stop-color="#ff1663"/><stop offset=".583" stop-color="#ff115b"/><stop offset=".601" stop-color="#ff0d53"/><stop offset=".619" stop-color="#ff0a4c"/><stop offset=".637" stop-color="#ff0646"/><stop offset=".655" stop-color="#ff0340"/><stop offset=".673" stop-color="#ff003b"/><stop offset=".714" stop-color="#ff0030"/><stop offset=".755" stop-color="#ff0027"/><stop offset=".796" stop-color="#ff001f"/><stop offset=".837" stop-color="#ff0019"/><stop offset=".878" stop-color="#ff0013"/><stop offset=".918" stop-color="#ff000e"/><stop offset=".959" stop-color="#ff0009"/><stop offset="1" stop-color="#ff0005"/></linearGradient>
<linearGradient id="c125" gradientUnits="userSpaceOnUse" x1="1210.2" x2="1778.5"><stop offset="0" stop-color="#009fff"/><stop offset=".046" stop-color="#009bff"/><stop offset=".091" stop-color="#0096ff"/><stop offset=".137" stop-color="#0091ff"/><stop offset=".182" stop-color="#008cff"/><stop offset=".228" stop-color="#0085ff"/><stop offset=".247" stop-color="#1582ff"/><stop offset=".265" stop-color="#2c80ff"/><stop offset=".284" stop-color="#437cff"/><stop offset=".303" stop-color="#5c79ff"/><stop offset=".322" stop-color="#7676ff"/><stop offset=".339" stop-color="#8f73ff"/><stop offset=".356" stop-color="#a96fff"/><stop offset=".374" stop-color="#c46cff"/><stop offset=".391" stop-color="#e168ff"/><stop offset=".408" stop-color="#ff64ff"/><stop offset=".427" stop-color="#ff54e1"/><stop offset=".446" stop-color="#ff47c8"/><stop offset=".464" stop-color="#ff3cb2"/><stop offset=".483" stop-color="#ff32a0"/><stop offset=".502" stop-color="#ff2a91"/><stop offset=".52" stop-color="#ff2383"/><stop offset=".539" stop-color="#ff1d77"/><stop offset=".558" stop-color="#ff176c"/><stop offset=".577" stop-color="#ff1263"/><stop offset=".595" stop-color="#ff0e5a"/><stop offset=".614" stop-color="#ff0a53"/><stop offset=".633" stop-color="#ff064c"/><stop offset=".651" stop-color="#ff0345"/><stop offset=".67" stop-color="#ff0040"/><stop offset=".711" stop-color="#ff0034"/><stop offset=".753" stop-color="#ff002b"/><stop offset=".794" stop-color="#ff0023"/><stop offset=".835" stop-color="#ff001c"/><stop offset=".876" stop-color="#ff0016"/><stop offset=".918" stop-color="#ff0010"/><stop offset=".959" stop-color="#ff000c"/><stop offset="1" stop-color="#ff0007"/></linearGradient>
<linearGradient id="c126" gradientUnits="userSpaceOnUse" x1="1211.2" x2="1769.5"><stop offset="0" stop-color="#009bff"/><stop offset=".046" stop-color="#0096ff"/><stop offset=".091" stop-color="#0091ff"/><stop offset=".137" stop-color="#008cff"/><stop offset=".182" stop-color="#0086ff"/><stop offset=".228" stop-color="#0080ff"/><stop offset=".247" stop-color="#157dff"/><stop offset=".265" stop-color="#2a7aff"/><stop offset=".284" stop-color="#4177ff"/><stop offset=".303" stop-color="#5874ff"/><stop offset=".321" stop-color="#7171ff"/><stop offset=".34" stop-color="#8b6dff"/><stop offset=".358" stop-color="#a56aff"/><stop offset=".377" stop-color="#c266ff"/><stop offset=".396" stop-color="#e062ff"/><stop offset=".414" stop-color="#ff5eff"/><stop offset=".434" stop-color="#ff4ee0"/><stop offset=".453" stop-color="#ff41c7"/><stop offset=".472" stop-color="#ff37b2"/><stop offset=".492" stop-color="#ff2ea0"/><stop offset=".511" stop-color="#ff2690"/><stop offset=".531" stop-color="#ff1f83"/><stop offset=".55" stop-color="#ff1977"/><stop offset=".57" stop-color="#ff146c"/><stop offset=".589" stop-color="#ff0f62"/><stop offset=".608" stop-color="#ff0b5a"/><stop offset=".628" stop-color="#ff0752"/><stop offset=".647" stop-color="#ff034b"/><stop offset=".667" stop-color="#ff0045"/><stop offset=".708" stop-color="#ff0039"/><stop offset=".75" stop-color="#ff002f"/><stop offset=".792" stop-color="#ff0026"/><stop offset=".833" stop-color="#ff001f"/><stop offset=".875" stop-color="#ff0019"/><stop offset=".917" stop-color="#ff0013"/><stop offset=".958" stop-color="#ff000e"/><stop offset="1" stop-color="#ff000a"/></linearGradient>
<linearGradient id="c127" gradientUnits="userSpaceOnUse" x1="1212.3" x2="1760.5"><stop offset="0" stop-color="#0096ff"/><stop offset=".046" stop-color="#0092ff"/><stop offset=".091" stop-color="#008dff"/><stop offset=".137" stop-color="#0087ff"/><stop offset=".182" stop-color="#0082ff"/><stop offset=".228" stop-color="#007bff"/><stop offset=".247" stop-color="#1478ff"/><stop offset=".265" stop-color="#2875ff"/><stop offset=".284" stop-color="#3e72ff"/><stop offset=".302" stop-color="#546fff"/><stop offset=".321" stop-color="#6c6cff"/><stop offset=".341" stop-color="#8668ff"/><stop offset=".36" stop-color="#a264ff"/><stop offset=".38" stop-color="#c060ff"/><stop offset=".4" stop-color="#de5cff"/><stop offset=".42" stop-color="#ff57ff"/><stop offset=".439" stop-color="#ff49e2"/><stop offset=".458" stop-color="#ff3eca"/><stop offset=".476" stop-color="#ff34b6"/><stop offset=".495" stop-color="#ff2ba4"/><stop offset=".514" stop-color="#ff2495"/><stop offset=".532" stop-color="#ff1e88"/><stop offset=".551" stop-color="#ff187c"/><stop offset=".57" stop-color="#ff1371"/><stop offset=".588" stop-color="#ff0e68"/><stop offset=".607" stop-color="#ff0a60"/><stop offset=".626" stop-color="#ff0658"/><stop offset=".645" stop-color="#ff0351"/><stop offset=".663" stop-color="#ff004a"/><stop offset=".705" stop-color="#ff003e"/><stop offset=".747" stop-color="#f03"/><stop offset=".789" stop-color="#ff002a"/><stop offset=".832" stop-color="#ff0023"/><stop offset=".874" stop-color="#ff001c"/><stop offset=".916" stop-color="#ff0016"/><stop offset=".958" stop-color="#f01"/><stop offset="1" stop-color="#ff000c"/></linearGradient>
<linearGradient id="c128" gradientUnits="userSpaceOnUse" x1="1213.3" x2="1751.5"><stop offset="0" stop-color="#0092ff"/><stop offset=".046" stop-color="#008dff"/><stop offset=".091" stop-color="#08f"/><stop offset=".137" stop-color="#0083ff"/><stop offset=".183" stop-color="#007dff"/><stop offset=".228" stop-color="#0076ff"/><stop offset=".247" stop-color="#1374ff"/><stop offset=".265" stop-color="#2771ff"/><stop offset=".283" stop-color="#3b6eff"/><stop offset=".302" stop-color="#516bff"/><stop offset=".32" stop-color="#6767ff"/><stop offset=".338" stop-color="#7e64ff"/><stop offset=".355" stop-color="#9561ff"/><stop offset=".373" stop-color="#ae5dff"/><stop offset=".391" stop-color="#c859ff"/><stop offset=".409" stop-color="#e355ff"/><stop offset=".426" stop-color="#ff51ff"/><stop offset=".446" stop-color="#ff44e2"/><stop offset=".465" stop-color="#ff38ca"/><stop offset=".485" stop-color="#ff2fb6"/><stop offset=".504" stop-color="#ff27a4"/><stop offset=".524" stop-color="#ff2095"/><stop offset=".543" stop-color="#ff1a87"/><stop offset=".562" stop-color="#ff147b"/><stop offset=".582" stop-color="#ff0f71"/><stop offset=".601" stop-color="#ff0b67"/><stop offset=".621" stop-color="#ff075f"/><stop offset=".64" stop-color="#ff0357"/><stop offset=".66" stop-color="#ff0050"/><stop offset=".702" stop-color="#ff0043"/><stop offset=".745" stop-color="#ff0038"/><stop offset=".787" stop-color="#ff002e"/><stop offset=".83" stop-color="#ff0026"/><stop offset=".872" stop-color="#ff001f"/><stop offset=".915" stop-color="#ff0019"/><stop offset=".957" stop-color="#ff0014"/><stop offset="1" stop-color="#ff000f"/></linearGradient>
<linearGradient id="c129" gradientUnits="userSpaceOnUse" x1="1214.4" x2="1742.5"><stop offset="0" stop-color="#008dff"/><stop offset=".046" stop-color="#08f"/><stop offset=".091" stop-color="#0083ff"/><stop offset=".137" stop-color="#007eff"/><stop offset=".183" stop-color="#0078ff"/><stop offset=".228" stop-color="#0072ff"/><stop offset=".246" stop-color="#126fff"/><stop offset=".265" stop-color="#256cff"/><stop offset=".283" stop-color="#3969ff"/><stop offset=".301" stop-color="#4d66ff"/><stop offset=".319" stop-color="#6363ff"/><stop offset=".338" stop-color="#7a5fff"/><stop offset=".357" stop-color="#925cff"/><stop offset=".376" stop-color="#ab58ff"/><stop offset=".395" stop-color="#c654ff"/><stop offset=".414" stop-color="#e250ff"/><stop offset=".433" stop-color="#ff4bff"/><stop offset=".453" stop-color="#ff3ee2"/><stop offset=".473" stop-color="#ff33ca"/><stop offset=".494" stop-color="#ff2ab5"/><stop offset=".514" stop-color="#ff22a3"/><stop offset=".534" stop-color="#ff1b94"/><stop offset=".554" stop-color="#ff1586"/><stop offset=".575" stop-color="#ff107b"/><stop offset=".595" stop-color="#ff0b70"/><stop offset=".615" stop-color="#ff0767"/><stop offset=".635" stop-color="#ff035e"/><stop offset=".656" stop-color="#ff0056"/><stop offset=".705" stop-color="#ff0046"/><stop offset=".754" stop-color="#ff0039"/><stop offset=".803" stop-color="#ff002f"/><stop offset=".852" stop-color="#ff0026"/><stop offset=".902" stop-color="#ff001e"/><stop offset=".951" stop-color="#ff0017"/><stop offset="1" stop-color="#f01"/></linearGradient>
<linearGradient id="c130" gradientUnits="userSpaceOnUse" x1="1215.5" x2="1733.6"><stop offset="0" stop-color="#0089ff"/><stop offset=".046" stop-color="#0084ff"/><stop offset=".091" stop-color="#007fff"/><stop offset=".137" stop-color="#0079ff"/><stop offset=".183" stop-color="#0073ff"/><stop offset=".228" stop-color="#006dff"/><stop offset=".246" stop-color="#116aff"/><stop offset=".264" stop-color="#2467ff"/><stop offset=".282" stop-color="#3665ff"/><stop offset=".3" stop-color="#4a61ff"/><stop offset=".318" stop-color="#5e5eff"/><stop offset=".339" stop-color="#765bff"/><stop offset=".359" stop-color="#8f57ff"/><stop offset=".379" stop-color="#a953ff"/><stop offset=".399" stop-color="#c44eff"/><stop offset=".419" stop-color="#e14aff"/><stop offset=".44" stop-color="#ff45ff"/><stop offset=".461" stop-color="#ff39e1"/><stop offset=".482" stop-color="#ff2ec9"/><stop offset=".503" stop-color="#ff25b4"/><stop offset=".524" stop-color="#ff1ea2"/><stop offset=".546" stop-color="#ff1793"/><stop offset=".567" stop-color="#ff1185"/><stop offset=".588" stop-color="#ff0c79"/><stop offset=".609" stop-color="#ff086f"/><stop offset=".63" stop-color="#ff0465"/><stop offset=".652" stop-color="#ff005d"/><stop offset=".701" stop-color="#ff004c"/><stop offset=".751" stop-color="#ff003e"/><stop offset=".801" stop-color="#f03"/><stop offset=".851" stop-color="#ff0029"/><stop offset=".9" stop-color="#ff0021"/><stop offset=".95" stop-color="#ff001a"/><stop offset="1" stop-color="#ff0014"/></linearGradient>
<linearGradient id="c131" gradientUnits="userSpaceOnUse" x1="1216.6" x2="1724.6"><stop offset="0" stop-color="#0084ff"/><stop offset=".046" stop-color="#0080ff"/><stop offset=".091" stop-color="#007aff"/><stop offset=".137" stop-color="#0075ff"/><stop offset=".183" stop-color="#006fff"/><stop offset=".228" stop-color="#0069ff"/><stop offset=".246" stop-color="#16f"/><stop offset=".264" stop-color="#2263ff"/><stop offset=".282" stop-color="#3460ff"/><stop offset=".3" stop-color="#475dff"/><stop offset=".318" stop-color="#5a5aff"/><stop offset=".339" stop-color="#7256ff"/><stop offset=".361" stop-color="#8c52ff"/><stop offset=".382" stop-color="#a64eff"/><stop offset=".404" stop-color="#c349ff"/><stop offset=".425" stop-color="#e045ff"/><stop offset=".446" stop-color="#ff40ff"/><stop offset=".467" stop-color="#ff34e4"/><stop offset=".487" stop-color="#ff2bcd"/><stop offset=".507" stop-color="#ff23b9"/><stop offset=".527" stop-color="#ff1ca8"/><stop offset=".547" stop-color="#ff1699"/><stop offset=".567" stop-color="#ff108c"/><stop offset=".587" stop-color="#ff0c80"/><stop offset=".607" stop-color="#ff0776"/><stop offset=".627" stop-color="#ff036c"/><stop offset=".648" stop-color="#ff0064"/><stop offset=".698" stop-color="#ff0052"/><stop offset=".748" stop-color="#ff0043"/><stop offset=".799" stop-color="#ff0037"/><stop offset=".849" stop-color="#ff002d"/><stop offset=".899" stop-color="#ff0025"/><stop offset=".95" stop-color="#ff001d"/><stop offset="1" stop-color="#ff0017"/></linearGradient>
<linearGradient id="c132" gradientUnits="userSpaceOnUse" x1="1217.8" x2="1715.6"><stop offset="0" stop-color="#0080ff"/><stop offset=".046" stop-color="#007bff"/><stop offset=".091" stop-color="#0076ff"/><stop offset=".137" stop-color="#0071ff"/><stop offset=".183" stop-color="#006bff"/><stop offset=".228" stop-color="#0064ff"/><stop offset=".251" stop-color="#1461ff"/><stop offset=".273" stop-color="#295dff"/><stop offset=".295" stop-color="#3f5aff"/><stop offset=".317" stop-color="#5656ff"/><stop offset=".336" stop-color="#6b52ff"/><stop offset=".356" stop-color="#814fff"/><stop offset=".375" stop-color="#984bff"/><stop offset=".395" stop-color="#b047ff"/><stop offset=".415" stop-color="#c943ff"/><stop offset=".434" stop-color="#e43fff"/><stop offset=".454" stop-color="#ff3aff"/><stop offset=".475" stop-color="#ff2fe3"/><stop offset=".496" stop-color="#ff26cc"/><stop offset=".517" stop-color="#ff1eb8"/><stop offset=".538" stop-color="#ff17a7"/><stop offset=".559" stop-color="#ff1298"/><stop offset=".58" stop-color="#ff0c8b"/><stop offset=".601" stop-color="#ff087f"/><stop offset=".622" stop-color="#ff0475"/><stop offset=".643" stop-color="#ff006b"/><stop offset=".694" stop-color="#ff0058"/><stop offset=".745" stop-color="#ff0049"/><stop offset=".796" stop-color="#ff003c"/><stop offset=".847" stop-color="#ff0031"/><stop offset=".898" stop-color="#ff0028"/><stop offset=".949" stop-color="#ff0021"/><stop offset="1" stop-color="#ff001a"/></linearGradient>
<linearGradient id="c133" gradientUnits="userSpaceOnUse" x1="1219" x2="1706.6"><stop offset="0" stop-color="#007cff"/><stop offset=".046" stop-color="#07f"/><stop offset=".091" stop-color="#0072ff"/><stop offset=".137" stop-color="#006cff"/><stop offset=".183" stop-color="#06f"/><stop offset=".228" stop-color="#0060ff"/><stop offset=".25" stop-color="#135dff"/><stop offset=".272" stop-color="#2759ff"/><stop offset=".294" stop-color="#3c56ff"/><stop offset=".316" stop-color="#5252ff"/><stop offset=".337" stop-color="#684eff"/><stop offset=".357" stop-color="#7e4aff"/><stop offset=".378" stop-color="#9646ff"/><stop offset=".399" stop-color="#ae42ff"/><stop offset=".42" stop-color="#c83eff"/><stop offset=".44" stop-color="#e339ff"/><stop offset=".461" stop-color="#ff35ff"/><stop offset=".483" stop-color="#ff2ae3"/><stop offset=".506" stop-color="#ff21cb"/><stop offset=".528" stop-color="#ff1ab7"/><stop offset=".55" stop-color="#ff13a6"/><stop offset=".572" stop-color="#ff0d97"/><stop offset=".594" stop-color="#ff0889"/><stop offset=".616" stop-color="#ff047e"/><stop offset=".639" stop-color="#ff0073"/><stop offset=".69" stop-color="#ff005f"/><stop offset=".742" stop-color="#ff004e"/><stop offset=".794" stop-color="#ff0041"/><stop offset=".845" stop-color="#ff0036"/><stop offset=".897" stop-color="#ff002c"/><stop offset=".948" stop-color="#ff0024"/><stop offset="1" stop-color="#ff001d"/></linearGradient>
<linearGradient id="c134" gradientUnits="userSpaceOnUse" x1="1220.1" x2="1697.6"><stop offset="0" stop-color="#07f"/><stop offset=".046" stop-color="#0073ff"/><stop offset=".091" stop-color="#006dff"/><stop offset=".137" stop-color="#0068ff"/><stop offset=".183" stop-color="#0062ff"/><stop offset=".228" stop-color="#005cff"/><stop offset=".25" stop-color="#1258ff"/><stop offset=".272" stop-color="#2655ff"/><stop offset=".293" stop-color="#3952ff"/><stop offset=".315" stop-color="#4e4eff"/><stop offset=".337" stop-color="#644aff"/><stop offset=".359" stop-color="#7b46ff"/><stop offset=".381" stop-color="#9342ff"/><stop offset=".403" stop-color="#ac3eff"/><stop offset=".425" stop-color="#c739ff"/><stop offset=".447" stop-color="#e234ff"/><stop offset=".469" stop-color="#ff2fff"/><stop offset=".49" stop-color="#ff26e5"/><stop offset=".51" stop-color="#ff1ed0"/><stop offset=".531" stop-color="#ff18bd"/><stop offset=".551" stop-color="#ff12ac"/><stop offset=".572" stop-color="#ff0c9e"/><stop offset=".593" stop-color="#ff0891"/><stop offset=".613" stop-color="#ff0486"/><stop offset=".634" stop-color="#ff007b"/><stop offset=".686" stop-color="#f06"/><stop offset=".739" stop-color="#ff0054"/><stop offset=".791" stop-color="#ff0046"/><stop offset=".843" stop-color="#ff003a"/><stop offset=".895" stop-color="#ff0030"/><stop offset=".948" stop-color="#ff0028"/><stop offset="1" stop-color="#ff0020"/></linearGradient>
<linearGradient id="c135" gradientUnits="userSpaceOnUse" x1="1221.3" x2="1688.6"><stop offset="0" stop-color="#0073ff"/><stop offset=".046" stop-color="#006eff"/><stop offset=".091" stop-color="#0069ff"/><stop offset=".137" stop-color="#0064ff"/><stop offset=".183" stop-color="#005eff"/><stop offset=".228" stop-color="#0058ff"/><stop offset=".25" stop-color="#1254ff"/><stop offset=".271" stop-color="#2451ff"/><stop offset=".292" stop-color="#374eff"/><stop offset=".314" stop-color="#4a4aff"/><stop offset=".337" stop-color="#6146ff"/><stop offset=".36" stop-color="#7842ff"/><stop offset=".384" stop-color="#913eff"/><stop offset=".407" stop-color="#aa39ff"/><stop offset=".43" stop-color="#c534ff"/><stop offset=".454" stop-color="#e12fff"/><stop offset=".477" stop-color="#ff2aff"/><stop offset=".499" stop-color="#ff21e5"/><stop offset=".52" stop-color="#ff1acf"/><stop offset=".542" stop-color="#ff13bc"/><stop offset=".564" stop-color="#ff0dab"/><stop offset=".586" stop-color="#ff089d"/><stop offset=".607" stop-color="#ff0490"/><stop offset=".629" stop-color="#ff0084"/><stop offset=".682" stop-color="#ff006d"/><stop offset=".735" stop-color="#ff005a"/><stop offset=".788" stop-color="#ff004b"/><stop offset=".841" stop-color="#ff003f"/><stop offset=".894" stop-color="#ff0034"/><stop offset=".947" stop-color="#ff002c"/><stop offset="1" stop-color="#ff0024"/></linearGradient>
<linearGradient id="c136" gradientUnits="userSpaceOnUse" x1="1222.6" x2="1679.6"><stop offset="0" stop-color="#006fff"/><stop offset=".046" stop-color="#006aff"/><stop offset=".091" stop-color="#0065ff"/><stop offset=".137" stop-color="#0060ff"/><stop offset=".183" stop-color="#005aff"/><stop offset=".228" stop-color="#0054ff"/><stop offset=".249" stop-color="#1151ff"/><stop offset=".27" stop-color="#224dff"/><stop offset=".291" stop-color="#344aff"/><stop offset=".312" stop-color="#4747ff"/><stop offset=".334" stop-color="#5b43ff"/><stop offset=".356" stop-color="#6f3fff"/><stop offset=".377" stop-color="#853bff"/><stop offset=".399" stop-color="#9b37ff"/><stop offset=".42" stop-color="#b333ff"/><stop offset=".442" stop-color="#cb2fff"/><stop offset=".464" stop-color="#e42aff"/><stop offset=".485" stop-color="#ff25ff"/><stop offset=".508" stop-color="#ff1ce4"/><stop offset=".531" stop-color="#ff15ce"/><stop offset=".555" stop-color="#ff0fba"/><stop offset=".578" stop-color="#ff09aa"/><stop offset=".601" stop-color="#ff049b"/><stop offset=".624" stop-color="#ff008e"/><stop offset=".677" stop-color="#ff0075"/><stop offset=".731" stop-color="#ff0061"/><stop offset=".785" stop-color="#ff0051"/><stop offset=".839" stop-color="#f04"/><stop offset=".892" stop-color="#ff0039"/><stop offset=".946" stop-color="#ff002f"/><stop offset="1" stop-color="#ff0027"/></linearGradient>
<linearGradient id="c137" gradientUnits="userSpaceOnUse" x1="1223.9" x2="1670.6"><stop offset="0" stop-color="#006bff"/><stop offset=".057" stop-color="#0065ff"/><stop offset=".114" stop-color="#005eff"/><stop offset=".171" stop-color="#0057ff"/><stop offset=".228" stop-color="#0050ff"/><stop offset=".249" stop-color="#104dff"/><stop offset=".27" stop-color="#204aff"/><stop offset=".29" stop-color="#3246ff"/><stop offset=".311" stop-color="#4343ff"/><stop offset=".334" stop-color="#573fff"/><stop offset=".357" stop-color="#6c3cff"/><stop offset=".38" stop-color="#8237ff"/><stop offset=".403" stop-color="#93f"/><stop offset=".425" stop-color="#b12fff"/><stop offset=".448" stop-color="#ca2aff"/><stop offset=".471" stop-color="#e425ff"/><stop offset=".494" stop-color="#ff20ff"/><stop offset=".515" stop-color="#ff19e8"/><stop offset=".536" stop-color="#ff13d3"/><stop offset=".556" stop-color="#ff0dc2"/><stop offset=".577" stop-color="#ff08b2"/><stop offset=".598" stop-color="#ff04a4"/><stop offset=".618" stop-color="#ff0098"/><stop offset=".673" stop-color="#ff007d"/><stop offset=".727" stop-color="#ff0068"/><stop offset=".782" stop-color="#ff0057"/><stop offset=".836" stop-color="#ff0049"/><stop offset=".891" stop-color="#ff003d"/><stop offset=".945" stop-color="#ff0034"/><stop offset="1" stop-color="#ff002b"/></linearGradient>
<linearGradient id="c138" gradientUnits="userSpaceOnUse" x1="1225.1" x2="1661.6"><stop offset="0" stop-color="#0067ff"/><stop offset=".057" stop-color="#0061ff"/><stop offset=".114" stop-color="#005bff"/><stop offset=".171" stop-color="#0054ff"/><stop offset=".228" stop-color="#004cff"/><stop offset=".248" stop-color="#0f49ff"/><stop offset=".269" stop-color="#1f46ff"/><stop offset=".289" stop-color="#2f43ff"/><stop offset=".31" stop-color="#4040ff"/><stop offset=".334" stop-color="#543cff"/><stop offset=".358" stop-color="#6a38ff"/><stop offset=".382" stop-color="#8034ff"/><stop offset=".406" stop-color="#972fff"/><stop offset=".431" stop-color="#af2bff"/><stop offset=".455" stop-color="#c926ff"/><stop offset=".479" stop-color="#e321ff"/><stop offset=".503" stop-color="#ff1bff"/><stop offset=".525" stop-color="#ff14e7"/><stop offset=".547" stop-color="#ff0ed3"/><stop offset=".569" stop-color="#ff09c1"/><stop offset=".591" stop-color="#ff04b1"/><stop offset=".613" stop-color="#ff00a3"/><stop offset=".668" stop-color="#ff0086"/><stop offset=".723" stop-color="#ff006f"/><stop offset=".779" stop-color="#ff005d"/><stop offset=".834" stop-color="#ff004f"/><stop offset=".889" stop-color="#ff0042"/><stop offset=".945" stop-color="#ff0038"/><stop offset="1" stop-color="#ff002f"/></linearGradient>
<linearGradient id="c139" gradientUnits="userSpaceOnUse" x1="1226.5" x2="1652.6"><stop offset="0" stop-color="#0063ff"/><stop offset=".057" stop-color="#005dff"/><stop offset=".114" stop-color="#0057ff"/><stop offset=".171" stop-color="#0050ff"/><stop offset=".227" stop-color="#0048ff"/><stop offset=".248" stop-color="#0e45ff"/><stop offset=".268" stop-color="#1d43ff"/><stop offset=".288" stop-color="#2d40ff"/><stop offset=".308" stop-color="#3c3cff"/><stop offset=".334" stop-color="#5138ff"/><stop offset=".359" stop-color="#6734ff"/><stop offset=".385" stop-color="#7e30ff"/><stop offset=".41" stop-color="#952bff"/><stop offset=".436" stop-color="#ae26ff"/><stop offset=".462" stop-color="#c821ff"/><stop offset=".487" stop-color="#e31cff"/><stop offset=".513" stop-color="#ff17ff"/><stop offset=".536" stop-color="#ff10e6"/><stop offset=".56" stop-color="#ff0ad1"/><stop offset=".583" stop-color="#ff05bf"/><stop offset=".606" stop-color="#ff00af"/><stop offset=".663" stop-color="#ff0090"/><stop offset=".719" stop-color="#f07"/><stop offset=".775" stop-color="#ff0064"/><stop offset=".831" stop-color="#ff0054"/><stop offset=".888" stop-color="#ff0047"/><stop offset=".944" stop-color="#ff003c"/><stop offset="1" stop-color="#f03"/></linearGradient>
<linearGradient id="c140" gradientUnits="userSpaceOnUse" x1="1227.8" x2="1643.6"><stop offset="0" stop-color="#005fff"/><stop offset=".057" stop-color="#0059ff"/><stop offset=".114" stop-color="#0053ff"/><stop offset=".17" stop-color="#004cff"/><stop offset=".227" stop-color="#0045ff"/><stop offset=".247" stop-color="#0e42ff"/><stop offset=".267" stop-color="#1c3fff"/><stop offset=".287" stop-color="#2a3cff"/><stop offset=".306" stop-color="#3939ff"/><stop offset=".331" stop-color="#4c36ff"/><stop offset=".355" stop-color="#5f32ff"/><stop offset=".379" stop-color="#742eff"/><stop offset=".403" stop-color="#882aff"/><stop offset=".427" stop-color="#9e25ff"/><stop offset=".451" stop-color="#b521ff"/><stop offset=".475" stop-color="#cd1cff"/><stop offset=".499" stop-color="#e517ff"/><stop offset=".523" stop-color="#ff12ff"/><stop offset=".549" stop-color="#ff0be5"/><stop offset=".574" stop-color="#ff05cf"/><stop offset=".6" stop-color="#ff00bc"/><stop offset=".657" stop-color="#ff009a"/><stop offset=".714" stop-color="#ff0080"/><stop offset=".771" stop-color="#ff006b"/><stop offset=".829" stop-color="#ff005b"/><stop offset=".886" stop-color="#ff004d"/><stop offset=".943" stop-color="#ff0041"/><stop offset="1" stop-color="#ff0037"/></linearGradient>
<linearGradient id="c141" gradientUnits="userSpaceOnUse" x1="1229.1" x2="1634.6"><stop offset="0" stop-color="#005bff"/><stop offset=".057" stop-color="#05f"/><stop offset=".113" stop-color="#004fff"/><stop offset=".17" stop-color="#0048ff"/><stop offset=".227" stop-color="#0041ff"/><stop offset=".253" stop-color="#113eff"/><stop offset=".279" stop-color="#233aff"/><stop offset=".305" stop-color="#3636ff"/><stop offset=".33" stop-color="#4932ff"/><stop offset=".356" stop-color="#5d2eff"/><stop offset=".381" stop-color="#712aff"/><stop offset=".406" stop-color="#8626ff"/><stop offset=".432" stop-color="#9d21ff"/><stop offset=".457" stop-color="#b41dff"/><stop offset=".483" stop-color="#cc18ff"/><stop offset=".508" stop-color="#e513ff"/><stop offset=".533" stop-color="#ff0dff"/><stop offset=".553" stop-color="#ff08eb"/><stop offset=".573" stop-color="#ff04da"/><stop offset=".593" stop-color="#ff00ca"/><stop offset=".651" stop-color="#ff00a5"/><stop offset=".71" stop-color="#ff0089"/><stop offset=".768" stop-color="#ff0073"/><stop offset=".826" stop-color="#ff0061"/><stop offset=".884" stop-color="#ff0053"/><stop offset=".942" stop-color="#ff0046"/><stop offset="1" stop-color="#ff003c"/></linearGradient>
<linearGradient id="c142" gradientUnits="userSpaceOnUse" x1="1230.5" x2="1625.6"><stop offset="0" stop-color="#0057ff"/><stop offset=".057" stop-color="#0051ff"/><stop offset=".113" stop-color="#004bff"/><stop offset=".17" stop-color="#0045ff"/><stop offset=".226" stop-color="#003eff"/><stop offset=".252" stop-color="#103aff"/><stop offset=".277" stop-color="#2137ff"/><stop offset=".303" stop-color="#33f"/><stop offset=".33" stop-color="#462fff"/><stop offset=".357" stop-color="#5a2bff"/><stop offset=".383" stop-color="#6f27ff"/><stop offset=".41" stop-color="#8422ff"/><stop offset=".437" stop-color="#9b1eff"/><stop offset=".464" stop-color="#b219ff"/><stop offset=".491" stop-color="#cb14ff"/><stop offset=".518" stop-color="#e40fff"/><stop offset=".544" stop-color="#ff09ff"/><stop offset=".565" stop-color="#ff04eb"/><stop offset=".586" stop-color="#ff00d9"/><stop offset=".645" stop-color="#ff00b1"/><stop offset=".704" stop-color="#ff0093"/><stop offset=".764" stop-color="#ff007b"/><stop offset=".823" stop-color="#ff0068"/><stop offset=".882" stop-color="#ff0059"/><stop offset=".941" stop-color="#ff004c"/><stop offset="1" stop-color="#ff0041"/></linearGradient>
<linearGradient id="c143" gradientUnits="userSpaceOnUse" x1="1231.9" x2="1616.6"><stop offset="0" stop-color="#0053ff"/><stop offset=".056" stop-color="#004eff"/><stop offset=".113" stop-color="#0048ff"/><stop offset=".169" stop-color="#0041ff"/><stop offset=".226" stop-color="#003aff"/><stop offset=".251" stop-color="#1037ff"/><stop offset=".276" stop-color="#2034ff"/><stop offset=".301" stop-color="#3030ff"/><stop offset=".329" stop-color="#432cff"/><stop offset=".358" stop-color="#5828ff"/><stop offset=".386" stop-color="#6d23ff"/><stop offset=".414" stop-color="#831fff"/><stop offset=".443" stop-color="#991aff"/><stop offset=".471" stop-color="#b115ff"/><stop offset=".499" stop-color="#ca10ff"/><stop offset=".528" stop-color="#e40aff"/><stop offset=".556" stop-color="#ff05ff"/><stop offset=".579" stop-color="#ff00ea"/><stop offset=".639" stop-color="#ff00be"/><stop offset=".699" stop-color="#ff009d"/><stop offset=".759" stop-color="#ff0084"/><stop offset=".819" stop-color="#ff006f"/><stop offset=".88" stop-color="#ff005f"/><stop offset=".94" stop-color="#ff0051"/><stop offset="1" stop-color="#ff0046"/></linearGradient>
<linearGradient id="c144" gradientUnits="userSpaceOnUse" x1="1233.3" x2="1607.6"><stop offset="0" stop-color="#004fff"/><stop offset=".056" stop-color="#004aff"/><stop offset=".113" stop-color="#04f"/><stop offset=".169" stop-color="#003eff"/><stop offset=".225" stop-color="#0037ff"/><stop offset=".25" stop-color="#0f34ff"/><stop offset=".274" stop-color="#1e30ff"/><stop offset=".299" stop-color="#2d2dff"/><stop offset=".326" stop-color="#3f29ff"/><stop offset=".353" stop-color="#5126ff"/><stop offset=".38" stop-color="#6422ff"/><stop offset=".406" stop-color="#781dff"/><stop offset=".433" stop-color="#8c19ff"/><stop offset=".46" stop-color="#a114ff"/><stop offset=".487" stop-color="#b710ff"/><stop offset=".514" stop-color="#ce0bff"/><stop offset=".541" stop-color="#e606ff"/><stop offset=".568" stop-color="#ff01ff"/><stop offset=".63" stop-color="#ff00ce"/><stop offset=".692" stop-color="#ff00a9"/><stop offset=".753" stop-color="#ff008e"/><stop offset=".815" stop-color="#ff0078"/><stop offset=".877" stop-color="#f06"/><stop offset=".938" stop-color="#ff0057"/><stop offset="1" stop-color="#ff004b"/></linearGradient>
<linearGradient id="c145" gradientUnits="userSpaceOnUse" x1="1234.8" x2="1598.6"><stop offset="0" stop-color="#004cff"/><stop offset=".056" stop-color="#0046ff"/><stop offset=".112" stop-color="#0040ff"/><stop offset=".168" stop-color="#003aff"/><stop offset=".224" stop-color="#0034ff"/><stop offset=".248" stop-color="#0e31ff"/><stop offset=".272" stop-color="#1c2eff"/><stop offset=".296" stop-color="#2a2aff"/><stop offset=".326" stop-color="#3d26ff"/><stop offset=".355" stop-color="#5022ff"/><stop offset=".385" stop-color="#641eff"/><stop offset=".415" stop-color="#7919ff"/><stop offset=".444" stop-color="#8e15ff"/><stop offset=".474" stop-color="#a510ff"/><stop offset=".503" stop-color="#bc0bff"/><stop offset=".533" stop-color="#d506ff"/><stop offset=".562" stop-color="#e0f"/><stop offset=".581" stop-color="#f0f"/><stop offset=".651" stop-color="#ff00ca"/><stop offset=".721" stop-color="#ff00a4"/><stop offset=".79" stop-color="#ff0087"/><stop offset=".86" stop-color="#ff0071"/><stop offset=".93" stop-color="#ff005f"/><stop offset="1" stop-color="#ff0050"/></linearGradient>
<linearGradient id="c146" gradientUnits="userSpaceOnUse" x1="1236.3" x2="1589.6"><stop offset="0" stop-color="#0048ff"/><stop offset=".056" stop-color="#0043ff"/><stop offset=".112" stop-color="#003dff"/><stop offset=".168" stop-color="#0037ff"/><stop offset=".224" stop-color="#0030ff"/><stop offset=".247" stop-color="#0d2eff"/><stop offset=".27" stop-color="#1a2bff"/><stop offset=".294" stop-color="#2828ff"/><stop offset=".323" stop-color="#3924ff"/><stop offset=".351" stop-color="#4b20ff"/><stop offset=".38" stop-color="#5d1cff"/><stop offset=".409" stop-color="#7018ff"/><stop offset=".438" stop-color="#8413ff"/><stop offset=".467" stop-color="#990fff"/><stop offset=".496" stop-color="#af0aff"/><stop offset=".525" stop-color="#c505ff"/><stop offset=".553" stop-color="#dc00ff"/><stop offset=".595" stop-color="#f0f"/><stop offset=".662" stop-color="#ff00cd"/><stop offset=".73" stop-color="#ff00a9"/><stop offset=".797" stop-color="#ff008d"/><stop offset=".865" stop-color="#f07"/><stop offset=".932" stop-color="#ff0065"/><stop offset="1" stop-color="#ff0056"/></linearGradient>
<linearGradient id="c147" gradientUnits="userSpaceOnUse" x1="1237.7" x2="1580.6"><stop offset="0" stop-color="#04f"/><stop offset=".074" stop-color="#003dff"/><stop offset=".148" stop-color="#0035ff"/><stop offset=".223" stop-color="#002dff"/><stop offset=".245" stop-color="#0c2bff"/><stop offset=".268" stop-color="#1828ff"/><stop offset=".291" stop-color="#2525ff"/><stop offset=".323" stop-color="#3721ff"/><stop offset=".354" stop-color="#4a1dff"/><stop offset=".386" stop-color="#5d18ff"/><stop offset=".417" stop-color="#7114ff"/><stop offset=".449" stop-color="#870fff"/><stop offset=".481" stop-color="#9c0aff"/><stop offset=".512" stop-color="#b305ff"/><stop offset=".544" stop-color="#cb00ff"/><stop offset=".609" stop-color="#f0f"/><stop offset=".674" stop-color="#ff00d0"/><stop offset=".739" stop-color="#ff00ad"/><stop offset=".805" stop-color="#ff0092"/><stop offset=".87" stop-color="#ff007d"/><stop offset=".935" stop-color="#ff006b"/><stop offset="1" stop-color="#ff005c"/></linearGradient>
<linearGradient id="c148" gradientUnits="userSpaceOnUse" x1="1239.3" x2="1571.6"><stop offset="0" stop-color="#0041ff"/><stop offset=".074" stop-color="#003aff"/><stop offset=".148" stop-color="#0032ff"/><stop offset=".222" stop-color="#002aff"/><stop offset=".244" stop-color="#0b28ff"/><stop offset=".266" stop-color="#1725ff"/><stop offset=".288" stop-color="#22f"/><stop offset=".319" stop-color="#331fff"/><stop offset=".35" stop-color="#441bff"/><stop offset=".38" stop-color="#5617ff"/><stop offset=".411" stop-color="#6912ff"/><stop offset=".442" stop-color="#7c0eff"/><stop offset=".472" stop-color="#900aff"/><stop offset=".503" stop-color="#a505ff"/><stop offset=".534" stop-color="#ba00ff"/><stop offset=".579" stop-color="#dc00ff"/><stop offset=".624" stop-color="#f0f"/><stop offset=".699" stop-color="#f0c"/><stop offset=".775" stop-color="#ff00a7"/><stop offset=".85" stop-color="#ff008b"/><stop offset=".925" stop-color="#ff0075"/><stop offset="1" stop-color="#ff0063"/></linearGradient>
<linearGradient id="c149" gradientUnits="userSpaceOnUse" x1="1240.8" x2="1562.6"><stop offset="0" stop-color="#003dff"/><stop offset=".074" stop-color="#0036ff"/><stop offset=".147" stop-color="#002fff"/><stop offset=".221" stop-color="#0027ff"/><stop offset=".253" stop-color="#1024ff"/><stop offset=".285" stop-color="#2020ff"/><stop offset=".319" stop-color="#321cff"/><stop offset=".353" stop-color="#4418ff"/><stop offset=".387" stop-color="#5713ff"/><stop offset=".421" stop-color="#6b0fff"/><stop offset=".455" stop-color="#7f0aff"/><stop offset=".489" stop-color="#9505ff"/><stop offset=".523" stop-color="#ab00ff"/><stop offset=".582" stop-color="#d300ff"/><stop offset=".641" stop-color="#f0f"/><stop offset=".712" stop-color="#ff00d0"/><stop offset=".784" stop-color="#ff00ad"/><stop offset=".856" stop-color="#ff0091"/><stop offset=".928" stop-color="#ff007c"/><stop offset="1" stop-color="#ff006a"/></linearGradient>
<linearGradient id="c150" gradientUnits="userSpaceOnUse" x1="1242.3" x2="1553.6"><stop offset="0" stop-color="#0039ff"/><stop offset=".073" stop-color="#03f"/><stop offset=".146" stop-color="#002cff"/><stop offset=".219" stop-color="#0024ff"/><stop offset=".25" stop-color="#0e21ff"/><stop offset=".282" stop-color="#1d1dff"/><stop offset=".314" stop-color="#2e1aff"/><stop offset=".347" stop-color="#3e16ff"/><stop offset=".38" stop-color="#5012ff"/><stop offset=".413" stop-color="#620dff"/><stop offset=".446" stop-color="#7409ff"/><stop offset=".478" stop-color="#8805ff"/><stop offset=".511" stop-color="#9c00ff"/><stop offset=".585" stop-color="#cb00ff"/><stop offset=".658" stop-color="#f0f"/><stop offset=".726" stop-color="#ff00d3"/><stop offset=".795" stop-color="#ff00b2"/><stop offset=".863" stop-color="#ff0098"/><stop offset=".932" stop-color="#ff0083"/><stop offset="1" stop-color="#ff0071"/></linearGradient>
<linearGradient id="c151" gradientUnits="userSpaceOnUse" x1="1243.9" x2="1544.6"><stop offset="0" stop-color="#0036ff"/><stop offset=".073" stop-color="#002fff"/><stop offset=".145" stop-color="#0029ff"/><stop offset=".218" stop-color="#0021ff"/><stop offset=".248" stop-color="#0d1eff"/><stop offset=".278" stop-color="#1b1bff"/><stop offset=".309" stop-color="#2a17ff"/><stop offset=".341" stop-color="#3914ff"/><stop offset=".373" stop-color="#4910ff"/><stop offset=".404" stop-color="#590cff"/><stop offset=".436" stop-color="#6a08ff"/><stop offset=".467" stop-color="#7b04ff"/><stop offset=".499" stop-color="#8d00ff"/><stop offset=".558" stop-color="#b100ff"/><stop offset=".617" stop-color="#d700ff"/><stop offset=".677" stop-color="#f0f"/><stop offset=".757" stop-color="#ff00cf"/><stop offset=".838" stop-color="#ff00ab"/><stop offset=".919" stop-color="#ff008f"/><stop offset="1" stop-color="#ff0079"/></linearGradient>
<linearGradient id="c152" gradientUnits="userSpaceOnUse" x1="1245.5" x2="1535.6"><stop offset="0" stop-color="#0032ff"/><stop offset=".072" stop-color="#002cff"/><stop offset=".144" stop-color="#0025ff"/><stop offset=".217" stop-color="#001eff"/><stop offset=".245" stop-color="#0c1cff"/><stop offset=".274" stop-color="#1919ff"/><stop offset=".309" stop-color="#2815ff"/><stop offset=".344" stop-color="#3911ff"/><stop offset=".38" stop-color="#4a0dff"/><stop offset=".415" stop-color="#5b09ff"/><stop offset=".45" stop-color="#6d04ff"/><stop offset=".485" stop-color="#8000ff"/><stop offset=".556" stop-color="#a700ff"/><stop offset=".626" stop-color="#d100ff"/><stop offset=".696" stop-color="#f0f"/><stop offset=".772" stop-color="#ff00d3"/><stop offset=".848" stop-color="#ff00b1"/><stop offset=".924" stop-color="#ff0097"/><stop offset="1" stop-color="#ff0082"/></linearGradient>
<linearGradient id="c153" gradientUnits="userSpaceOnUse" x1="1247.1" x2="1526.6"><stop offset="0" stop-color="#002fff"/><stop offset=".072" stop-color="#0029ff"/><stop offset=".143" stop-color="#02f"/><stop offset=".215" stop-color="#001cff"/><stop offset=".242" stop-color="#0b19ff"/><stop offset=".269" stop-color="#1616ff"/><stop offset=".303" stop-color="#2513ff"/><stop offset=".337" stop-color="#330fff"/><stop offset=".37" stop-color="#420cff"/><stop offset=".404" stop-color="#5208ff"/><stop offset=".437" stop-color="#6204ff"/><stop offset=".471" stop-color="#7300ff"/><stop offset=".553" stop-color="#9e00ff"/><stop offset=".636" stop-color="#c0f"/><stop offset=".718" stop-color="#f0f"/><stop offset=".788" stop-color="#ff00d7"/><stop offset=".859" stop-color="#ff00b8"/><stop offset=".929" stop-color="#ff009f"/><stop offset="1" stop-color="#ff008b"/></linearGradient>
<linearGradient id="c154" gradientUnits="userSpaceOnUse" x1="1248.7" x2="1517.6"><stop offset="0" stop-color="#002bff"/><stop offset=".071" stop-color="#0025ff"/><stop offset=".142" stop-color="#001fff"/><stop offset=".213" stop-color="#0019ff"/><stop offset=".239" stop-color="#0a17ff"/><stop offset=".265" stop-color="#1414ff"/><stop offset=".303" stop-color="#2310ff"/><stop offset=".341" stop-color="#330cff"/><stop offset=".379" stop-color="#4408ff"/><stop offset=".417" stop-color="#5504ff"/><stop offset=".455" stop-color="#60f"/><stop offset=".55" stop-color="#9500ff"/><stop offset=".646" stop-color="#c700ff"/><stop offset=".741" stop-color="#f0f"/><stop offset=".827" stop-color="#ff00d2"/><stop offset=".914" stop-color="#ff00af"/><stop offset="1" stop-color="#ff0095"/></linearGradient>
<linearGradient id="c155" gradientUnits="userSpaceOnUse" x1="1250.4" x2="1508.6"><stop offset="0" stop-color="#0028ff"/><stop offset=".07" stop-color="#02f"/><stop offset=".141" stop-color="#001cff"/><stop offset=".211" stop-color="#0016ff"/><stop offset=".235" stop-color="#0914ff"/><stop offset=".259" stop-color="#1212ff"/><stop offset=".295" stop-color="#200fff"/><stop offset=".331" stop-color="#2e0bff"/><stop offset=".367" stop-color="#3c07ff"/><stop offset=".402" stop-color="#4b04ff"/><stop offset=".438" stop-color="#5a00ff"/><stop offset=".52" stop-color="#7f00ff"/><stop offset=".602" stop-color="#a700ff"/><stop offset=".684" stop-color="#d100ff"/><stop offset=".766" stop-color="#f0f"/><stop offset=".844" stop-color="#ff00d7"/><stop offset=".922" stop-color="#ff00b8"/><stop offset="1" stop-color="#ff009f"/></linearGradient>
<linearGradient id="c156" gradientUnits="userSpaceOnUse" x1="1252.1" x2="1499.6"><stop offset="0" stop-color="#0024ff"/><stop offset=".104" stop-color="#001cff"/><stop offset=".208" stop-color="#0014ff"/><stop offset=".231" stop-color="#0812ff"/><stop offset=".253" stop-color="#1010ff"/><stop offset=".295" stop-color="#1f0cff"/><stop offset=".337" stop-color="#2e08ff"/><stop offset=".378" stop-color="#3e04ff"/><stop offset=".42" stop-color="#4f00ff"/><stop offset=".513" stop-color="#7600ff"/><stop offset=".606" stop-color="#a000ff"/><stop offset=".699" stop-color="#ce00ff"/><stop offset=".793" stop-color="#f0f"/><stop offset=".896" stop-color="#ff00ce"/><stop offset="1" stop-color="#f0a"/></linearGradient>
<linearGradient id="c157" gradientUnits="userSpaceOnUse" x1="1253.8" x2="1490.6"><stop offset="0" stop-color="#0021ff"/><stop offset=".103" stop-color="#0019ff"/><stop offset=".206" stop-color="#01f"/><stop offset=".247" stop-color="#0e0eff"/><stop offset=".285" stop-color="#1b0aff"/><stop offset=".323" stop-color="#2807ff"/><stop offset=".361" stop-color="#3604ff"/><stop offset=".399" stop-color="#40f"/><stop offset=".505" stop-color="#6d00ff"/><stop offset=".611" stop-color="#90f"/><stop offset=".716" stop-color="#ca00ff"/><stop offset=".822" stop-color="#f0f"/><stop offset=".911" stop-color="#ff00d6"/><stop offset="1" stop-color="#ff00b7"/></linearGradient>
<linearGradient id="c158" gradientUnits="userSpaceOnUse" x1="1255.6" x2="1481.7"><stop offset="0" stop-color="#001eff"/><stop offset=".101" stop-color="#0016ff"/><stop offset=".202" stop-color="#000fff"/><stop offset=".239" stop-color="#0c0cff"/><stop offset=".285" stop-color="#1a08ff"/><stop offset=".331" stop-color="#2904ff"/><stop offset=".377" stop-color="#3900ff"/><stop offset=".472" stop-color="#5b00ff"/><stop offset=".568" stop-color="#8000ff"/><stop offset=".663" stop-color="#a700ff"/><stop offset=".759" stop-color="#d100ff"/><stop offset=".854" stop-color="#f0f"/><stop offset=".927" stop-color="#ff00df"/><stop offset="1" stop-color="#ff00c4"/></linearGradient>
<linearGradient id="c159" gradientUnits="userSpaceOnUse" x1="1257.4" x2="1472.7"><stop offset="0" stop-color="#001aff"/><stop offset=".099" stop-color="#0013ff"/><stop offset=".199" stop-color="#000cff"/><stop offset=".231" stop-color="#0a0aff"/><stop offset=".272" stop-color="#1606ff"/><stop offset=".312" stop-color="#2203ff"/><stop offset=".352" stop-color="#2f00ff"/><stop offset=".46" stop-color="#5300ff"/><stop offset=".567" stop-color="#7900ff"/><stop offset=".675" stop-color="#a200ff"/><stop offset=".782" stop-color="#cf00ff"/><stop offset=".89" stop-color="#f0f"/><stop offset="1" stop-color="#ff00d2"/></linearGradient>
<linearGradient id="c160" gradientUnits="userSpaceOnUse" x1="1259.3" x2="1463.7"><stop offset="0" stop-color="#0017ff"/><stop offset=".097" stop-color="#0010ff"/><stop offset=".194" stop-color="#000aff"/><stop offset=".222" stop-color="#0808ff"/><stop offset=".273" stop-color="#1604ff"/><stop offset=".325" stop-color="#2500ff"/><stop offset=".445" stop-color="#4a00ff"/><stop offset=".566" stop-color="#7200ff"/><stop offset=".687" stop-color="#9d00ff"/><stop offset=".808" stop-color="#c0f"/><stop offset=".929" stop-color="#f0f"/><stop offset="1" stop-color="#ff00e2"/></linearGradient>
<linearGradient id="c161" gradientUnits="userSpaceOnUse" x1="1261.3" x2="1454.7"><stop offset="0" stop-color="#0013ff"/><stop offset=".095" stop-color="#000dff"/><stop offset=".189" stop-color="#0007ff"/><stop offset=".211" stop-color="#0606ff"/><stop offset=".252" stop-color="#1103ff"/><stop offset=".294" stop-color="#1c00ff"/><stop offset=".407" stop-color="#3b00ff"/><stop offset=".52" stop-color="#5d00ff"/><stop offset=".633" stop-color="#8100ff"/><stop offset=".746" stop-color="#a800ff"/><stop offset=".859" stop-color="#d200ff"/><stop offset=".972" stop-color="#f0f"/><stop offset="1" stop-color="#ff00f4"/></linearGradient>
<linearGradient id="c162" gradientUnits="userSpaceOnUse" x1="1263.3" x2="1445.7"><stop offset="0" stop-color="#0010ff"/><stop offset=".091" stop-color="#000bff"/><stop offset=".183" stop-color="#0005ff"/><stop offset=".199" stop-color="#0404ff"/><stop offset=".259" stop-color="#1300ff"/><stop offset=".382" stop-color="#3200ff"/><stop offset=".506" stop-color="#5400ff"/><stop offset=".629" stop-color="#7900ff"/><stop offset=".753" stop-color="#a000ff"/><stop offset=".876" stop-color="#ca00ff"/><stop offset="1" stop-color="#f700ff"/></linearGradient>
<linearGradient id="c163" gradientUnits="userSpaceOnUse" x1="1265.4" x2="1436.7"><stop offset="0" stop-color="#000dff"/><stop offset=".088" stop-color="#0008ff"/><stop offset=".176" stop-color="#0003ff"/><stop offset=".219" stop-color="#0a00ff"/><stop offset=".349" stop-color="#2800ff"/><stop offset=".479" stop-color="#4900ff"/><stop offset=".609" stop-color="#6c00ff"/><stop offset=".74" stop-color="#9100ff"/><stop offset=".87" stop-color="#b900ff"/><stop offset="1" stop-color="#e400ff"/></linearGradient>
<linearGradient id="c164" gradientUnits="userSpaceOnUse" x1="1267.6" x2="1427.7"><stop offset="0" stop-color="#0009ff"/><stop offset=".083" stop-color="#0005ff"/><stop offset=".167" stop-color="#00f"/><stop offset=".306" stop-color="#1e00ff"/><stop offset=".445" stop-color="#3d00ff"/><stop offset=".583" stop-color="#5f00ff"/><stop offset=".722" stop-color="#8300ff"/><stop offset=".861" stop-color="#a900ff"/><stop offset="1" stop-color="#d300ff"/></linearGradient>
<linearGradient id="c165" gradientUnits="userSpaceOnUse" x1="1270" x2="1418.7"><stop offset="0" stop-color="#0006ff"/><stop offset=".149" stop-color="#00f"/><stop offset=".319" stop-color="#2000ff"/><stop offset=".489" stop-color="#40f"/><stop offset=".659" stop-color="#6b00ff"/><stop offset=".83" stop-color="#9400ff"/><stop offset="1" stop-color="#c200ff"/></linearGradient>
<linearGradient id="c166" gradientUnits="userSpaceOnUse" x1="1272.4" x2="1409.7"><stop offset="0" stop-color="#0003ff"/><stop offset=".125" stop-color="#00f"/><stop offset=".3" stop-color="#1c00ff"/><stop offset=".475" stop-color="#3e00ff"/><stop offset=".65" stop-color="#6100ff"/><stop offset=".825" stop-color="#80f"/><stop offset="1" stop-color="#b100ff"/></linearGradient>
<linearGradient id="c167" gradientUnits="userSpaceOnUse" x1="1274.9" x2="1400.7"><stop offset="0" stop-color="#00f"/><stop offset=".096" stop-color="#00f"/><stop offset=".277" stop-color="#1800ff"/><stop offset=".458" stop-color="#3700ff"/><stop offset=".638" stop-color="#5900ff"/><stop offset=".819" stop-color="#7c00ff"/><stop offset="1" stop-color="#a200ff"/></linearGradient>
<linearGradient id="c168" gradientUnits="userSpaceOnUse" x1="1277.6" x2="1391.7"><stop offset="0" stop-color="#00f"/><stop offset=".06" stop-color="#00f"/><stop offset=".248" stop-color="#1500ff"/><stop offset=".436" stop-color="#3100ff"/><stop offset=".624" stop-color="#5000ff"/><stop offset=".812" stop-color="#7100ff"/><stop offset="1" stop-color="#9300ff"/></linearGradient>
<linearGradient id="c169" gradientUnits="userSpaceOnUse" x1="1280.6" x2="1382.7"><stop offset="0" stop-color="#00f"/><stop offset=".25" stop-color="#1600ff"/><stop offset=".5" stop-color="#3900ff"/><stop offset=".75" stop-color="#5d00ff"/><stop offset="1" stop-color="#8500ff"/></linearGradient>
<linearGradient id="c170" gradientUnits="userSpaceOnUse" x1="1283.8" x2="1373.7"><stop offset="0" stop-color="#00f"/><stop offset=".25" stop-color="#1800ff"/><stop offset=".5" stop-color="#3600ff"/><stop offset=".75" stop-color="#50f"/><stop offset="1" stop-color="#70f"/></linearGradient>
<linearGradient id="c171" gradientUnits="userSpaceOnUse" x1="1287.5" x2="1364.7"><stop offset="0" stop-color="#0200ff"/><stop offset=".333" stop-color="#20f"/><stop offset=".667" stop-color="#4500ff"/><stop offset="1" stop-color="#6a00ff"/></linearGradient>
<linearGradient id="c172" gradientUnits="userSpaceOnUse" x1="1291.6" x2="1355.7"><stop offset="0" stop-color="#0800ff"/><stop offset=".333" stop-color="#2300ff"/><stop offset=".667" stop-color="#4000ff"/><stop offset="1" stop-color="#5e00ff"/></linearGradient>
<linearGradient id="c173" gradientUnits="userSpaceOnUse" x1="1296.1" x2="1346.7"><stop offset="0" stop-color="#0f00ff"/><stop offset=".5" stop-color="#2f00ff"/><stop offset="1" stop-color="#5200ff"/></linearGradient>
<linearGradient id="c174" gradientUnits="userSpaceOnUse" x1="1300.8" x2="1337.7"><stop offset="0" stop-color="#1600ff"/><stop offset=".5" stop-color="#2d00ff"/><stop offset="1" stop-color="#4600ff"/></linearGradient>
<linearGradient id="c175" gradientUnits="userSpaceOnUse" x1="1305.6" x2="1328.7"><stop offset="0" stop-color="#1d00ff"/><stop offset="1" stop-color="#3b00ff"/></linearGradient>
<linearGradient id="c176" gradientUnits="userSpaceOnUse" x1="1310.3" x2="1319.7"><stop offset="0" stop-color="#2400ff"/><stop offset="1" stop-color="#3000ff"/></linearGradient>
<clipPath id="insclip"><rect x="1648.6" y="144.8" width="251" height="199"/></clipPath>
<linearGradient id="i0" gradientUnits="userSpaceOnUse" x1="1647.6" x2="1900.6"><stop offset="0" stop-color="#a5ff00"/><stop offset=".143" stop-color="#b5ff00"/><stop offset=".286" stop-color="#c4ff00"/><stop offset=".429" stop-color="#d4ff00"/><stop offset=".571" stop-color="#e5ff00"/><stop offset=".714" stop-color="#f6ff00"/><stop offset=".857" stop-color="#fff700"/><stop offset="1" stop-color="#ffe700"/></linearGradient>
<linearGradient id="i1" gradientUnits="userSpaceOnUse" x1="1647.6" x2="1900.6"><stop offset="0" stop-color="#a7ff00"/><stop offset=".143" stop-color="#b6ff00"/><stop offset=".286" stop-color="#c6ff00"/><stop offset=".429" stop-color="#d6ff00"/><stop offset=".571" stop-color="#e7ff00"/><stop offset=".714" stop-color="#f8ff00"/><stop offset=".857" stop-color="#fff500"/><stop offset="1" stop-color="#ffe500"/></linearGradient>
<linearGradient id="i2" gradientUnits="userSpaceOnUse" x1="1647.6" x2="1900.6"><stop offset="0" stop-color="#a9ff00"/><stop offset=".143" stop-color="#b8ff00"/><stop offset=".286" stop-color="#c8ff00"/><stop offset=".429" stop-color="#d8ff00"/><stop offset=".571" stop-color="#e9ff00"/><stop offset=".714" stop-color="#faff00"/><stop offset=".857" stop-color="#fff300"/><stop offset="1" stop-color="#ffe300"/></linearGradient>
<linearGradient id="i3" gradientUnits="userSpaceOnUse" x1="1647.6" x2="1900.6"><stop offset="0" stop-color="#af0"/><stop offset=".143" stop-color="#baff00"/><stop offset=".286" stop-color="#caff00"/><stop offset=".429" stop-color="#daff00"/><stop offset=".571" stop-color="#ebff00"/><stop offset=".714" stop-color="#fcff00"/><stop offset=".857" stop-color="#fff100"/><stop offset="1" stop-color="#ffe200"/></linearGradient>
<linearGradient id="i4" gradientUnits="userSpaceOnUse" x1="1647.6" x2="1900.6"><stop offset="0" stop-color="#acff01"/><stop offset=".044" stop-color="#b1ff00"/><stop offset=".203" stop-color="#c2ff00"/><stop offset=".363" stop-color="#d4ff00"/><stop offset=".522" stop-color="#e7ff00"/><stop offset=".681" stop-color="#faff00"/><stop offset=".841" stop-color="#fff100"/><stop offset="1" stop-color="#ffe000"/></linearGradient>
<linearGradient id="i5" gradientUnits="userSpaceOnUse" x1="1647.6" x2="1900.6"><stop offset="0" stop-color="#aeff02"/><stop offset=".082" stop-color="#b6ff00"/><stop offset=".235" stop-color="#c8ff00"/><stop offset=".388" stop-color="#d9ff00"/><stop offset=".541" stop-color="#ebff00"/><stop offset=".694" stop-color="#feff00"/><stop offset=".847" stop-color="#fe0"/><stop offset="1" stop-color="#ffde00"/></linearGradient>
<linearGradient id="i6" gradientUnits="userSpaceOnUse" x1="1647.6" x2="1900.6"><stop offset="0" stop-color="#afff03"/><stop offset=".119" stop-color="#bcff00"/><stop offset=".266" stop-color="#cdff00"/><stop offset=".413" stop-color="#deff00"/><stop offset=".56" stop-color="#f0ff00"/><stop offset=".706" stop-color="#fffc00"/><stop offset=".853" stop-color="#ffeb00"/><stop offset="1" stop-color="#ffdc00"/></linearGradient>
<linearGradient id="i7" gradientUnits="userSpaceOnUse" x1="1647.6" x2="1900.6"><stop offset="0" stop-color="#b1ff04"/><stop offset=".157" stop-color="#c2ff00"/><stop offset=".298" stop-color="#d3ff00"/><stop offset=".438" stop-color="#e3ff00"/><stop offset=".579" stop-color="#f4ff00"/><stop offset=".719" stop-color="#fff800"/><stop offset=".86" stop-color="#ffe800"/><stop offset="1" stop-color="#ffda00"/></linearGradient>
<linearGradient id="i8" gradientUnits="userSpaceOnUse" x1="1647.6" x2="1900.6"><stop offset="0" stop-color="#b3ff05"/><stop offset=".097" stop-color="#beff02"/><stop offset=".195" stop-color="#c9ff00"/><stop offset=".356" stop-color="#dbff00"/><stop offset=".517" stop-color="#efff00"/><stop offset=".678" stop-color="#fffb00"/><stop offset=".839" stop-color="#ffe900"/><stop offset="1" stop-color="#ffd800"/></linearGradient>
<linearGradient id="i9" gradientUnits="userSpaceOnUse" x1="1647.6" x2="1900.6"><stop offset="0" stop-color="#b4ff06"/><stop offset=".116" stop-color="#c1ff03"/><stop offset=".232" stop-color="#cfff00"/><stop offset=".386" stop-color="#e1ff00"/><stop offset=".539" stop-color="#f4ff00"/><stop offset=".693" stop-color="#fff700"/><stop offset=".846" stop-color="#ffe600"/><stop offset="1" stop-color="#ffd600"/></linearGradient>
<linearGradient id="i10" gradientUnits="userSpaceOnUse" x1="1647.6" x2="1900.6"><stop offset="0" stop-color="#b6ff07"/><stop offset=".135" stop-color="#c5ff03"/><stop offset=".27" stop-color="#d5ff00"/><stop offset=".416" stop-color="#e7ff00"/><stop offset=".562" stop-color="#f9ff00"/><stop offset=".708" stop-color="#fff300"/><stop offset=".854" stop-color="#ffe300"/><stop offset="1" stop-color="#ffd400"/></linearGradient>
<linearGradient id="i11" gradientUnits="userSpaceOnUse" x1="1647.6" x2="1900.6"><stop offset="0" stop-color="#b8ff08"/><stop offset=".154" stop-color="#caff04"/><stop offset=".308" stop-color="#dcff00"/><stop offset=".446" stop-color="#edff00"/><stop offset=".585" stop-color="#feff00"/><stop offset=".723" stop-color="#ffef00"/><stop offset=".862" stop-color="#ffe000"/><stop offset="1" stop-color="#ffd200"/></linearGradient>
<linearGradient id="i12" gradientUnits="userSpaceOnUse" x1="1647.6" x2="1900.6"><stop offset="0" stop-color="#baff09"/><stop offset=".115" stop-color="#c7ff06"/><stop offset=".23" stop-color="#d4ff03"/><stop offset=".345" stop-color="#e2ff00"/><stop offset=".509" stop-color="#f7ff00"/><stop offset=".673" stop-color="#fff300"/><stop offset=".836" stop-color="#ffe100"/><stop offset="1" stop-color="#ffd000"/></linearGradient>
<linearGradient id="i13" gradientUnits="userSpaceOnUse" x1="1647.6" x2="1900.6"><stop offset="0" stop-color="#bcff0a"/><stop offset=".128" stop-color="#caff07"/><stop offset=".255" stop-color="#daff03"/><stop offset=".383" stop-color="#e9ff00"/><stop offset=".537" stop-color="#fdff00"/><stop offset=".692" stop-color="#ffef00"/><stop offset=".846" stop-color="#ffde00"/><stop offset="1" stop-color="#ffcf00"/></linearGradient>
<linearGradient id="i14" gradientUnits="userSpaceOnUse" x1="1647.6" x2="1900.6"><stop offset="0" stop-color="#bdff0b"/><stop offset=".14" stop-color="#ceff07"/><stop offset=".28" stop-color="#dfff04"/><stop offset=".421" stop-color="#f0ff00"/><stop offset=".566" stop-color="#fffc00"/><stop offset=".71" stop-color="#ffea00"/><stop offset=".855" stop-color="#ffdb00"/><stop offset="1" stop-color="#ffcd00"/></linearGradient>
<linearGradient id="i15" gradientUnits="userSpaceOnUse" x1="1647.6" x2="1900.6"><stop offset="0" stop-color="#bfff0c"/><stop offset=".153" stop-color="#d1ff08"/><stop offset=".306" stop-color="#e4ff04"/><stop offset=".458" stop-color="#f7ff00"/><stop offset=".594" stop-color="#fff600"/><stop offset=".729" stop-color="#ffe600"/><stop offset=".865" stop-color="#ffd800"/><stop offset="1" stop-color="#ffcb00"/></linearGradient>
<linearGradient id="i16" gradientUnits="userSpaceOnUse" x1="1647.6" x2="1900.6"><stop offset="0" stop-color="#c1ff0d"/><stop offset=".165" stop-color="#d5ff09"/><stop offset=".331" stop-color="#e9ff04"/><stop offset=".496" stop-color="#feff00"/><stop offset=".622" stop-color="#fff000"/><stop offset=".748" stop-color="#ffe200"/><stop offset=".874" stop-color="#ffd500"/><stop offset="1" stop-color="#ffc900"/></linearGradient>
<linearGradient id="i17" gradientUnits="userSpaceOnUse" x1="1647.6" x2="1900.6"><stop offset="0" stop-color="#c3ff0e"/><stop offset=".133" stop-color="#d3ff0b"/><stop offset=".267" stop-color="#e3ff07"/><stop offset=".4" stop-color="#f4ff04"/><stop offset=".534" stop-color="#fff900"/><stop offset=".689" stop-color="#ffe600"/><stop offset=".845" stop-color="#ffd600"/><stop offset="1" stop-color="#ffc700"/></linearGradient>
<linearGradient id="i18" gradientUnits="userSpaceOnUse" x1="1647.6" x2="1900.6"><stop offset="0" stop-color="#c5ff0f"/><stop offset=".143" stop-color="#d6ff0b"/><stop offset=".286" stop-color="#e8ff08"/><stop offset=".429" stop-color="#faff04"/><stop offset=".571" stop-color="#fff200"/><stop offset=".714" stop-color="#ffe100"/><stop offset=".857" stop-color="#ffd300"/><stop offset="1" stop-color="#ffc500"/></linearGradient>
<linearGradient id="i19" gradientUnits="userSpaceOnUse" x1="1647.6" x2="1900.6"><stop offset="0" stop-color="#c7ff10"/><stop offset=".152" stop-color="#d9ff0c"/><stop offset=".305" stop-color="#ecff08"/><stop offset=".457" stop-color="#fffe04"/><stop offset=".609" stop-color="#ffeb00"/><stop offset=".739" stop-color="#fd0"/><stop offset=".87" stop-color="#ffd000"/><stop offset="1" stop-color="#ffc400"/></linearGradient>
<linearGradient id="i20" gradientUnits="userSpaceOnUse" x1="1647.6" x2="1900.6"><stop offset="0" stop-color="#c9ff11"/><stop offset=".162" stop-color="#ddff0d"/><stop offset=".323" stop-color="#f1ff09"/><stop offset=".485" stop-color="#fff804"/><stop offset=".647" stop-color="#ffe500"/><stop offset=".764" stop-color="#ffd800"/><stop offset=".882" stop-color="#ffcd00"/><stop offset="1" stop-color="#ffc200"/></linearGradient>
<linearGradient id="i21" gradientUnits="userSpaceOnUse" x1="1647.6" x2="1900.6"><stop offset="0" stop-color="#cbff12"/><stop offset=".137" stop-color="#dcff0f"/><stop offset=".274" stop-color="#edff0b"/><stop offset=".411" stop-color="#ffff08"/><stop offset=".547" stop-color="#ffee04"/><stop offset=".684" stop-color="#ffdf00"/><stop offset=".842" stop-color="#ffce00"/><stop offset="1" stop-color="#ffc000"/></linearGradient>
<linearGradient id="i22" gradientUnits="userSpaceOnUse" x1="1647.6" x2="1900.6"><stop offset="0" stop-color="#cdff13"/><stop offset=".144" stop-color="#dfff10"/><stop offset=".289" stop-color="#f1ff0c"/><stop offset=".433" stop-color="#fffa08"/><stop offset=".578" stop-color="#ffe804"/><stop offset=".722" stop-color="#ffd900"/><stop offset=".861" stop-color="#ffcb00"/><stop offset="1" stop-color="#ffbe00"/></linearGradient>
<linearGradient id="i23" gradientUnits="userSpaceOnUse" x1="1647.6" x2="1900.6"><stop offset="0" stop-color="#cfff15"/><stop offset=".152" stop-color="#e2ff11"/><stop offset=".304" stop-color="#f5ff0d"/><stop offset=".456" stop-color="#fff508"/><stop offset=".608" stop-color="#ffe304"/><stop offset=".76" stop-color="#ffd300"/><stop offset=".88" stop-color="#ffc700"/><stop offset="1" stop-color="#ffbd00"/></linearGradient>
<linearGradient id="i24" gradientUnits="userSpaceOnUse" x1="1647.6" x2="1900.6"><stop offset="0" stop-color="#d1ff16"/><stop offset=".159" stop-color="#e5ff12"/><stop offset=".319" stop-color="#faff0d"/><stop offset=".478" stop-color="#fff009"/><stop offset=".638" stop-color="#ffdd04"/><stop offset=".797" stop-color="#ffcd00"/><stop offset=".899" stop-color="#ffc400"/><stop offset="1" stop-color="#fb0"/></linearGradient>
<linearGradient id="i25" gradientUnits="userSpaceOnUse" x1="1647.6" x2="1900.6"><stop offset="0" stop-color="#d3ff17"/><stop offset=".139" stop-color="#e5ff13"/><stop offset=".278" stop-color="#f7ff10"/><stop offset=".418" stop-color="#fff50b"/><stop offset=".557" stop-color="#ffe407"/><stop offset=".696" stop-color="#ffd503"/><stop offset=".835" stop-color="#ffc800"/><stop offset="1" stop-color="#ffb900"/></linearGradient>
<linearGradient id="i26" gradientUnits="userSpaceOnUse" x1="1647.6" x2="1900.6"><stop offset="0" stop-color="#d5ff18"/><stop offset=".145" stop-color="#e8ff14"/><stop offset=".291" stop-color="#fbff11"/><stop offset=".436" stop-color="#fff00c"/><stop offset=".582" stop-color="#ffdf07"/><stop offset=".727" stop-color="#ffd004"/><stop offset=".873" stop-color="#ffc200"/><stop offset="1" stop-color="#ffb700"/></linearGradient>
<linearGradient id="i27" gradientUnits="userSpaceOnUse" x1="1647.6" x2="1900.6"><stop offset="0" stop-color="#d7ff19"/><stop offset=".152" stop-color="#ebff15"/><stop offset=".303" stop-color="#ff1"/><stop offset=".455" stop-color="#ffec0c"/><stop offset=".607" stop-color="#ffda08"/><stop offset=".759" stop-color="#ffcb04"/><stop offset=".91" stop-color="#ffbd00"/><stop offset="1" stop-color="#ffb600"/></linearGradient>
<linearGradient id="i28" gradientUnits="userSpaceOnUse" x1="1647.6" x2="1900.6"><stop offset="0" stop-color="#d9ff1a"/><stop offset=".158" stop-color="#eeff16"/><stop offset=".316" stop-color="#fffb12"/><stop offset=".474" stop-color="#ffe70d"/><stop offset=".632" stop-color="#ffd608"/><stop offset=".79" stop-color="#ffc604"/><stop offset=".948" stop-color="#ffb800"/><stop offset="1" stop-color="#ffb400"/></linearGradient>
<linearGradient id="i29" gradientUnits="userSpaceOnUse" x1="1647.6" x2="1900.6"><stop offset="0" stop-color="#dbff1c"/><stop offset=".164" stop-color="#f1ff17"/><stop offset=".329" stop-color="#fff712"/><stop offset=".493" stop-color="#ffe30d"/><stop offset=".657" stop-color="#ffd108"/><stop offset=".821" stop-color="#ffc204"/><stop offset=".986" stop-color="#ffb400"/><stop offset="1" stop-color="#ffb200"/></linearGradient>
<linearGradient id="i30" gradientUnits="userSpaceOnUse" x1="1647.6" x2="1900.6"><stop offset="0" stop-color="#deff1d"/><stop offset=".143" stop-color="#f1ff19"/><stop offset=".286" stop-color="#fffa15"/><stop offset=".429" stop-color="#ffe810"/><stop offset=".571" stop-color="#ffd80c"/><stop offset=".714" stop-color="#ffca07"/><stop offset=".857" stop-color="#ffbd04"/><stop offset="1" stop-color="#ffb101"/></linearGradient>
<linearGradient id="i31" gradientUnits="userSpaceOnUse" x1="1647.6" x2="1900.6"><stop offset="0" stop-color="#e0ff1e"/><stop offset=".143" stop-color="#f3ff1a"/><stop offset=".286" stop-color="#fff816"/><stop offset=".429" stop-color="#ffe611"/><stop offset=".571" stop-color="#ffd60c"/><stop offset=".714" stop-color="#ffc808"/><stop offset=".857" stop-color="#ffbb05"/><stop offset="1" stop-color="#ffaf01"/></linearGradient>
<linearGradient id="i32" gradientUnits="userSpaceOnUse" x1="1647.6" x2="1900.6"><stop offset="0" stop-color="#e2ff1f"/><stop offset=".143" stop-color="#f5ff1c"/><stop offset=".286" stop-color="#fff517"/><stop offset=".429" stop-color="#ffe412"/><stop offset=".571" stop-color="#ffd40d"/><stop offset=".714" stop-color="#ffc609"/><stop offset=".857" stop-color="#ffb906"/><stop offset="1" stop-color="#ffad02"/></linearGradient>
<linearGradient id="i33" gradientUnits="userSpaceOnUse" x1="1647.6" x2="1900.6"><stop offset="0" stop-color="#e4ff20"/><stop offset=".143" stop-color="#f7ff1c"/><stop offset=".286" stop-color="#fff418"/><stop offset=".429" stop-color="#ffe212"/><stop offset=".571" stop-color="#ffd30e"/><stop offset=".714" stop-color="#ffc50a"/><stop offset=".857" stop-color="#ffb806"/><stop offset="1" stop-color="#ffac03"/></linearGradient>
<linearGradient id="rbar" x1="0" y1="0" x2="0" y2="1"><stop offset="0" stop-color="#ff1010"/><stop offset=".55" stop-color="#f80000"/><stop offset="1" stop-color="#b00000"/></linearGradient>
<linearGradient id="gbar" x1="0" y1="0" x2="0" y2="1"><stop offset="0" stop-color="#089008"/><stop offset=".55" stop-color="#008000"/><stop offset="1" stop-color="#005800"/></linearGradient>
<linearGradient id="bbar" x1="0" y1="0" x2="0" y2="1"><stop offset="0" stop-color="#1010ff"/><stop offset=".5" stop-color="#0000f0"/><stop offset="1" stop-color="#0000a0"/></linearGradient>
<linearGradient id="thead" x1="0" y1="0" x2="0" y2="1"><stop offset="0" stop-color="#2e2e2e"/><stop offset=".48" stop-color="#282828"/><stop offset=".5" stop-color="#141414"/><stop offset="1" stop-color="#1c1c1c"/></linearGradient>
<linearGradient id="tleft" x1="0" x2="1"><stop offset="0" stop-color="#242424"/><stop offset="1" stop-color="#303030"/></linearGradient>
<linearGradient id="bbarbg" x1="0" y1="0" x2="0" y2="1"><stop offset="0" stop-color="#484848"/><stop offset=".5" stop-color="#363636"/><stop offset="1" stop-color="#262626"/></linearGradient>
<linearGradient id="bbtn" x1="0" y1="0" x2="0" y2="1"><stop offset="0" stop-color="#a6a6a6"/><stop offset=".5" stop-color="#7c7c7c"/><stop offset="1" stop-color="#5e5e5e"/></linearGradient>
<linearGradient id="bsel" x1="0" y1="0" x2="0" y2="1"><stop offset="0" stop-color="#161616"/><stop offset="1" stop-color="#343434"/></linearGradient>
<linearGradient id="bcirc" x1="0" y1="0" x2="0" y2="1"><stop offset="0" stop-color="#686868"/><stop offset="1" stop-color="#9c9c9c"/></linearGradient>
<linearGradient id="stopglass" x1="0" y1="0" x2="0" y2="1"><stop offset="0" stop-color="#b4b4b4"/><stop offset=".5" stop-color="#a4a4a4"/><stop offset=".52" stop-color="#868686"/><stop offset="1" stop-color="#8c8c8c"/></linearGradient>
<linearGradient id="bdk" x1="0" y1="0" x2="0" y2="1"><stop offset="0" stop-color="#2a2a2a"/><stop offset="1" stop-color="#3a3a3a"/></linearGradient>
<linearGradient id="bdkc" x1="0" y1="0" x2="0" y2="1"><stop offset="0" stop-color="#242424"/><stop offset="1" stop-color="#343434"/></linearGradient>
</defs>
<g id="window-bg">
<rect x="0" y="0" width="1912" height="1040" fill="#323232"/>
<rect x="0" y="23" width="1912" height="65.5" fill="#222"/>
<rect x="0" y="0" width="1912" height="23" fill="#fff"/>
<rect x="0" y="88.5" width="1" height="890" fill="#272727"/>
</g>
<g id="titlebar">
<g id="app-icon"><path d="M9.9 10.9L18 11.06A8.1 8.1 0 0 0 17.68 8.65Z" fill="#ff2000"/><path d="M9.9 10.9L17.76 8.96A8.1 8.1 0 0 0 16.83 6.71Z" fill="#ff6000"/><path d="M9.9 10.9L16.99 6.99A8.1 8.1 0 0 0 15.51 5.06Z" fill="#ff9f00"/><path d="M9.9 10.9L15.74 5.29A8.1 8.1 0 0 0 13.81 3.81Z" fill="#ffdf00"/><path d="M9.9 10.9L14.09 3.97A8.1 8.1 0 0 0 11.84 3.04Z" fill="#dfff00"/><path d="M9.9 10.9L12.15 3.12A8.1 8.1 0 0 0 9.74 2.8Z" fill="#9fff00"/><path d="M9.9 10.9L10.06 2.8A8.1 8.1 0 0 0 7.65 3.12Z" fill="#60ff00"/><path d="M9.9 10.9L7.96 3.04A8.1 8.1 0 0 0 5.71 3.97Z" fill="#20ff00"/><path d="M9.9 10.9L5.99 3.81A8.1 8.1 0 0 0 4.06 5.29Z" fill="#00ff20"/><path d="M9.9 10.9L4.29 5.06A8.1 8.1 0 0 0 2.81 6.99Z" fill="#00ff60"/><path d="M9.9 10.9L2.97 6.71A8.1 8.1 0 0 0 2.04 8.96Z" fill="#00ff9f"/><path d="M9.9 10.9L2.12 8.65A8.1 8.1 0 0 0 1.8 11.06Z" fill="#00ffdf"/><path d="M9.9 10.9L1.8 10.74A8.1 8.1 0 0 0 2.12 13.15Z" fill="#00dfff"/><path d="M9.9 10.9L2.04 12.84A8.1 8.1 0 0 0 2.97 15.09Z" fill="#009fff"/><path d="M9.9 10.9L2.81 14.81A8.1 8.1 0 0 0 4.29 16.74Z" fill="#0060ff"/><path d="M9.9 10.9L4.06 16.51A8.1 8.1 0 0 0 5.99 17.99Z" fill="#0020ff"/><path d="M9.9 10.9L5.71 17.83A8.1 8.1 0 0 0 7.96 18.76Z" fill="#2000ff"/><path d="M9.9 10.9L7.65 18.68A8.1 8.1 0 0 0 10.06 19Z" fill="#6000ff"/><path d="M9.9 10.9L9.74 19A8.1 8.1 0 0 0 12.15 18.68Z" fill="#9f00ff"/><path d="M9.9 10.9L11.84 18.76A8.1 8.1 0 0 0 14.09 17.83Z" fill="#df00ff"/><path d="M9.9 10.9L13.81 17.99A8.1 8.1 0 0 0 15.74 16.51Z" fill="#ff00df"/><path d="M9.9 10.9L15.51 16.74A8.1 8.1 0 0 0 16.99 14.81Z" fill="#ff009f"/><path d="M9.9 10.9L16.83 15.09A8.1 8.1 0 0 0 17.76 12.84Z" fill="#ff0060"/><path d="M9.9 10.9L17.68 13.15A8.1 8.1 0 0 0 18 10.74Z" fill="#ff0020"/><circle cx="9.9" cy="10.9" r="6.3" fill="#000"/>
<text x="9.9" y="13.6" font-size="7.2" fill="#fff" text-anchor="middle" textLength="10.5" lengthAdjust="spacingAndGlyphs" font-weight="bold">CM</text>
</g>
<text x="23.4" y="16.1" font-size="12.3" fill="#000" textLength="342" lengthAdjust="spacingAndGlyphs">CalMAN 2016 CalMAN Ultimate for Business 102 Days Remaining</text>
<path d="M1799 10.5h10" stroke="#000" stroke-width="1" fill="none"/>
<path d="M1844.5 6.5h7v7h-7z M1846.500 6.500v-2h7v7h-2" stroke="#000" stroke-width="1" fill="none"/>
<path d="M1890 5l10 10M1900 5l-10 10" stroke="#000" stroke-width="1.1" fill="none"/>
</g>
<g id="logo-button">
<path d="M0 23H182.5V48.5Q182.5 52.5 178.5 52.5H4Q0.5 52.5 0.5 49Z" fill="url(#redbtn)"/><path d="M182.500 23.500V48.500Q182.500 52.500 178.500 52.500H4Q0.500 52.500 0.500 49V23.500" fill="none" stroke="#8a1010" stroke-width="1"/>
<text x="13" y="48" font-size="29.5" fill="#fff" textLength="129" lengthAdjust="spacingAndGlyphs" stroke="#fff" stroke-width="1.1">CalMAN</text>
<circle cx="166" cy="38" r="9.5" fill="url(#redcirc)"/>
<path d="M161 35.5h10l-5 5.5z" fill="#fff"/>
</g>
<rect id="rainbow-line" x="190" y="36" width="1722" height="4.5" fill="url(#rainbow)"/>
<g id="history-tabs">
<path d="M-2 58.5H23Q26.5 58.5 26.5 62V82Q26.5 85.5 23 85.5H-2Z" fill="url(#btngray)" stroke="#d0d0d0" stroke-width="1"/>
<circle cx="12.5" cy="71.5" r="10" fill="url(#circdark)"/>
<path d="M9.8 66.5v10l5.8-5z" fill="#fff"/>
<path d="M29.5 88.5V62Q29.5 58.5 33 58.5H117Q120.5 58.5 120.5 62V88.5Z" fill="url(#tabdark)" stroke="#606060" stroke-width="1"/>
<path d="M87.5 59V88" stroke="#606060" stroke-width="1"/>
<text x="35" y="78" font-size="11.5" fill="#e6e6e6" textLength="46.5" lengthAdjust="spacingAndGlyphs">History 1</text>
<circle cx="103" cy="74.5" r="9.5" fill="#3e3e3e"/>
<path d="M100 75h6M103 72v6" stroke="#999" stroke-width="1" fill="none"/>
</g>
<g id="device-tabs">
<path d="M1311.4 88.3V62Q1311.4 58 1315.4 58H1450.8Q1454.8 58 1454.8 62V88.3Z" fill="url(#tabgray)"/>
<path d="M1311.4 88.3V62Q1311.4 58.5 1314.9 58.2H1316.4V88.3Z" fill="#08e408"/>
<circle cx="1399.2" cy="72.8" r="10" fill="url(#circdark)"/>
<path d="M1395 70.8h8.4l-4.2 4.6z" fill="#fff"/>
<text x="1320.4" y="70" font-size="10.8" fill="#f0f0f0" textLength="66" lengthAdjust="spacingAndGlyphs">X-Rite i1Pro 2</text>
<text x="1320.4" y="84" font-size="10.8" fill="#f0f0f0" textLength="55.5" lengthAdjust="spacingAndGlyphs">Direct View</text>
<path d="M1418.5 60V88" stroke="#3a3a3a" stroke-width="1"/>
<circle cx="1439.2" cy="72.8" r="12.6" fill="#0000f0" stroke="#fff" stroke-width="1"/>
<text x="1439.2" y="76.4" font-size="9.5" fill="#fff" text-anchor="middle" textLength="15" lengthAdjust="spacingAndGlyphs" font-weight="bold">237</text>
<path d="M1461 88.3V62Q1461 58 1465 58H1664.5Q1668.5 58 1668.5 62V88.3Z" fill="url(#tabgray)"/>
<path d="M1461 88.3V62Q1461 58.5 1464.5 58.2H1466V88.3Z" fill="#08e408"/>
<circle cx="1652.3" cy="72.8" r="10" fill="url(#circdark)"/>
<path d="M1648.1 70.8h8.4l-4.2 4.6z" fill="#fff"/>
<text x="1470" y="70" font-size="10.8" fill="#f0f0f0" textLength="170" lengthAdjust="spacingAndGlyphs">CalMAN Client 3 Pattern Generator</text>
<path d="M1675 88.3V62Q1675 58 1679 58H1813.5Q1817.5 58 1817.5 62V88.3Z" fill="url(#tabgray)"/>
<path d="M1675 88.3V62Q1675 58.5 1678.5 58.2H1680V88.3Z" fill="#e8e010"/>
<circle cx="1801.7" cy="72.8" r="10" fill="url(#circdark)"/>
<path d="M1797.5 70.8h8.4l-4.2 4.6z" fill="#fff"/>
<text x="1684" y="70" font-size="10.8" fill="#f0f0f0" textLength="105.5" lengthAdjust="spacingAndGlyphs">Direct Display Control</text>
<rect x="1821.5" y="58.5" width="33" height="27" rx="3.5" fill="url(#btngray)" stroke="#c8c8c8" stroke-width="1"/>
<rect x="1857.5" y="58.5" width="33" height="27" rx="3.5" fill="url(#btngray)" stroke="#c8c8c8" stroke-width="1"/>
<rect x="1893.5" y="58.5" width="22.5" height="27" rx="3.5" fill="url(#btngray)" stroke="#c8c8c8" stroke-width="1"/>
<circle cx="1838" cy="72" r="10" fill="url(#circdark)"/><circle cx="1874" cy="72" r="10" fill="url(#circdark)"/><circle cx="1906" cy="72" r="10" fill="url(#circdark)"/>
<path d="M1842.2 72L1845 72M1840.97 74.97L1842.95 76.95M1838 76.2L1838 79M1835.03 74.97L1833.05 76.95M1833.8 72L1831 72M1835.03 69.03L1833.05 67.05M1838 67.8L1838 65M1840.97 69.03L1842.95 67.05" stroke="#ccc" stroke-width="2.4" fill="none"/>
<circle cx="1838" cy="72" r="4" fill="none" stroke="#ccc" stroke-width="2"/>
<text x="1874" y="77.5" font-size="15" fill="#e8e8e8" text-anchor="middle" font-weight="bold">?</text>
<path d="M1908.5 66.5v11l-6.5-5.5z" fill="#f0f0f0"/>
</g>
<g id="page-title">
<text x="27.8" y="151.8" font-size="40" fill="#f2f2f2" textLength="373.5" lengthAdjust="spacingAndGlyphs" class="lt" stroke="#f2f2f2" stroke-width="1.5">Saturation Sweeps</text>
</g>
<g id="deltae-chart">
<text x="208.5" y="207" font-size="15.5" fill="#ddd" text-anchor="middle" textLength="91" lengthAdjust="spacingAndGlyphs">DeltaE 2000</text>
<rect x="49.9" y="212" width="359.1" height="449.6" fill="#242424"/>
<path d="M97.6 212V661.6M145.3 212V661.6M192.9 212V661.6M240.6 212V661.6M288.3 212V661.6M336 212V661.6M383.7 212V661.6" stroke="#787878" stroke-width="1.45" fill="none"/>
<path d="M49.9 212H409V661.6H49.9Z" stroke="#909090" stroke-width="1.8" fill="none"/>
<path d="M42.9 212H49.9M42.9 286.9H49.9M42.9 361.9H49.9M42.9 436.8H49.9M42.9 511.7H49.9M42.9 586.7H49.9M42.9 661.6H49.9M49.9 661.6V668.6M97.6 661.6V668.6M145.3 661.6V668.6M192.9 661.6V668.6M240.6 661.6V668.6M288.3 661.6V668.6M336 661.6V668.6M383.7 661.6V668.6" stroke="#dcdcdc" stroke-width="1.9" fill="none"/>
<text x="49.3" y="256.7" font-size="14.8" fill="#ddd" text-anchor="end" textLength="40.5" lengthAdjust="spacingAndGlyphs">100%</text>
<text x="49.3" y="331.6" font-size="14.8" fill="#ddd" text-anchor="end" textLength="31.5" lengthAdjust="spacingAndGlyphs">80%</text>
<text x="49.3" y="406.5" font-size="14.8" fill="#ddd" text-anchor="end" textLength="31.5" lengthAdjust="spacingAndGlyphs">60%</text>
<text x="49.3" y="481.5" font-size="14.8" fill="#ddd" text-anchor="end" textLength="31.5" lengthAdjust="spacingAndGlyphs">40%</text>
<text x="49.3" y="556.4" font-size="14.8" fill="#ddd" text-anchor="end" textLength="31.5" lengthAdjust="spacingAndGlyphs">20%</text>
<text x="49.3" y="631.3" font-size="14.8" fill="#ddd" text-anchor="end" textLength="27.5" lengthAdjust="spacingAndGlyphs">100</text>
<text x="49.6" y="686" font-size="14.8" fill="#ddd" text-anchor="middle" textLength="9.5" lengthAdjust="spacingAndGlyphs">0</text>
<text x="97.3" y="686" font-size="14.8" fill="#ddd" text-anchor="middle" textLength="9.5" lengthAdjust="spacingAndGlyphs">2</text>
<text x="145" y="686" font-size="14.8" fill="#ddd" text-anchor="middle" textLength="9.5" lengthAdjust="spacingAndGlyphs">4</text>
<text x="192.6" y="686" font-size="14.8" fill="#ddd" text-anchor="middle" textLength="9.5" lengthAdjust="spacingAndGlyphs">6</text>
<text x="240.3" y="686" font-size="14.8" fill="#ddd" text-anchor="middle" textLength="9.5" lengthAdjust="spacingAndGlyphs">8</text>
<text x="288" y="686" font-size="14.8" fill="#ddd" text-anchor="middle" textLength="19" lengthAdjust="spacingAndGlyphs">10</text>
<text x="335.7" y="686" font-size="14.8" fill="#ddd" text-anchor="middle" textLength="19" lengthAdjust="spacingAndGlyphs">12</text>
<text x="383.4" y="686" font-size="14.8" fill="#ddd" text-anchor="middle" textLength="19" lengthAdjust="spacingAndGlyphs">14</text>
<rect x="50.4" y="220.1" width="34.9" height="8" fill="#000"/>
<rect x="50.9" y="221.1" width="32.9" height="5.6" fill="url(#bg0)"/>
<rect x="50.4" y="229" width="19.9" height="8" fill="#000"/>
<rect x="50.9" y="230" width="17.9" height="5.6" fill="url(#bg1)"/>
<rect x="50.4" y="237.9" width="32.3" height="8" fill="#000"/>
<rect x="50.9" y="238.9" width="30.3" height="5.6" fill="url(#bg2)"/>
<rect x="50.4" y="246.8" width="42.4" height="8" fill="#000"/>
<rect x="50.9" y="247.8" width="40.4" height="5.6" fill="url(#bg3)"/>
<rect x="50.4" y="255.7" width="29.2" height="8" fill="#000"/>
<rect x="50.9" y="256.7" width="27.2" height="5.6" fill="url(#bg4)"/>
<rect x="50.4" y="264.6" width="11.8" height="8" fill="#000"/>
<rect x="50.9" y="265.6" width="9.8" height="5.6" fill="url(#bg5)"/>
<rect x="50.4" y="295" width="29.2" height="8" fill="#000"/>
<rect x="50.9" y="296" width="27.2" height="5.6" fill="url(#bg6)"/>
<rect x="50.4" y="303.9" width="17.6" height="8" fill="#000"/>
<rect x="50.9" y="304.9" width="15.6" height="5.6" fill="url(#bg7)"/>
<rect x="50.4" y="312.8" width="36.7" height="8" fill="#000"/>
<rect x="50.9" y="313.8" width="34.7" height="5.6" fill="url(#bg8)"/>
<rect x="50.4" y="321.7" width="45" height="8" fill="#000"/>
<rect x="50.9" y="322.7" width="43" height="5.6" fill="url(#bg9)"/>
<rect x="50.4" y="330.6" width="32.3" height="8" fill="#000"/>
<rect x="50.9" y="331.6" width="30.3" height="5.6" fill="url(#bg10)"/>
<rect x="50.4" y="339.5" width="11.8" height="8" fill="#000"/>
<rect x="50.9" y="340.5" width="9.8" height="5.6" fill="url(#bg11)"/>
<rect x="50.4" y="370" width="26.3" height="8" fill="#000"/>
<rect x="50.9" y="371" width="24.3" height="5.6" fill="url(#bg12)"/>
<rect x="50.4" y="378.9" width="19.3" height="8" fill="#000"/>
<rect x="50.9" y="379.9" width="17.3" height="5.6" fill="url(#bg13)"/>
<rect x="50.4" y="387.8" width="34.3" height="8" fill="#000"/>
<rect x="50.9" y="388.8" width="32.3" height="5.6" fill="url(#bg14)"/>
<rect x="50.4" y="396.7" width="48.2" height="8" fill="#000"/>
<rect x="50.9" y="397.7" width="46.2" height="5.6" fill="url(#bg15)"/>
<rect x="50.4" y="405.6" width="33.7" height="8" fill="#000"/>
<rect x="50.9" y="406.6" width="31.7" height="5.6" fill="url(#bg16)"/>
<rect x="50.4" y="414.5" width="13.3" height="8" fill="#000"/>
<rect x="50.9" y="415.5" width="11.3" height="5.6" fill="url(#bg17)"/>
<rect x="50.4" y="444.9" width="31.2" height="8" fill="#000"/>
<rect x="50.9" y="445.9" width="29.2" height="5.6" fill="url(#bg18)"/>
<rect x="50.4" y="453.8" width="19.9" height="8" fill="#000"/>
<rect x="50.9" y="454.8" width="17.9" height="5.6" fill="url(#bg19)"/>
<rect x="50.4" y="462.7" width="43.3" height="8" fill="#000"/>
<rect x="50.9" y="463.7" width="41.3" height="5.6" fill="url(#bg20)"/>
<rect x="50.4" y="471.6" width="51.1" height="8" fill="#000"/>
<rect x="50.9" y="472.6" width="49.1" height="5.6" fill="url(#bg21)"/>
<rect x="50.4" y="480.5" width="34.3" height="8" fill="#000"/>
<rect x="50.9" y="481.5" width="32.3" height="5.6" fill="url(#bg22)"/>
<rect x="50.4" y="489.4" width="21.4" height="8" fill="#000"/>
<rect x="50.9" y="490.4" width="19.4" height="5.6" fill="url(#bg23)"/>
<rect x="50.4" y="519.8" width="37.2" height="8" fill="#000"/>
<rect x="50.9" y="520.8" width="35.2" height="5.6" fill="url(#bg24)"/>
<rect x="50.4" y="528.7" width="26.3" height="8" fill="#000"/>
<rect x="50.9" y="529.7" width="24.3" height="5.6" fill="url(#bg25)"/>
<rect x="50.4" y="537.6" width="42.4" height="8" fill="#000"/>
<rect x="50.9" y="538.6" width="40.4" height="5.6" fill="url(#bg26)"/>
<rect x="50.4" y="546.5" width="57.7" height="8" fill="#000"/>
<rect x="50.9" y="547.5" width="55.7" height="5.6" fill="url(#bg27)"/>
<rect x="50.4" y="555.4" width="45" height="8" fill="#000"/>
<rect x="50.9" y="556.4" width="43" height="5.6" fill="url(#bg28)"/>
<rect x="50.4" y="564.3" width="32.3" height="8" fill="#000"/>
<rect x="50.9" y="565.3" width="30.3" height="5.6" fill="url(#bg29)"/>
<rect x="50.4" y="648" width="110.2" height="8.4" fill="#000"/>
<rect x="50.9" y="649.3" width="108.2" height="5.5" fill="url(#bgw)"/>
</g>
<g id="deltaL-chart">
<text x="537.9" y="132.5" font-size="15.5" fill="#ddd" text-anchor="middle" textLength="48" lengthAdjust="spacingAndGlyphs">DeltaL</text>
<rect x="469.5" y="138.6" width="166.7" height="344.4" fill="#242424"/>
<path d="M469.5 196.2H636.2M469.5 253.8H636.2M469.5 311.4H636.2M469.5 369H636.2M469.5 426.6H636.2" stroke="#7c7c7c" stroke-width="1.6" fill="none"/>
<path d="M469.5 138.6H636.2V483H469.5Z" stroke="#8c8c8c" stroke-width="1.8" fill="none"/>
<path d="M469.5 140.2H636.2" stroke="#8c8c8c" stroke-width="1" fill="none"/>
<text x="464" y="144.7" font-size="14.7" fill="#ddd" text-anchor="end" textLength="18.5" lengthAdjust="spacingAndGlyphs">15</text>
<text x="464" y="202.3" font-size="14.7" fill="#ddd" text-anchor="end" textLength="18.5" lengthAdjust="spacingAndGlyphs">10</text>
<text x="464" y="259.9" font-size="14.7" fill="#ddd" text-anchor="end" textLength="9.5" lengthAdjust="spacingAndGlyphs">5</text>
<text x="464" y="317.5" font-size="14.7" fill="#ddd" text-anchor="end" textLength="9.5" lengthAdjust="spacingAndGlyphs">0</text>
<text x="464" y="375.1" font-size="14.7" fill="#ddd" text-anchor="end" textLength="15" lengthAdjust="spacingAndGlyphs">-5</text>
<text x="464" y="432.7" font-size="14.7" fill="#ddd" text-anchor="end" textLength="26" lengthAdjust="spacingAndGlyphs">-10</text>
<text x="464" y="489.1" font-size="14.7" fill="#ddd" text-anchor="end" textLength="26" lengthAdjust="spacingAndGlyphs">-15</text>
<path d="M463.5 138.6H469.5M463.5 196.2H469.5M463.5 253.8H469.5M463.5 311.4H469.5M463.5 369H469.5M463.5 426.6H469.5M463.5 483H469.5M469.5 483V489M636.2 483V489" stroke="#d8d8d8" stroke-width="1.3" fill="none"/>
<text x="552.9" y="500.5" font-size="15.5" fill="#ddd" text-anchor="middle" textLength="41" lengthAdjust="spacingAndGlyphs">100%</text>
</g>
<rect x="486" y="311.2" width="133" height="8.6" fill="#000"/>
<rect x="487.2" y="312.2" width="130.6" height="6" fill="url(#ybar)"/>
<g id="deltaC-chart">
<text x="764.9" y="132.5" font-size="15.5" fill="#ddd" text-anchor="middle" textLength="50.5" lengthAdjust="spacingAndGlyphs">DeltaC</text>
<rect x="696.2" y="138.6" width="167.3" height="344.4" fill="#242424"/>
<path d="M696.2 196.2H863.5M696.2 253.8H863.5M696.2 311.4H863.5M696.2 369H863.5M696.2 426.6H863.5" stroke="#7c7c7c" stroke-width="1.6" fill="none"/>
<path d="M696.2 138.6H863.5V483H696.2Z" stroke="#8c8c8c" stroke-width="1.8" fill="none"/>
<path d="M696.2 140.2H863.5" stroke="#8c8c8c" stroke-width="1" fill="none"/>
<text x="690.7" y="144.7" font-size="14.7" fill="#ddd" text-anchor="end" textLength="18.5" lengthAdjust="spacingAndGlyphs">15</text>
<text x="690.7" y="202.3" font-size="14.7" fill="#ddd" text-anchor="end" textLength="18.5" lengthAdjust="spacingAndGlyphs">10</text>
<text x="690.7" y="259.9" font-size="14.7" fill="#ddd" text-anchor="end" textLength="9.5" lengthAdjust="spacingAndGlyphs">5</text>
<text x="690.7" y="317.5" font-size="14.7" fill="#ddd" text-anchor="end" textLength="9.5" lengthAdjust="spacingAndGlyphs">0</text>
<text x="690.7" y="375.1" font-size="14.7" fill="#ddd" text-anchor="end" textLength="15" lengthAdjust="spacingAndGlyphs">-5</text>
<text x="690.7" y="432.7" font-size="14.7" fill="#ddd" text-anchor="end" textLength="26" lengthAdjust="spacingAndGlyphs">-10</text>
<text x="690.7" y="489.1" font-size="14.7" fill="#ddd" text-anchor="end" textLength="26" lengthAdjust="spacingAndGlyphs">-15</text>
<path d="M690.2 138.6H696.2M690.2 196.2H696.2M690.2 253.8H696.2M690.2 311.4H696.2M690.2 369H696.2M690.2 426.6H696.2M690.2 483H696.2M696.2 483V489M863.5 483V489" stroke="#d8d8d8" stroke-width="1.3" fill="none"/>
<text x="779.9" y="500.5" font-size="15.5" fill="#ddd" text-anchor="middle" textLength="41" lengthAdjust="spacingAndGlyphs">100%</text>
</g>
<rect x="712.8" y="309.4" width="133.2" height="2.4" fill="#000"/>
<g id="deltaH-chart">
<text x="992" y="132.5" font-size="15.5" fill="#ddd" text-anchor="middle" textLength="51.5" lengthAdjust="spacingAndGlyphs">DeltaH</text>
<rect x="923.6" y="138.6" width="166.8" height="344.4" fill="#242424"/>
<path d="M923.6 196.2H1090.4M923.6 253.8H1090.4M923.6 311.4H1090.4M923.6 369H1090.4M923.6 426.6H1090.4" stroke="#7c7c7c" stroke-width="1.6" fill="none"/>
<path d="M923.6 138.6H1090.4V483H923.6Z" stroke="#8c8c8c" stroke-width="1.8" fill="none"/>
<path d="M923.6 140.2H1090.4" stroke="#8c8c8c" stroke-width="1" fill="none"/>
<text x="918.1" y="144.7" font-size="14.7" fill="#ddd" text-anchor="end" textLength="18.5" lengthAdjust="spacingAndGlyphs">15</text>
<text x="918.1" y="202.3" font-size="14.7" fill="#ddd" text-anchor="end" textLength="18.5" lengthAdjust="spacingAndGlyphs">10</text>
<text x="918.1" y="259.9" font-size="14.7" fill="#ddd" text-anchor="end" textLength="9.5" lengthAdjust="spacingAndGlyphs">5</text>
<text x="918.1" y="317.5" font-size="14.7" fill="#ddd" text-anchor="end" textLength="9.5" lengthAdjust="spacingAndGlyphs">0</text>
<text x="918.1" y="375.1" font-size="14.7" fill="#ddd" text-anchor="end" textLength="15" lengthAdjust="spacingAndGlyphs">-5</text>
<text x="918.1" y="432.7" font-size="14.7" fill="#ddd" text-anchor="end" textLength="26" lengthAdjust="spacingAndGlyphs">-10</text>
<text x="918.1" y="489.1" font-size="14.7" fill="#ddd" text-anchor="end" textLength="26" lengthAdjust="spacingAndGlyphs">-15</text>
<path d="M917.6 138.6H923.6M917.6 196.2H923.6M917.6 253.8H923.6M917.6 311.4H923.6M917.6 369H923.6M917.6 426.6H923.6M917.6 483H923.6M923.6 483V489M1090.4 483V489" stroke="#d8d8d8" stroke-width="1.3" fill="none"/>
<text x="1007" y="500.5" font-size="15.5" fill="#ddd" text-anchor="middle" textLength="41" lengthAdjust="spacingAndGlyphs">100%</text>
</g>
<rect x="939.8" y="310.6" width="133.2" height="1" fill="#000"/>
<g id="swatches">
<rect x="432" y="519" width="681" height="176.6" fill="#000"/>
<rect x="455.2" y="526.3" width="114.4" height="143.9" fill="#c2bd9f"/>
<rect x="455.2" y="598.6" width="114.4" height="71.6" fill="#bfbfa5"/>
<rect x="455.2" y="526.3" width="114.4" height="143.9" fill="none" stroke="#f4f4f4" stroke-width="1"/>
<text x="512.4" y="686.5" font-size="13" fill="#fff" text-anchor="middle" textLength="27.5" lengthAdjust="spacingAndGlyphs" font-weight="bold">20%</text>
<rect x="588" y="526.3" width="114.4" height="143.9" fill="#c1bd84"/>
<rect x="588" y="598.6" width="114.4" height="71.6" fill="#c0bf87"/>
<rect x="588" y="526.3" width="114.4" height="143.9" fill="none" stroke="#f4f4f4" stroke-width="1"/>
<text x="645.2" y="686.5" font-size="13" fill="#fff" text-anchor="middle" textLength="27.5" lengthAdjust="spacingAndGlyphs" font-weight="bold">40%</text>
<rect x="721" y="526.3" width="114.4" height="143.9" fill="#bfbc69"/>
<rect x="721" y="598.6" width="114.4" height="71.6" fill="#c0be6d"/>
<rect x="721" y="526.3" width="114.4" height="143.9" fill="none" stroke="#f4f4f4" stroke-width="1"/>
<text x="778.2" y="686.5" font-size="13" fill="#fff" text-anchor="middle" textLength="27.5" lengthAdjust="spacingAndGlyphs" font-weight="bold">60%</text>
<rect x="855" y="526.3" width="114.4" height="143.9" fill="#bfbb4b"/>
<rect x="855" y="598.6" width="114.4" height="71.6" fill="#c0bf4f"/>
<rect x="855" y="526.3" width="114.4" height="143.9" fill="none" stroke="#f4f4f4" stroke-width="1"/>
<text x="912.2" y="686.5" font-size="13" fill="#fff" text-anchor="middle" textLength="27.5" lengthAdjust="spacingAndGlyphs" font-weight="bold">80%</text>
<rect x="988" y="526.3" width="114.4" height="143.9" fill="#c1bf02"/>
<rect x="988" y="598.6" width="114.4" height="71.6" fill="#c2c200"/>
<rect x="988" y="526.3" width="114.4" height="143.9" fill="none" stroke="#f4f4f4" stroke-width="1"/>
<text x="1045.2" y="686.5" font-size="13" fill="#fff" text-anchor="middle" textLength="35" lengthAdjust="spacingAndGlyphs" font-weight="bold">100%</text>
<text transform="translate(446.5 577.5) rotate(-90)" font-size="13" fill="#fff" font-weight="bold" textLength="38.5" lengthAdjust="spacingAndGlyphs">Actual</text>
<text transform="translate(446.5 658) rotate(-90)" font-size="13" fill="#fff" font-weight="bold" textLength="38" lengthAdjust="spacingAndGlyphs">Target</text>
</g>
<g id="cie-chart">
<rect x="1120" y="103.5" width="800" height="608" fill="#1c1c1c"/>
<rect x="1128" y="111" width="792" height="592.8" fill="#323232"/>
<text x="1519.5" y="131" font-size="15.5" fill="#ddd" text-anchor="middle" textLength="87" lengthAdjust="spacingAndGlyphs">CIE 1931 xy</text>
<rect x="1161.4" y="136.7" width="745.2" height="535.7" fill="#242424"/>
<g clip-path="url(#locclip)" shape-rendering="crispEdges">
<rect x="1214" y="140" width="39.8" height="3.6" fill="url(#c0)"/>
<rect x="1206.5" y="143" width="58.8" height="3.6" fill="url(#c1)"/>
<rect x="1201.5" y="146" width="73.3" height="3.6" fill="url(#c2)"/>
<rect x="1197.5" y="149" width="85.7" height="3.6" fill="url(#c3)"/>
<rect x="1194" y="152" width="97.1" height="3.6" fill="url(#c4)"/>
<rect x="1191.2" y="155" width="107.2" height="3.6" fill="url(#c5)"/>
<rect x="1188.6" y="158" width="116.9" height="3.6" fill="url(#c6)"/>
<rect x="1186.5" y="161" width="125.9" height="3.6" fill="url(#c7)"/>
<rect x="1184.3" y="164" width="134.7" height="3.6" fill="url(#c8)"/>
<rect x="1182.6" y="167" width="142.8" height="3.6" fill="url(#c9)"/>
<rect x="1180.9" y="170" width="150.6" height="3.6" fill="url(#c10)"/>
<rect x="1179.4" y="173" width="158.2" height="3.6" fill="url(#c11)"/>
<rect x="1178" y="176" width="165.4" height="3.6" fill="url(#c12)"/>
<rect x="1176.7" y="179" width="172.4" height="3.6" fill="url(#c13)"/>
<rect x="1175.4" y="182" width="179.2" height="3.6" fill="url(#c14)"/>
<rect x="1174.4" y="185" width="185.7" height="3.6" fill="url(#c15)"/>
<rect x="1173.3" y="188" width="192.1" height="3.6" fill="url(#c16)"/>
<rect x="1172.3" y="191" width="198.4" height="3.6" fill="url(#c17)"/>
<rect x="1171.5" y="194" width="204.4" height="3.6" fill="url(#c18)"/>
<rect x="1170.7" y="197" width="210.3" height="3.6" fill="url(#c19)"/>
<rect x="1169.8" y="200" width="216.1" height="3.6" fill="url(#c20)"/>
<rect x="1169.1" y="203" width="221.8" height="3.6" fill="url(#c21)"/>
<rect x="1168.5" y="206" width="227.3" height="3.6" fill="url(#c22)"/>
<rect x="1167.9" y="209" width="232.7" height="3.6" fill="url(#c23)"/>
<rect x="1167.3" y="212" width="238.1" height="3.6" fill="url(#c24)"/>
<rect x="1166.8" y="215" width="243.3" height="3.6" fill="url(#c25)"/>
<rect x="1166.4" y="218" width="248.4" height="3.6" fill="url(#c26)"/>
<rect x="1166" y="221" width="253.5" height="3.6" fill="url(#c27)"/>
<rect x="1165.5" y="224" width="258.5" height="3.6" fill="url(#c28)"/>
<rect x="1165.2" y="227" width="263.4" height="3.6" fill="url(#c29)"/>
<rect x="1164.9" y="230" width="268.3" height="3.6" fill="url(#c30)"/>
<rect x="1164.6" y="233" width="273.1" height="3.6" fill="url(#c31)"/>
<rect x="1164.3" y="236" width="277.9" height="3.6" fill="url(#c32)"/>
<rect x="1164.1" y="239" width="282.6" height="3.6" fill="url(#c33)"/>
<rect x="1163.9" y="242" width="287.2" height="3.6" fill="url(#c34)"/>
<rect x="1163.8" y="245" width="291.8" height="3.6" fill="url(#c35)"/>
<rect x="1163.6" y="248" width="296.3" height="3.6" fill="url(#c36)"/>
<rect x="1163.5" y="251" width="300.9" height="3.6" fill="url(#c37)"/>
<rect x="1163.4" y="254" width="305.3" height="3.6" fill="url(#c38)"/>
<rect x="1163.4" y="257" width="309.7" height="3.6" fill="url(#c39)"/>
<rect x="1163.3" y="260" width="314.1" height="3.6" fill="url(#c40)"/>
<rect x="1163.3" y="263" width="318.5" height="3.6" fill="url(#c41)"/>
<rect x="1163.2" y="266" width="322.8" height="3.6" fill="url(#c42)"/>
<rect x="1163.2" y="269" width="327.1" height="3.6" fill="url(#c43)"/>
<rect x="1163.3" y="272" width="331.4" height="3.6" fill="url(#c44)"/>
<rect x="1163.4" y="275" width="335.6" height="3.6" fill="url(#c45)"/>
<rect x="1163.4" y="278" width="339.8" height="3.6" fill="url(#c46)"/>
<rect x="1163.5" y="281" width="344" height="3.6" fill="url(#c47)"/>
<rect x="1163.6" y="284" width="348.2" height="3.6" fill="url(#c48)"/>
<rect x="1163.8" y="287" width="352.3" height="3.6" fill="url(#c49)"/>
<rect x="1163.9" y="290" width="356.4" height="3.6" fill="url(#c50)"/>
<rect x="1164.1" y="293" width="360.5" height="3.6" fill="url(#c51)"/>
<rect x="1164.2" y="296" width="364.6" height="3.6" fill="url(#c52)"/>
<rect x="1164.4" y="299" width="368.6" height="3.6" fill="url(#c53)"/>
<rect x="1164.7" y="302" width="372.6" height="3.6" fill="url(#c54)"/>
<rect x="1164.9" y="305" width="376.6" height="3.6" fill="url(#c55)"/>
<rect x="1165.2" y="308" width="380.6" height="3.6" fill="url(#c56)"/>
<rect x="1165.4" y="311" width="384.6" height="3.6" fill="url(#c57)"/>
<rect x="1165.7" y="314" width="388.5" height="3.6" fill="url(#c58)"/>
<rect x="1166" y="317" width="392.4" height="3.6" fill="url(#c59)"/>
<rect x="1166.3" y="320" width="396.3" height="3.6" fill="url(#c60)"/>
<rect x="1166.6" y="323" width="400.2" height="3.6" fill="url(#c61)"/>
<rect x="1166.9" y="326" width="404.1" height="3.6" fill="url(#c62)"/>
<rect x="1167.3" y="329" width="408" height="3.6" fill="url(#c63)"/>
<rect x="1167.7" y="332" width="411.8" height="3.6" fill="url(#c64)"/>
<rect x="1168" y="335" width="415.6" height="3.6" fill="url(#c65)"/>
<rect x="1168.4" y="338" width="419.4" height="3.6" fill="url(#c66)"/>
<rect x="1168.8" y="341" width="423.2" height="3.6" fill="url(#c67)"/>
<rect x="1169.2" y="344" width="427" height="3.6" fill="url(#c68)"/>
<rect x="1169.6" y="347" width="430.8" height="3.6" fill="url(#c69)"/>
<rect x="1170.1" y="350" width="434.5" height="3.6" fill="url(#c70)"/>
<rect x="1170.5" y="353" width="438.3" height="3.6" fill="url(#c71)"/>
<rect x="1171" y="356" width="442" height="3.6" fill="url(#c72)"/>
<rect x="1171.4" y="359" width="445.7" height="3.6" fill="url(#c73)"/>
<rect x="1171.9" y="362" width="449.5" height="3.6" fill="url(#c74)"/>
<rect x="1172.4" y="365" width="453.1" height="3.6" fill="url(#c75)"/>
<rect x="1172.9" y="368" width="456.8" height="3.6" fill="url(#c76)"/>
<rect x="1173.4" y="371" width="460.5" height="3.6" fill="url(#c77)"/>
<rect x="1173.9" y="374" width="464.2" height="3.6" fill="url(#c78)"/>
<rect x="1174.4" y="377" width="467.9" height="3.6" fill="url(#c79)"/>
<rect x="1175" y="380" width="471.5" height="3.6" fill="url(#c80)"/>
<rect x="1175.6" y="383" width="475.2" height="3.6" fill="url(#c81)"/>
<rect x="1176.2" y="386" width="478.8" height="3.6" fill="url(#c82)"/>
<rect x="1176.7" y="389" width="482.4" height="3.6" fill="url(#c83)"/>
<rect x="1177.3" y="392" width="486.1" height="3.6" fill="url(#c84)"/>
<rect x="1177.9" y="395" width="489.6" height="3.6" fill="url(#c85)"/>
<rect x="1178.5" y="398" width="493.2" height="3.6" fill="url(#c86)"/>
<rect x="1179.1" y="401" width="496.8" height="3.6" fill="url(#c87)"/>
<rect x="1179.8" y="404" width="500.3" height="3.6" fill="url(#c88)"/>
<rect x="1180.4" y="407" width="503.9" height="3.6" fill="url(#c89)"/>
<rect x="1181" y="410" width="507.4" height="3.6" fill="url(#c90)"/>
<rect x="1181.7" y="413" width="510.9" height="3.6" fill="url(#c91)"/>
<rect x="1182.4" y="416" width="514.4" height="3.6" fill="url(#c92)"/>
<rect x="1183.1" y="419" width="518" height="3.6" fill="url(#c93)"/>
<rect x="1183.8" y="422" width="521.5" height="3.6" fill="url(#c94)"/>
<rect x="1184.4" y="425" width="525" height="3.6" fill="url(#c95)"/>
<rect x="1185.2" y="428" width="528.5" height="3.6" fill="url(#c96)"/>
<rect x="1185.9" y="431" width="531.9" height="3.6" fill="url(#c97)"/>
<rect x="1186.6" y="434" width="535.4" height="3.6" fill="url(#c98)"/>
<rect x="1187.4" y="437" width="538.8" height="3.6" fill="url(#c99)"/>
<rect x="1188.1" y="440" width="542.3" height="3.6" fill="url(#c100)"/>
<rect x="1188.9" y="443" width="545.7" height="3.6" fill="url(#c101)"/>
<rect x="1189.7" y="446" width="549.2" height="3.6" fill="url(#c102)"/>
<rect x="1190.5" y="449" width="552.6" height="3.6" fill="url(#c103)"/>
<rect x="1191.2" y="452" width="556" height="3.6" fill="url(#c104)"/>
<rect x="1192" y="455" width="559.4" height="3.6" fill="url(#c105)"/>
<rect x="1192.8" y="458" width="562.8" height="3.6" fill="url(#c106)"/>
<rect x="1193.7" y="461" width="566.2" height="3.6" fill="url(#c107)"/>
<rect x="1194.5" y="464" width="569.6" height="3.6" fill="url(#c108)"/>
<rect x="1195.3" y="467" width="572.9" height="3.6" fill="url(#c109)"/>
<rect x="1196.2" y="470" width="576.3" height="3.6" fill="url(#c110)"/>
<rect x="1197" y="473" width="579.6" height="3.6" fill="url(#c111)"/>
<rect x="1197.9" y="476" width="582.9" height="3.6" fill="url(#c112)"/>
<rect x="1198.8" y="479" width="586.2" height="3.6" fill="url(#c113)"/>
<rect x="1199.7" y="482" width="589.5" height="3.6" fill="url(#c114)"/>
<rect x="1200.6" y="485" width="592.8" height="3.6" fill="url(#c115)"/>
<rect x="1201.5" y="488" width="596.1" height="3.6" fill="url(#c116)"/>
<rect x="1202.4" y="491" width="599.4" height="3.6" fill="url(#c117)"/>
<rect x="1203.4" y="494" width="602.6" height="3.6" fill="url(#c118)"/>
<rect x="1204.3" y="497" width="605.9" height="3.6" fill="url(#c119)"/>
<rect x="1205.2" y="500" width="609.1" height="3.6" fill="url(#c120)"/>
<rect x="1206.2" y="503" width="608.2" height="3.6" fill="url(#c121)"/>
<rect x="1207.2" y="506" width="598.3" height="3.6" fill="url(#c122)"/>
<rect x="1208.2" y="509" width="588.4" height="3.6" fill="url(#c123)"/>
<rect x="1209.2" y="512" width="578.4" height="3.6" fill="url(#c124)"/>
<rect x="1210.2" y="515" width="568.3" height="3.6" fill="url(#c125)"/>
<rect x="1211.2" y="518" width="558.3" height="3.6" fill="url(#c126)"/>
<rect x="1212.3" y="521" width="548.3" height="3.6" fill="url(#c127)"/>
<rect x="1213.3" y="524" width="538.2" height="3.6" fill="url(#c128)"/>
<rect x="1214.4" y="527" width="528.1" height="3.6" fill="url(#c129)"/>
<rect x="1215.5" y="530" width="518" height="3.6" fill="url(#c130)"/>
<rect x="1216.6" y="533" width="507.9" height="3.6" fill="url(#c131)"/>
<rect x="1217.8" y="536" width="497.8" height="3.6" fill="url(#c132)"/>
<rect x="1219" y="539" width="487.6" height="3.6" fill="url(#c133)"/>
<rect x="1220.1" y="542" width="477.4" height="3.6" fill="url(#c134)"/>
<rect x="1221.3" y="545" width="467.2" height="3.6" fill="url(#c135)"/>
<rect x="1222.6" y="548" width="457" height="3.6" fill="url(#c136)"/>
<rect x="1223.9" y="551" width="446.7" height="3.6" fill="url(#c137)"/>
<rect x="1225.1" y="554" width="436.5" height="3.6" fill="url(#c138)"/>
<rect x="1226.5" y="557" width="426.1" height="3.6" fill="url(#c139)"/>
<rect x="1227.8" y="560" width="415.8" height="3.6" fill="url(#c140)"/>
<rect x="1229.1" y="563" width="405.5" height="3.6" fill="url(#c141)"/>
<rect x="1230.5" y="566" width="395.1" height="3.6" fill="url(#c142)"/>
<rect x="1231.9" y="569" width="384.7" height="3.6" fill="url(#c143)"/>
<rect x="1233.3" y="572" width="374.3" height="3.6" fill="url(#c144)"/>
<rect x="1234.8" y="575" width="363.8" height="3.6" fill="url(#c145)"/>
<rect x="1236.3" y="578" width="353.3" height="3.6" fill="url(#c146)"/>
<rect x="1237.7" y="581" width="342.9" height="3.6" fill="url(#c147)"/>
<rect x="1239.3" y="584" width="332.4" height="3.6" fill="url(#c148)"/>
<rect x="1240.8" y="587" width="321.8" height="3.6" fill="url(#c149)"/>
<rect x="1242.3" y="590" width="311.3" height="3.6" fill="url(#c150)"/>
<rect x="1243.9" y="593" width="300.7" height="3.6" fill="url(#c151)"/>
<rect x="1245.5" y="596" width="290.2" height="3.6" fill="url(#c152)"/>
<rect x="1247.1" y="599" width="279.6" height="3.6" fill="url(#c153)"/>
<rect x="1248.7" y="602" width="268.9" height="3.6" fill="url(#c154)"/>
<rect x="1250.4" y="605" width="258.3" height="3.6" fill="url(#c155)"/>
<rect x="1252.1" y="608" width="247.6" height="3.6" fill="url(#c156)"/>
<rect x="1253.8" y="611" width="236.8" height="3.6" fill="url(#c157)"/>
<rect x="1255.6" y="614" width="226.1" height="3.6" fill="url(#c158)"/>
<rect x="1257.4" y="617" width="215.2" height="3.6" fill="url(#c159)"/>
<rect x="1259.3" y="620" width="204.3" height="3.6" fill="url(#c160)"/>
<rect x="1261.3" y="623" width="193.4" height="3.6" fill="url(#c161)"/>
<rect x="1263.3" y="626" width="182.3" height="3.6" fill="url(#c162)"/>
<rect x="1265.4" y="629" width="171.2" height="3.6" fill="url(#c163)"/>
<rect x="1267.6" y="632" width="160" height="3.6" fill="url(#c164)"/>
<rect x="1270" y="635" width="148.7" height="3.6" fill="url(#c165)"/>
<rect x="1272.4" y="638" width="137.3" height="3.6" fill="url(#c166)"/>
<rect x="1274.9" y="641" width="125.8" height="3.6" fill="url(#c167)"/>
<rect x="1277.6" y="644" width="114" height="3.6" fill="url(#c168)"/>
<rect x="1280.6" y="647" width="102.1" height="3.6" fill="url(#c169)"/>
<rect x="1283.8" y="650" width="89.9" height="3.6" fill="url(#c170)"/>
<rect x="1287.5" y="653" width="77.2" height="3.6" fill="url(#c171)"/>
<rect x="1291.6" y="656" width="64.1" height="3.6" fill="url(#c172)"/>
<rect x="1296.1" y="659" width="50.6" height="3.6" fill="url(#c173)"/>
<rect x="1300.8" y="662" width="36.9" height="3.6" fill="url(#c174)"/>
<rect x="1305.6" y="665" width="23.1" height="3.6" fill="url(#c175)"/>
<rect x="1310.3" y="668" width="9.4" height="3.6" fill="url(#c176)"/>
</g>
<path d="M1315.6 669L1314.1 669.1L1312.6 668.7L1311.3 668L1309.6 667L1307.9 665.9L1306.5 664.9L1304.7 663.8L1303.4 663L1301.8 662L1300.1 660.9L1298.2 659.7L1296.2 658.4L1293.9 656.9L1291.5 655.2L1290.2 654.3L1288.8 653.3L1287.5 652.2L1286 651L1284.5 649.8L1283 648.4L1281.3 646.8L1279.6 645L1277.7 642.9L1275.6 640.7L1273.5 638.1L1271.2 635.3L1268.9 632.3L1266.4 629L1263.8 625.3L1261.1 621.3L1258.3 616.8L1255.4 612L1252.3 606.6L1249 600.8L1245.6 594.4L1242.1 587.6L1238.3 580.2L1234.4 572.2L1230.4 563.5L1226.2 554.2L1222 544.2L1217.8 533.5L1213.7 522.2L1209.5 510.2L1205.4 497.5L1201.3 484.1L1197.2 470.1L1193.1 455.5L1189.2 440.4L1185.4 424.9L1181.8 409.1L1178.5 393.1L1175.4 377L1172.7 360.9L1170.3 344.9L1168.3 328.9L1166.6 313.2L1165.3 297.9L1164.5 283L1164.2 268.6L1164.4 254.7L1165.1 241.2L1166.3 228.4L1168.1 216.1L1170.4 204.6L1173.3 193.9L1176.8 184L1180.8 175.1L1185.2 167.2L1190.1 160.3L1195.5 154.5L1201.3 149.8L1207.3 146.1L1213.7 143.4L1220.2 141.5L1227 140.6L1233.9 140.4L1240.9 140.9L1248 142L1255.1 143.5L1262.4 145.4L1269.6 147.6L1276.9 150.1L1284.2 152.7L1291.3 155.5L1298.4 158.4L1305.3 161.3L1312.2 164.3L1318.9 167.4L1325.6 170.6L1332.3 173.8L1338.9 177.2L1345.4 180.6L1351.9 184.1L1358.4 187.6L1364.9 191.2L1371.4 194.9L1377.8 198.7L1384.2 202.5L1390.6 206.4L1397 210.4L1403.4 214.4L1409.8 218.4L1416.1 222.5L1422.5 226.6L1428.8 230.8L1435.2 235L1441.5 239.2L1447.9 243.5L1454.2 247.8L1460.6 252.1L1466.9 256.5L1473.3 260.8L1479.6 265.2L1486 269.6L1492.3 274.1L1498.7 278.5L1505 282.9L1511.3 287.4L1517.6 291.8L1524 296.3L1530.3 300.7L1536.6 305.2L1542.8 309.6L1549.1 314.1L1555.3 318.5L1561.5 322.9L1567.7 327.4L1573.9 331.8L1580 336.2L1586.2 340.5L1592.2 344.9L1598.3 349.2L1604.2 353.5L1610.2 357.7L1616.1 361.9L1621.9 366.1L1627.7 370.3L1633.5 374.4L1639.2 378.4L1644.8 382.5L1650.3 386.4L1655.8 390.3L1661.2 394.2L1666.5 398L1671.7 401.7L1676.9 405.4L1681.9 409L1686.9 412.6L1691.7 416L1696.4 419.4L1700.9 422.6L1705.3 425.8L1709.6 428.8L1713.7 431.8L1717.8 434.7L1721.8 437.5L1725.7 440.3L1729.5 443L1733.1 445.6L1736.6 448.2L1740 450.6L1743.2 452.9L1746.3 455.1L1749.3 457.2L1752.2 459.2L1755 461.2L1757.6 463.1L1760.2 464.9L1762.6 466.7L1764.9 468.3L1767.1 469.9L1769.3 471.4L1771.3 472.9L1773.2 474.3L1775.1 475.6L1776.8 476.9L1778.5 478.1L1780.1 479.2L1781.7 480.3L1783.1 481.4L1784.5 482.4L1785.9 483.3L1787.2 484.3L1788.4 485.1L1790.8 486.8L1793 488.4L1795.1 489.9L1796.9 491.2L1798.7 492.5L1800.3 493.6L1801.7 494.7L1803.1 495.6L1804.7 496.8L1806.1 497.8L1807.7 498.9L1809 499.8L1810.2 500.7L1811.5 501.7L1812.8 502.6L1813.4 503Z M1729.3 461.8L1427.4 289.6L1294.2 633.9Z" fill="#000" fill-opacity="0.4" fill-rule="evenodd"/>
<path d="M1161.4 136.7H1906.6V672.4H1161.4Z" stroke="#909090" stroke-width="1.8" fill="none"/>
<text x="1161.3" y="696" font-size="14.8" fill="#ddd" text-anchor="middle" textLength="9.5" lengthAdjust="spacingAndGlyphs">0</text>
<text x="1155.4" y="679" font-size="14.8" fill="#ddd" text-anchor="end" textLength="9.5" lengthAdjust="spacingAndGlyphs">0</text>
<text x="1250.1" y="696" font-size="14.8" fill="#ddd" text-anchor="middle" textLength="23.5" lengthAdjust="spacingAndGlyphs">0,1</text>
<text x="1155.4" y="615.2" font-size="14.8" fill="#ddd" text-anchor="end" textLength="23.5" lengthAdjust="spacingAndGlyphs">0,1</text>
<text x="1338.9" y="696" font-size="14.8" fill="#ddd" text-anchor="middle" textLength="23.5" lengthAdjust="spacingAndGlyphs">0,2</text>
<text x="1155.4" y="551.5" font-size="14.8" fill="#ddd" text-anchor="end" textLength="23.5" lengthAdjust="spacingAndGlyphs">0,2</text>
<text x="1427.7" y="696" font-size="14.8" fill="#ddd" text-anchor="middle" textLength="23.5" lengthAdjust="spacingAndGlyphs">0,3</text>
<text x="1155.4" y="487.7" font-size="14.8" fill="#ddd" text-anchor="end" textLength="23.5" lengthAdjust="spacingAndGlyphs">0,3</text>
<text x="1516.5" y="696" font-size="14.8" fill="#ddd" text-anchor="middle" textLength="23.5" lengthAdjust="spacingAndGlyphs">0,4</text>
<text x="1155.4" y="424" font-size="14.8" fill="#ddd" text-anchor="end" textLength="23.5" lengthAdjust="spacingAndGlyphs">0,4</text>
<text x="1605.3" y="696" font-size="14.8" fill="#ddd" text-anchor="middle" textLength="23.5" lengthAdjust="spacingAndGlyphs">0,5</text>
<text x="1155.4" y="360.2" font-size="14.8" fill="#ddd" text-anchor="end" textLength="23.5" lengthAdjust="spacingAndGlyphs">0,5</text>
<text x="1694.1" y="696" font-size="14.8" fill="#ddd" text-anchor="middle" textLength="23.5" lengthAdjust="spacingAndGlyphs">0,6</text>
<text x="1155.4" y="296.4" font-size="14.8" fill="#ddd" text-anchor="end" textLength="23.5" lengthAdjust="spacingAndGlyphs">0,6</text>
<text x="1782.9" y="696" font-size="14.8" fill="#ddd" text-anchor="middle" textLength="23.5" lengthAdjust="spacingAndGlyphs">0,7</text>
<text x="1155.4" y="232.7" font-size="14.8" fill="#ddd" text-anchor="end" textLength="23.5" lengthAdjust="spacingAndGlyphs">0,7</text>
<text x="1871.7" y="696" font-size="14.8" fill="#ddd" text-anchor="middle" textLength="23.5" lengthAdjust="spacingAndGlyphs">0,8</text>
<text x="1155.4" y="168.9" font-size="14.8" fill="#ddd" text-anchor="end" textLength="23.5" lengthAdjust="spacingAndGlyphs">0,8</text>
<path d="M1161 672.4V678.4M1155.4 673.1H1161.4M1249.8 672.4V678.4M1155.4 609.3H1161.4M1338.6 672.4V678.4M1155.4 545.6H1161.4M1427.4 672.4V678.4M1155.4 481.8H1161.4M1516.2 672.4V678.4M1155.4 418.1H1161.4M1605 672.4V678.4M1155.4 354.3H1161.4M1693.8 672.4V678.4M1155.4 290.5H1161.4M1782.6 672.4V678.4M1155.4 226.8H1161.4M1871.4 672.4V678.4M1155.4 163H1161.4" stroke="#d8d8d8" stroke-width="1.5" fill="none"/>
<g id="cie-markers"><rect x="1415.6" y="454.6" width="15.7" height="15.7" fill="none" stroke="#fff" stroke-width="1.4"/><rect x="1400" y="454.6" width="15.7" height="15.7" fill="none" stroke="#fff" stroke-width="1.4"/><rect x="1384.4" y="454.6" width="15.7" height="15.7" fill="none" stroke="#fff" stroke-width="1.4"/><rect x="1369" y="454.6" width="15.7" height="15.7" fill="none" stroke="#fff" stroke-width="1.4"/><rect x="1352.4" y="454.6" width="15.7" height="15.7" fill="none" stroke="#fff" stroke-width="1.4"/><rect x="1428.5" y="418.9" width="15.7" height="15.7" fill="none" stroke="#fff" stroke-width="1.4"/><rect x="1426.7" y="385" width="15.7" height="15.7" fill="none" stroke="#fff" stroke-width="1.4"/><rect x="1423.6" y="352.5" width="15.7" height="15.7" fill="none" stroke="#fff" stroke-width="1.4"/><rect x="1422.2" y="318.2" width="15.7" height="15.7" fill="none" stroke="#fff" stroke-width="1.4"/><rect x="1418.7" y="281" width="15.7" height="15.7" fill="none" stroke="#fff" stroke-width="1.4"/><rect x="1450.8" y="431" width="15.7" height="15.7" fill="none" stroke="#fff" stroke-width="1.4"/><rect x="1469.2" y="407" width="15.7" height="15.7" fill="none" stroke="#fff" stroke-width="1.4"/><rect x="1487.7" y="386.4" width="15.7" height="15.7" fill="none" stroke="#fff" stroke-width="1.4"/><rect x="1505.1" y="366" width="15.7" height="15.7" fill="none" stroke="#fff" stroke-width="1.4"/><rect x="1525.6" y="342.1" width="15.7" height="15.7" fill="none" stroke="#fff" stroke-width="1.4"/><rect x="1487.7" y="453.1" width="15.7" height="15.7" fill="none" stroke="#fff" stroke-width="1.4"/><rect x="1547.7" y="453.1" width="15.7" height="15.7" fill="none" stroke="#fff" stroke-width="1.4"/><rect x="1600.7" y="453.1" width="15.7" height="15.7" fill="none" stroke="#fff" stroke-width="1.4"/><rect x="1656.6" y="453.1" width="15.7" height="15.7" fill="none" stroke="#fff" stroke-width="1.4"/><rect x="1721.1" y="453.1" width="15.7" height="15.7" fill="none" stroke="#fff" stroke-width="1.4"/><rect x="1433.2" y="476.9" width="15.7" height="15.7" fill="none" stroke="#fff" stroke-width="1.4"/><rect x="1434.7" y="500.3" width="15.7" height="15.7" fill="none" stroke="#fff" stroke-width="1.4"/><rect x="1434.8" y="519.9" width="15.7" height="15.7" fill="none" stroke="#fff" stroke-width="1.4"/><rect x="1436.2" y="541.6" width="15.7" height="15.7" fill="none" stroke="#fff" stroke-width="1.4"/><rect x="1437.7" y="566.1" width="15.7" height="15.7" fill="none" stroke="#fff" stroke-width="1.4"/><rect x="1401.7" y="489" width="15.7" height="15.7" fill="none" stroke="#fff" stroke-width="1.4"/><rect x="1373.6" y="523" width="15.7" height="15.7" fill="none" stroke="#fff" stroke-width="1.4"/><rect x="1345.7" y="555.6" width="15.7" height="15.7" fill="none" stroke="#fff" stroke-width="1.4"/><rect x="1317.1" y="588" width="15.7" height="15.7" fill="none" stroke="#fff" stroke-width="1.4"/><rect x="1285.7" y="625.1" width="15.7" height="15.7" fill="none" stroke="#fff" stroke-width="1.4"/><rect x="1432" y="455.2" width="14.9" height="14.9" fill="none" stroke="#000" stroke-width="1.8"/><circle cx="1425.4" cy="458" r="4.8" fill="#9cbfbf" stroke="#000" stroke-width="1.3"/><circle cx="1409.5" cy="458" r="4.8" fill="#79bfbf" stroke="#000" stroke-width="1.3"/><circle cx="1393.5" cy="458" r="4.8" fill="#54bfbf" stroke="#000" stroke-width="1.3"/><circle cx="1379.5" cy="456.5" r="4.8" fill="#2dbfbf" stroke="#000" stroke-width="1.3"/><circle cx="1362.4" cy="456.5" r="4.8" fill="#00bfbf" stroke="#000" stroke-width="1.3"/><circle cx="1437.6" cy="424.1" r="4.8" fill="#9cbf9c" stroke="#000" stroke-width="1.3"/><circle cx="1436.5" cy="390" r="4.8" fill="#79bf79" stroke="#000" stroke-width="1.3"/><circle cx="1434.5" cy="359.1" r="4.8" fill="#54bf54" stroke="#000" stroke-width="1.3"/><circle cx="1429.4" cy="328" r="4.8" fill="#2dbf2d" stroke="#000" stroke-width="1.3"/><circle cx="1429.4" cy="291.1" r="4.8" fill="#00bf00" stroke="#000" stroke-width="1.3"/><circle cx="1461.4" cy="436.1" r="4.8" fill="#bfbf9c" stroke="#000" stroke-width="1.3"/><circle cx="1481.3" cy="414" r="4.8" fill="#bfbf79" stroke="#000" stroke-width="1.3"/><circle cx="1497.4" cy="391.9" r="4.8" fill="#bfbf54" stroke="#000" stroke-width="1.3"/><circle cx="1512.5" cy="372.1" r="4.8" fill="#bfbf2d" stroke="#000" stroke-width="1.3"/><circle cx="1533.4" cy="350" r="4.8" fill="#bfbf00" stroke="#000" stroke-width="1.3"/><circle cx="1497.4" cy="459.5" r="4.8" fill="#bf9c9c" stroke="#000" stroke-width="1.3"/><circle cx="1555.5" cy="459.3" r="4.8" fill="#bf7979" stroke="#000" stroke-width="1.3"/><circle cx="1605.7" cy="459.4" r="4.8" fill="#bf5454" stroke="#000" stroke-width="1.3"/><circle cx="1661.5" cy="459.4" r="4.8" fill="#bf2d2d" stroke="#000" stroke-width="1.3"/><circle cx="1730.5" cy="459.4" r="4.8" fill="#bf0000" stroke="#000" stroke-width="1.3"/><circle cx="1442.4" cy="480.5" r="4.8" fill="#bf9cbf" stroke="#000" stroke-width="1.3"/><circle cx="1444.5" cy="504" r="4.8" fill="#bf79bf" stroke="#000" stroke-width="1.3"/><circle cx="1445.5" cy="523.6" r="4.8" fill="#bf54bf" stroke="#000" stroke-width="1.3"/><circle cx="1447.5" cy="546.8" r="4.8" fill="#bf2dbf" stroke="#000" stroke-width="1.3"/><circle cx="1447.5" cy="571.1" r="4.8" fill="#bf00bf" stroke="#000" stroke-width="1.3"/><circle cx="1412.6" cy="492" r="4.8" fill="#9c9cbf" stroke="#000" stroke-width="1.3"/><circle cx="1383" cy="525" r="4.8" fill="#7979bf" stroke="#000" stroke-width="1.3"/><circle cx="1354.5" cy="560.7" r="4.8" fill="#5454bf" stroke="#000" stroke-width="1.3"/><circle cx="1326.3" cy="593" r="4.8" fill="#2d2dbf" stroke="#000" stroke-width="1.3"/><circle cx="1293.5" cy="633" r="4.8" fill="#0000bf" stroke="#000" stroke-width="1.3"/><circle cx="1440.5" cy="456.3" r="4.8" fill="#fff" stroke="#000" stroke-width="1.3"/></g>
<g id="cie-inset">
<rect x="1645" y="141" width="257.5" height="207" fill="#3a3a3a"/>
<g clip-path="url(#insclip)">
<g shape-rendering="crispEdges">
<rect x="1647.6" y="144.8" width="253" height="6.6" fill="url(#i0)"/>
<rect x="1647.6" y="150.8" width="253" height="6.6" fill="url(#i1)"/>
<rect x="1647.6" y="156.8" width="253" height="6.6" fill="url(#i2)"/>
<rect x="1647.6" y="162.8" width="253" height="6.6" fill="url(#i3)"/>
<rect x="1647.6" y="168.8" width="253" height="6.6" fill="url(#i4)"/>
<rect x="1647.6" y="174.8" width="253" height="6.6" fill="url(#i5)"/>
<rect x="1647.6" y="180.8" width="253" height="6.6" fill="url(#i6)"/>
<rect x="1647.6" y="186.8" width="253" height="6.6" fill="url(#i7)"/>
<rect x="1647.6" y="192.8" width="253" height="6.6" fill="url(#i8)"/>
<rect x="1647.6" y="198.8" width="253" height="6.6" fill="url(#i9)"/>
<rect x="1647.6" y="204.8" width="253" height="6.6" fill="url(#i10)"/>
<rect x="1647.6" y="210.8" width="253" height="6.6" fill="url(#i11)"/>
<rect x="1647.6" y="216.8" width="253" height="6.6" fill="url(#i12)"/>
<rect x="1647.6" y="222.8" width="253" height="6.6" fill="url(#i13)"/>
<rect x="1647.6" y="228.8" width="253" height="6.6" fill="url(#i14)"/>
<rect x="1647.6" y="234.8" width="253" height="6.6" fill="url(#i15)"/>
<rect x="1647.6" y="240.8" width="253" height="6.6" fill="url(#i16)"/>
<rect x="1647.6" y="246.8" width="253" height="6.6" fill="url(#i17)"/>
<rect x="1647.6" y="252.8" width="253" height="6.6" fill="url(#i18)"/>
<rect x="1647.6" y="258.8" width="253" height="6.6" fill="url(#i19)"/>
<rect x="1647.6" y="264.8" width="253" height="6.6" fill="url(#i20)"/>
<rect x="1647.6" y="270.8" width="253" height="6.6" fill="url(#i21)"/>
<rect x="1647.6" y="276.8" width="253" height="6.6" fill="url(#i22)"/>
<rect x="1647.6" y="282.8" width="253" height="6.6" fill="url(#i23)"/>
<rect x="1647.6" y="288.8" width="253" height="6.6" fill="url(#i24)"/>
<rect x="1647.6" y="294.8" width="253" height="6.6" fill="url(#i25)"/>
<rect x="1647.6" y="300.8" width="253" height="6.6" fill="url(#i26)"/>
<rect x="1647.6" y="306.8" width="253" height="6.6" fill="url(#i27)"/>
<rect x="1647.6" y="312.8" width="253" height="6.6" fill="url(#i28)"/>
<rect x="1647.6" y="318.8" width="253" height="6.6" fill="url(#i29)"/>
<rect x="1647.6" y="324.8" width="253" height="6.6" fill="url(#i30)"/>
<rect x="1647.6" y="330.8" width="253" height="6.6" fill="url(#i31)"/>
<rect x="1647.6" y="336.8" width="253" height="6.6" fill="url(#i32)"/>
<rect x="1647.6" y="342.8" width="253" height="1.6" fill="url(#i33)"/>
</g>
<path d="M1257.8 -80.6L2729.2 845.8L2729.2 -580.6L1257.8 -580.6Z" fill="#000" fill-opacity="0.4"/>
</g>
<rect x="1648.1" y="144.3" width="252" height="200" fill="none" stroke="#a0a0a0" stroke-width="1.4"/>
<rect x="1764.5" y="235.7" width="16.4" height="16.4" fill="none" stroke="#fff" stroke-width="1.6"/>
<circle cx="1774.4" cy="244.1" r="4.7" fill="#bfbf00" stroke="#000" stroke-width="1.3"/>
</g>
</g>
<g id="current-reading">
<text x="17.5" y="775.5" font-size="29.5" fill="#f2f2f2" textLength="251" lengthAdjust="spacingAndGlyphs" class="lt" stroke="#f2f2f2" stroke-width="1">Current Reading</text>
<text x="17.5" y="822" font-size="25" fill="#f2f2f2" textLength="117" lengthAdjust="spacingAndGlyphs" class="lt" stroke="#f2f2f2" stroke-width="1">x: 0,4195</text>
<text x="17.5" y="866.3" font-size="25" fill="#f2f2f2" textLength="118" lengthAdjust="spacingAndGlyphs" class="lt" stroke="#f2f2f2" stroke-width="1">y: 0,5054</text>
<text x="17.5" y="910.6" font-size="25" fill="#f2f2f2" textLength="110" lengthAdjust="spacingAndGlyphs" class="lt" stroke="#f2f2f2" stroke-width="1">fL: 43,85</text>
<text x="17.5" y="954.7" font-size="25" fill="#f2f2f2" textLength="182" lengthAdjust="spacingAndGlyphs" class="lt" stroke="#f2f2f2" stroke-width="1">cd/m²: 150,24</text>
</g>
<g id="rgb-balance-chart">
<text x="537.3" y="747.1" font-size="15.5" fill="#ddd" text-anchor="middle" textLength="96" lengthAdjust="spacingAndGlyphs">RGB Balance</text>
<rect x="398" y="754" width="300.4" height="195.3" fill="#242424"/>
<path d="M398 802.8H698.4M398 851.6H698.4M398 900.5H698.4" stroke="#7c7c7c" stroke-width="1.6" fill="none"/>
<path d="M398 754H698.4V949.3H398Z" stroke="#8c8c8c" stroke-width="1.8" fill="none"/>
<path d="M398 755.6H698.4" stroke="#8c8c8c" stroke-width="1" fill="none"/>
<text x="391.5" y="760.4" font-size="14.7" fill="#ddd" text-anchor="end" textLength="9.5" lengthAdjust="spacingAndGlyphs">4</text>
<text x="391.5" y="809.2" font-size="14.7" fill="#ddd" text-anchor="end" textLength="9.5" lengthAdjust="spacingAndGlyphs">2</text>
<text x="391.5" y="858" font-size="14.7" fill="#ddd" text-anchor="end" textLength="9.5" lengthAdjust="spacingAndGlyphs">0</text>
<text x="391.5" y="906.9" font-size="14.7" fill="#ddd" text-anchor="end" textLength="15.5" lengthAdjust="spacingAndGlyphs">-2</text>
<text x="391.5" y="955.7" font-size="14.7" fill="#ddd" text-anchor="end" textLength="15.5" lengthAdjust="spacingAndGlyphs">-4</text>
<path d="M392 754H398M392 802.8H398M392 851.6H398M392 900.5H398M392 949.3H398M398 949.3V955.3M698.4 949.3V955.3" stroke="#d8d8d8" stroke-width="1.3" fill="none"/>
<text x="548" y="966.6" font-size="15.5" fill="#ddd" text-anchor="middle" textLength="41" lengthAdjust="spacingAndGlyphs">100%</text>
<rect x="427.2" y="852.2" width="79" height="49.6" fill="url(#rbar)" stroke="#000" stroke-width="1.7"/>
<rect x="506.2" y="852.2" width="79.9" height="52.6" fill="url(#gbar)" stroke="#000" stroke-width="1.7"/>
<rect x="586.1" y="852.2" width="79.8" height="24.4" fill="url(#bbar)" stroke="#000" stroke-width="1.7"/>
</g>
<g id="data-table">
<rect x="746.2" y="728.1" width="806.6" height="33" fill="url(#thead)"/>
<rect x="723.2" y="761.1" width="23" height="185.8" fill="url(#tleft)"/>
<rect x="723.2" y="728.1" width="23" height="33" fill="#000"/>
<rect x="746.2" y="761.1" width="806.6" height="31.2" fill="#404040"/>
<rect x="746.2" y="792" width="806.6" height="31.5" fill="#808080"/>
<rect x="746.2" y="823.2" width="806.6" height="31" fill="#404040"/>
<rect x="746.2" y="853.9" width="806.6" height="31.4" fill="#808080"/>
<rect x="746.2" y="885" width="806.6" height="31.3" fill="#404040"/>
<rect x="746.2" y="916" width="806.6" height="31.2" fill="#808080"/>
<text x="937.4" y="750.6" font-size="20.2" fill="#f4f4f4" textLength="46" lengthAdjust="spacingAndGlyphs">20%</text>
<text x="1062" y="750.6" font-size="20.2" fill="#f4f4f4" textLength="46" lengthAdjust="spacingAndGlyphs">40%</text>
<text x="1186.6" y="750.6" font-size="20.2" fill="#f4f4f4" textLength="46" lengthAdjust="spacingAndGlyphs">60%</text>
<text x="1311.2" y="750.6" font-size="20.2" fill="#f4f4f4" textLength="46" lengthAdjust="spacingAndGlyphs">80%</text>
<text x="1435.8" y="750.6" font-size="20.2" fill="#f4f4f4" textLength="59.5" lengthAdjust="spacingAndGlyphs">100%</text>
<text x="753.4" y="783.7" font-size="20.2" fill="#f4f4f4" textLength="90.5" lengthAdjust="spacingAndGlyphs">x: CIE31</text>
<text x="937.4" y="783.7" font-size="20.2" fill="#f4f4f4" textLength="78" lengthAdjust="spacingAndGlyphs">0,3387</text>
<text x="1062" y="783.7" font-size="20.2" fill="#f4f4f4" textLength="78" lengthAdjust="spacingAndGlyphs">0,3602</text>
<text x="1186.6" y="783.7" font-size="20.2" fill="#f4f4f4" textLength="78" lengthAdjust="spacingAndGlyphs">0,3791</text>
<text x="1311.2" y="783.7" font-size="20.2" fill="#f4f4f4" textLength="78" lengthAdjust="spacingAndGlyphs">0,3972</text>
<text x="1435.8" y="783.7" font-size="20.2" fill="#f4f4f4" textLength="78" lengthAdjust="spacingAndGlyphs">0,4195</text>
<text x="753.4" y="814.6" font-size="20.2" fill="#f4f4f4" textLength="90.5" lengthAdjust="spacingAndGlyphs">y: CIE31</text>
<text x="937.4" y="814.6" font-size="20.2" fill="#f4f4f4" textLength="78" lengthAdjust="spacingAndGlyphs">0,3702</text>
<text x="1062" y="814.6" font-size="20.2" fill="#f4f4f4" textLength="78" lengthAdjust="spacingAndGlyphs">0,4053</text>
<text x="1186.6" y="814.6" font-size="20.2" fill="#f4f4f4" textLength="78" lengthAdjust="spacingAndGlyphs">0,4389</text>
<text x="1311.2" y="814.6" font-size="20.2" fill="#f4f4f4" textLength="78" lengthAdjust="spacingAndGlyphs">0,4687</text>
<text x="1435.8" y="814.6" font-size="20.2" fill="#f4f4f4" textLength="78" lengthAdjust="spacingAndGlyphs">0,5054</text>
<text x="753.4" y="845.8" font-size="20.2" fill="#f4f4f4" textLength="14.5" lengthAdjust="spacingAndGlyphs">Y</text>
<text x="938.4" y="845.8" font-size="20.2" fill="#f4f4f4" textLength="106.5" lengthAdjust="spacingAndGlyphs">158,9028</text>
<text x="1063" y="845.8" font-size="20.2" fill="#f4f4f4" textLength="106.5" lengthAdjust="spacingAndGlyphs">156,2747</text>
<text x="1187.6" y="845.8" font-size="20.2" fill="#f4f4f4" textLength="106.5" lengthAdjust="spacingAndGlyphs">153,6786</text>
<text x="1312.2" y="845.8" font-size="20.2" fill="#f4f4f4" textLength="106.5" lengthAdjust="spacingAndGlyphs">152,0927</text>
<text x="1436.8" y="845.8" font-size="20.2" fill="#f4f4f4" textLength="106.5" lengthAdjust="spacingAndGlyphs">150,2366</text>
<text x="753.4" y="876.5" font-size="20.2" fill="#f4f4f4" textLength="164.3" lengthAdjust="spacingAndGlyphs">Target x:CIE31</text>
<text x="937.4" y="876.5" font-size="20.2" fill="#f4f4f4" textLength="78" lengthAdjust="spacingAndGlyphs">0,3344</text>
<text x="1062" y="876.5" font-size="20.2" fill="#f4f4f4" textLength="78" lengthAdjust="spacingAndGlyphs">0,3564</text>
<text x="1186.6" y="876.5" font-size="20.2" fill="#f4f4f4" textLength="78" lengthAdjust="spacingAndGlyphs">0,3773</text>
<text x="1311.2" y="876.5" font-size="20.2" fill="#f4f4f4" textLength="78" lengthAdjust="spacingAndGlyphs">0,3969</text>
<text x="1435.8" y="876.5" font-size="20.2" fill="#f4f4f4" textLength="78" lengthAdjust="spacingAndGlyphs">0,4193</text>
<text x="753.4" y="907.6" font-size="20.2" fill="#f4f4f4" textLength="164.8" lengthAdjust="spacingAndGlyphs">Target y:CIE31</text>
<text x="937.4" y="907.6" font-size="20.2" fill="#f4f4f4" textLength="78" lengthAdjust="spacingAndGlyphs">0,3648</text>
<text x="1062" y="907.6" font-size="20.2" fill="#f4f4f4" textLength="78" lengthAdjust="spacingAndGlyphs">0,4013</text>
<text x="1186.6" y="907.6" font-size="20.2" fill="#f4f4f4" textLength="78" lengthAdjust="spacingAndGlyphs">0,4358</text>
<text x="1311.2" y="907.6" font-size="20.2" fill="#f4f4f4" textLength="78" lengthAdjust="spacingAndGlyphs">0,4682</text>
<text x="1435.8" y="907.6" font-size="20.2" fill="#f4f4f4" textLength="78" lengthAdjust="spacingAndGlyphs">0,5053</text>
<text x="753.4" y="938.6" font-size="20.2" fill="#f4f4f4" textLength="95.5" lengthAdjust="spacingAndGlyphs">Target Y</text>
<text x="938.4" y="938.6" font-size="20.2" fill="#f4f4f4" textLength="106.5" lengthAdjust="spacingAndGlyphs">162,0328</text>
<text x="1063" y="938.6" font-size="20.2" fill="#f4f4f4" textLength="106.5" lengthAdjust="spacingAndGlyphs">159,1887</text>
<text x="1187.6" y="938.6" font-size="20.2" fill="#f4f4f4" textLength="106.5" lengthAdjust="spacingAndGlyphs">157,0034</text>
<text x="1312.2" y="938.6" font-size="20.2" fill="#f4f4f4" textLength="106.5" lengthAdjust="spacingAndGlyphs">155,2883</text>
<text x="1436.8" y="938.6" font-size="20.2" fill="#f4f4f4" textLength="106.5" lengthAdjust="spacingAndGlyphs">153,6303</text>
</g>
<g id="bottom-bar">
<rect x="0" y="977.8" width="1912" height="62.2" fill="url(#bbarbg)"/>
<rect x="0" y="977.8" width="1597" height="62.2" fill="#000" fill-opacity="0.18"/>
<rect x="812" y="977.8" width="785" height="62.2" fill="url(#bbarbg)"/>
<rect x="1" y="977.8" width="45.2" height="61.4" rx="3.5" fill="url(#bbtn)"/>
<circle cx="23.5" cy="987.6" r="7.3" fill="url(#bcirc)"/>
<path d="M19.2 990l4.3-4.6l4.3 4.6z" fill="#2c2c2c"/>
<rect x="6.2" y="1004.2" width="34.8" height="29.5" rx="2.5" fill="#ffff00"/>
<rect x="51.8" y="977.8" width="150.2" height="61.4" rx="3.5" fill="url(#bbtn)"/>
<rect x="57.4" y="983.3" width="139.6" height="35.8" rx="3" fill="#c0c0a5" stroke="#000" stroke-opacity="0.16" stroke-width="1"/>
<text x="127.1" y="1033.6" font-size="10.5" fill="#303030" text-anchor="middle" textLength="21.5" lengthAdjust="spacingAndGlyphs" font-weight="bold">20%</text>
<rect x="203.9" y="977.8" width="150.2" height="61.4" rx="3.5" fill="url(#bbtn)"/>
<rect x="209.5" y="983.3" width="139.6" height="35.8" rx="3" fill="#c0bf87" stroke="#000" stroke-opacity="0.16" stroke-width="1"/>
<text x="279.2" y="1033.6" font-size="10.5" fill="#303030" text-anchor="middle" textLength="21.5" lengthAdjust="spacingAndGlyphs" font-weight="bold">40%</text>
<rect x="355.9" y="977.8" width="150.2" height="61.4" rx="3.5" fill="url(#bbtn)"/>
<rect x="361.5" y="983.3" width="139.6" height="35.8" rx="3" fill="#c0be6d" stroke="#000" stroke-opacity="0.16" stroke-width="1"/>
<text x="431.2" y="1033.6" font-size="10.5" fill="#303030" text-anchor="middle" textLength="21.5" lengthAdjust="spacingAndGlyphs" font-weight="bold">60%</text>
<rect x="508" y="977.8" width="150.2" height="61.4" rx="3.5" fill="url(#bbtn)"/>
<rect x="513.6" y="983.3" width="139.6" height="35.8" rx="3" fill="#c0bf4f" stroke="#000" stroke-opacity="0.16" stroke-width="1"/>
<text x="583.2" y="1033.6" font-size="10.5" fill="#303030" text-anchor="middle" textLength="21.5" lengthAdjust="spacingAndGlyphs" font-weight="bold">80%</text>
<rect x="660" y="977.8" width="150.2" height="61.4" rx="3.5" fill="url(#bsel)"/>
<rect x="665.6" y="983.3" width="139.6" height="35.8" rx="3" fill="#c4c200" stroke="#000" stroke-opacity="0.16" stroke-width="1"/>
<text x="735.3" y="1033.6" font-size="10.5" fill="#fff" text-anchor="middle" textLength="27.5" lengthAdjust="spacingAndGlyphs" font-weight="bold">100%</text>
<rect x="1596.8" y="977.9" width="48.2" height="18" rx="3.5" fill="url(#bbtn)"/>
<rect x="1596.8" y="990" width="48.2" height="6" fill="#8a8a8a"/>
<circle cx="1621" cy="986.8" r="7.3" fill="url(#bcirc)"/>
<path d="M1616.7 989.2l4.3-4.6l4.3 4.6z" fill="#2c2c2c"/>
<rect x="1596.8" y="996.9" width="48.2" height="48" rx="3.5" fill="url(#bbtn)"/>
<rect x="1606.3" y="1003.6" width="29" height="29" rx="3.5" fill="url(#stopglass)" stroke="#2c2c2c" stroke-width="2.6"/>
<rect x="1613.8" y="1011.2" width="14" height="13.6" fill="#000"/>
<rect x="1646.6" y="977.9" width="225.2" height="29.9" rx="3" fill="url(#bbtn)"/>
<path d="M1692.2 978.5V1007.5M1737.6 978.5V1007.5M1782.8 978.5V1007.5M1827.5 978.5V1007.5" stroke="#3c3c3c" stroke-width="1" fill="none"/>
<rect x="1872.3" y="977.9" width="40" height="30.5" fill="url(#bdk)"/>
<circle cx="1669" cy="993.1" r="10" fill="url(#bcirc)"/>
<circle cx="1715" cy="993.1" r="10" fill="url(#bcirc)"/>
<circle cx="1759.7" cy="993.1" r="10" fill="url(#bcirc)"/>
<circle cx="1804.8" cy="993.1" r="10" fill="url(#bcirc)"/>
<circle cx="1850" cy="993.1" r="10" fill="url(#bcirc)"/>
<circle cx="1896" cy="993" r="10" fill="url(#bdkc)"/>
<rect x="1664.8" y="988.9" width="8.4" height="8.4" fill="#2c2c2c"/>
<path d="M1711.7 987.6v11l9.300-5.500z" fill="#2c2c2c"/>
<path d="M1757.500 988h-2.700v10.200h2.700M1761.900 988h2.700v10.200h-2.700" stroke="#2c2c2c" stroke-width="2" fill="none"/>
<path d="M1757.300 993.100h1.500M1760.600 993.100h1.500" stroke="#2c2c2c" stroke-width="1.800" fill="none"/>
<path d="M1804.800 993.100c-1.300-2.200-2.400-2.900-3.600-2.900a2.900 2.900 0 0 0 0 5.800c1.200 0 2.300-.700 3.600-2.900c1.300 2.200 2.400 2.900 3.600 2.900a2.900 2.900 0 0 0 0-5.800c-1.200 0-2.300.700-3.600 2.900z" stroke="#2c2c2c" stroke-width="1.800" fill="none"/>
<path d="M1844.600 992.200a5.600 5.600 0 0 1 9.600-3" stroke="#2c2c2c" stroke-width="2.300" fill="none"/><path d="M1856.300 986v5.200h-5.200z" fill="#2c2c2c"/>
<path d="M1855.400 994a5.600 5.600 0 0 1-9.600 3" stroke="#2c2c2c" stroke-width="2.300" fill="none"/><path d="M1843.700 1000.200v-5.200h5.200z" fill="#2c2c2c"/>
<rect x="1646.6" y="1009.2" width="135.400" height="34" rx="3" fill="url(#bbtn)"/>
<rect x="1783" y="1009.200" width="133" height="34" rx="3" fill="url(#bbtn)"/>
<circle cx="1676.900" cy="1024.400" r="10" fill="url(#bcirc)"/><circle cx="1890" cy="1024.400" r="10" fill="url(#bcirc)"/>
<path d="M1676.200 1019.800l-3.700 4.600l3.700 4.600M1681 1019.800l-3.700 4.600l3.700 4.600" stroke="#2c2c2c" stroke-width="1.600" fill="none"/>
<path d="M1885.900 1019.800l3.700 4.600l-3.700 4.600M1890.700 1019.800l3.700 4.600l-3.700 4.600" stroke="#2c2c2c" stroke-width="1.600" fill="none"/>
<text x="1703.6" y="1031.4" font-size="21.5" fill="#2e2e2e" textLength="50.5" lengthAdjust="spacingAndGlyphs" stroke="#2e2e2e" stroke-width="0.5">Back</text>
<text x="1810.4" y="1031.4" font-size="21.5" fill="#2e2e2e" textLength="51.5" lengthAdjust="spacingAndGlyphs" stroke="#2e2e2e" stroke-width="0.5">Next</text>
</g>
</svg>
</body></html>
